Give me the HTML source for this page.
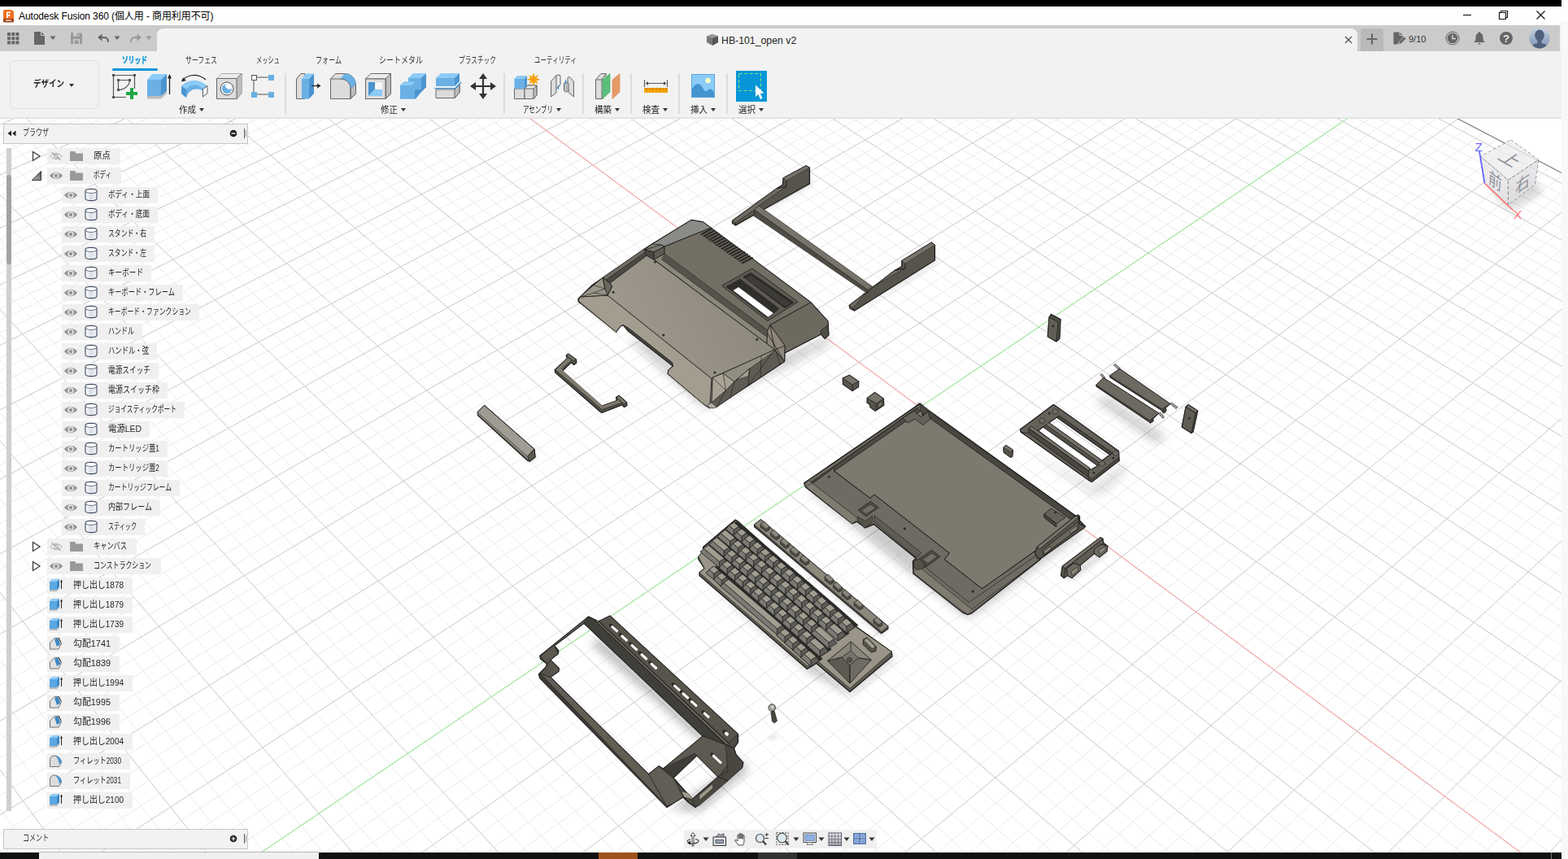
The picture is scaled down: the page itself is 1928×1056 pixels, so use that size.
<!DOCTYPE html>
<html lang="ja"><head><meta charset="utf-8"><title>Autodesk Fusion 360</title>
<style>
html,body{margin:0;padding:0}
body{width:1928px;height:1056px;position:relative;overflow:hidden;background:#f8f8f8;font-family:"Liberation Sans","Noto Sans CJK JP",sans-serif;font-size:12px;color:#222}
.abs{position:absolute}

.t{position:absolute;white-space:nowrap;line-height:1}
.sx{display:inline-block;transform-origin:0 50%;white-space:nowrap}
.sep{position:absolute;top:90px;width:2px;height:50px;background:#dcdcdc}
.tab{position:absolute;top:67px;font-size:11px;color:#333;line-height:14px;white-space:nowrap}
.grp{position:absolute;top:128px;font-size:11px;color:#222;line-height:14px;white-space:nowrap}
.dd{display:inline-block;width:0;height:0;border-left:3.5px solid transparent;border-right:3.5px solid transparent;border-top:4.5px solid #333;vertical-align:middle;margin-left:3px;margin-top:-2px}

</style></head><body>
<svg width="1920" height="902" viewBox="0 146 1920 902" style="position:absolute;left:0;top:146px;background:#fff" shape-rendering="auto">
<g stroke-linecap="butt">
<line x1="-770.3" y1="251.3" x2="807.9" y2="-367.8" stroke="#ebebeb" stroke-width="1"/>
<line x1="-764.7" y1="260.5" x2="816.6" y2="-363.2" stroke="#ebebeb" stroke-width="1"/>
<line x1="-759.1" y1="269.7" x2="825.4" y2="-358.6" stroke="#ebebeb" stroke-width="1"/>
<line x1="-753.4" y1="279.0" x2="834.3" y2="-354.0" stroke="#ebebeb" stroke-width="1"/>
<line x1="-741.9" y1="297.8" x2="852.2" y2="-344.6" stroke="#ebebeb" stroke-width="1"/>
<line x1="-736.1" y1="307.3" x2="861.2" y2="-339.9" stroke="#ebebeb" stroke-width="1"/>
<line x1="-730.2" y1="316.9" x2="870.3" y2="-335.2" stroke="#ebebeb" stroke-width="1"/>
<line x1="-724.3" y1="326.6" x2="879.5" y2="-330.4" stroke="#ebebeb" stroke-width="1"/>
<line x1="-712.3" y1="346.3" x2="897.9" y2="-320.8" stroke="#ebebeb" stroke-width="1"/>
<line x1="-706.2" y1="356.2" x2="907.2" y2="-315.9" stroke="#ebebeb" stroke-width="1"/>
<line x1="-700.1" y1="366.3" x2="916.6" y2="-311.0" stroke="#ebebeb" stroke-width="1"/>
<line x1="-693.9" y1="376.4" x2="926.0" y2="-306.1" stroke="#ebebeb" stroke-width="1"/>
<line x1="-681.3" y1="397.0" x2="945.1" y2="-296.2" stroke="#ebebeb" stroke-width="1"/>
<line x1="-675.0" y1="407.4" x2="954.7" y2="-291.2" stroke="#ebebeb" stroke-width="1"/>
<line x1="-668.6" y1="418.0" x2="964.4" y2="-286.1" stroke="#ebebeb" stroke-width="1"/>
<line x1="-662.1" y1="428.6" x2="974.1" y2="-281.0" stroke="#ebebeb" stroke-width="1"/>
<line x1="-648.9" y1="450.1" x2="993.8" y2="-270.8" stroke="#ebebeb" stroke-width="1"/>
<line x1="-642.3" y1="461.0" x2="1003.7" y2="-265.6" stroke="#ebebeb" stroke-width="1"/>
<line x1="-635.5" y1="472.1" x2="1013.7" y2="-260.4" stroke="#ebebeb" stroke-width="1"/>
<line x1="-628.7" y1="483.2" x2="1023.8" y2="-255.1" stroke="#ebebeb" stroke-width="1"/>
<line x1="-614.9" y1="505.8" x2="1044.1" y2="-244.5" stroke="#ebebeb" stroke-width="1"/>
<line x1="-608.0" y1="517.2" x2="1054.3" y2="-239.2" stroke="#ebebeb" stroke-width="1"/>
<line x1="-600.9" y1="528.8" x2="1064.7" y2="-233.8" stroke="#ebebeb" stroke-width="1"/>
<line x1="-593.8" y1="540.5" x2="1075.1" y2="-228.4" stroke="#ebebeb" stroke-width="1"/>
<line x1="-579.3" y1="564.2" x2="1096.1" y2="-217.4" stroke="#ebebeb" stroke-width="1"/>
<line x1="-572.0" y1="576.2" x2="1106.7" y2="-211.9" stroke="#ebebeb" stroke-width="1"/>
<line x1="-564.5" y1="588.4" x2="1117.4" y2="-206.3" stroke="#ebebeb" stroke-width="1"/>
<line x1="-557.0" y1="600.7" x2="1128.1" y2="-200.7" stroke="#ebebeb" stroke-width="1"/>
<line x1="-541.8" y1="625.6" x2="1149.8" y2="-189.4" stroke="#ebebeb" stroke-width="1"/>
<line x1="-534.1" y1="638.2" x2="1160.8" y2="-183.6" stroke="#ebebeb" stroke-width="1"/>
<line x1="-526.3" y1="651.0" x2="1171.8" y2="-177.9" stroke="#ebebeb" stroke-width="1"/>
<line x1="-518.4" y1="663.9" x2="1183.0" y2="-172.1" stroke="#ebebeb" stroke-width="1"/>
<line x1="-502.4" y1="690.1" x2="1205.4" y2="-160.3" stroke="#ebebeb" stroke-width="1"/>
<line x1="-494.3" y1="703.4" x2="1216.8" y2="-154.4" stroke="#ebebeb" stroke-width="1"/>
<line x1="-486.1" y1="716.9" x2="1228.2" y2="-148.5" stroke="#ebebeb" stroke-width="1"/>
<line x1="-477.8" y1="730.5" x2="1239.8" y2="-142.4" stroke="#ebebeb" stroke-width="1"/>
<line x1="-460.9" y1="758.1" x2="1263.0" y2="-130.3" stroke="#ebebeb" stroke-width="1"/>
<line x1="-452.4" y1="772.1" x2="1274.8" y2="-124.2" stroke="#ebebeb" stroke-width="1"/>
<line x1="-443.7" y1="786.3" x2="1286.6" y2="-118.0" stroke="#ebebeb" stroke-width="1"/>
<line x1="-435.0" y1="800.6" x2="1298.6" y2="-111.8" stroke="#ebebeb" stroke-width="1"/>
<line x1="-417.2" y1="829.8" x2="1322.7" y2="-99.2" stroke="#ebebeb" stroke-width="1"/>
<line x1="-408.1" y1="844.6" x2="1334.9" y2="-92.8" stroke="#ebebeb" stroke-width="1"/>
<line x1="-399.0" y1="859.6" x2="1347.1" y2="-86.4" stroke="#ebebeb" stroke-width="1"/>
<line x1="-389.8" y1="874.7" x2="1359.5" y2="-80.0" stroke="#ebebeb" stroke-width="1"/>
<line x1="-371.0" y1="905.5" x2="1384.5" y2="-66.9" stroke="#ebebeb" stroke-width="1"/>
<line x1="-361.4" y1="921.2" x2="1397.1" y2="-60.3" stroke="#ebebeb" stroke-width="1"/>
<line x1="-351.7" y1="937.0" x2="1409.9" y2="-53.7" stroke="#ebebeb" stroke-width="1"/>
<line x1="-342.0" y1="953.0" x2="1422.7" y2="-47.0" stroke="#ebebeb" stroke-width="1"/>
<line x1="-322.1" y1="985.6" x2="1448.6" y2="-33.5" stroke="#ebebeb" stroke-width="1"/>
<line x1="-312.0" y1="1002.2" x2="1461.7" y2="-26.6" stroke="#ebebeb" stroke-width="1"/>
<line x1="-301.7" y1="1019.0" x2="1474.9" y2="-19.8" stroke="#ebebeb" stroke-width="1"/>
<line x1="-291.4" y1="1035.9" x2="1488.2" y2="-12.8" stroke="#ebebeb" stroke-width="1"/>
<line x1="-270.3" y1="1070.5" x2="1515.2" y2="1.2" stroke="#ebebeb" stroke-width="1"/>
<line x1="-259.5" y1="1088.1" x2="1528.8" y2="8.3" stroke="#ebebeb" stroke-width="1"/>
<line x1="-248.7" y1="1105.8" x2="1542.5" y2="15.5" stroke="#ebebeb" stroke-width="1"/>
<line x1="-237.7" y1="1123.9" x2="1556.3" y2="22.7" stroke="#ebebeb" stroke-width="1"/>
<line x1="-215.3" y1="1160.5" x2="1584.3" y2="37.3" stroke="#ebebeb" stroke-width="1"/>
<line x1="-203.9" y1="1179.2" x2="1598.4" y2="44.7" stroke="#ebebeb" stroke-width="1"/>
<line x1="-192.3" y1="1198.1" x2="1612.7" y2="52.1" stroke="#ebebeb" stroke-width="1"/>
<line x1="-180.6" y1="1217.3" x2="1627.1" y2="59.6" stroke="#ebebeb" stroke-width="1"/>
<line x1="-156.8" y1="1256.3" x2="1656.1" y2="74.8" stroke="#ebebeb" stroke-width="1"/>
<line x1="-144.7" y1="1276.2" x2="1670.8" y2="82.5" stroke="#ebebeb" stroke-width="1"/>
<line x1="-132.4" y1="1296.4" x2="1685.7" y2="90.2" stroke="#ebebeb" stroke-width="1"/>
<line x1="-119.9" y1="1316.8" x2="1700.6" y2="98.0" stroke="#ebebeb" stroke-width="1"/>
<line x1="-94.5" y1="1358.4" x2="1730.9" y2="113.8" stroke="#ebebeb" stroke-width="1"/>
<line x1="-81.6" y1="1379.6" x2="1746.2" y2="121.8" stroke="#ebebeb" stroke-width="1"/>
<line x1="-68.5" y1="1401.1" x2="1761.6" y2="129.8" stroke="#ebebeb" stroke-width="1"/>
<line x1="-55.2" y1="1422.9" x2="1777.2" y2="137.9" stroke="#ebebeb" stroke-width="1"/>
<line x1="-28.0" y1="1467.3" x2="1808.7" y2="154.4" stroke="#ebebeb" stroke-width="1"/>
<line x1="-14.2" y1="1490.0" x2="1824.6" y2="162.7" stroke="#ebebeb" stroke-width="1"/>
<line x1="-0.2" y1="1513.0" x2="1840.7" y2="171.1" stroke="#ebebeb" stroke-width="1"/>
<line x1="14.1" y1="1536.3" x2="1856.9" y2="179.5" stroke="#ebebeb" stroke-width="1"/>
<line x1="43.1" y1="1583.9" x2="1889.7" y2="196.7" stroke="#ebebeb" stroke-width="1"/>
<line x1="57.9" y1="1608.2" x2="1906.4" y2="205.3" stroke="#ebebeb" stroke-width="1"/>
<line x1="73.0" y1="1632.8" x2="1923.1" y2="214.1" stroke="#ebebeb" stroke-width="1"/>
<line x1="88.2" y1="1657.8" x2="1940.0" y2="222.9" stroke="#ebebeb" stroke-width="1"/>
<line x1="119.4" y1="1708.9" x2="1974.3" y2="240.8" stroke="#ebebeb" stroke-width="1"/>
<line x1="135.3" y1="1735.0" x2="1991.6" y2="249.8" stroke="#ebebeb" stroke-width="1"/>
<line x1="151.5" y1="1761.5" x2="2009.1" y2="258.9" stroke="#ebebeb" stroke-width="1"/>
<line x1="167.9" y1="1788.3" x2="2026.7" y2="268.1" stroke="#ebebeb" stroke-width="1"/>
<line x1="201.5" y1="1843.3" x2="2062.5" y2="286.8" stroke="#ebebeb" stroke-width="1"/>
<line x1="218.6" y1="1871.4" x2="2080.6" y2="296.2" stroke="#ebebeb" stroke-width="1"/>
<line x1="236.0" y1="1899.9" x2="2098.9" y2="305.8" stroke="#ebebeb" stroke-width="1"/>
<line x1="253.7" y1="1928.9" x2="2117.3" y2="315.4" stroke="#ebebeb" stroke-width="1"/>
<line x1="289.9" y1="1988.2" x2="2154.7" y2="334.9" stroke="#ebebeb" stroke-width="1"/>
<line x1="308.5" y1="2018.6" x2="2173.6" y2="344.7" stroke="#ebebeb" stroke-width="1"/>
<line x1="327.3" y1="2049.4" x2="2192.7" y2="354.7" stroke="#ebebeb" stroke-width="1"/>
<line x1="346.4" y1="2080.7" x2="2212.0" y2="364.8" stroke="#ebebeb" stroke-width="1"/>
<line x1="385.6" y1="2144.9" x2="2251.0" y2="385.1" stroke="#ebebeb" stroke-width="1"/>
<line x1="405.7" y1="2177.8" x2="2270.8" y2="395.5" stroke="#ebebeb" stroke-width="1"/>
<line x1="426.1" y1="2211.3" x2="2290.8" y2="405.9" stroke="#ebebeb" stroke-width="1"/>
<line x1="446.8" y1="2245.2" x2="2311.0" y2="416.4" stroke="#ebebeb" stroke-width="1"/>
<line x1="489.3" y1="2314.9" x2="2351.9" y2="437.8" stroke="#ebebeb" stroke-width="1"/>
<line x1="511.2" y1="2350.7" x2="2372.7" y2="448.6" stroke="#ebebeb" stroke-width="1"/>
<line x1="533.4" y1="2387.0" x2="2393.6" y2="459.5" stroke="#ebebeb" stroke-width="1"/>
<line x1="555.9" y1="2424.0" x2="2414.8" y2="470.6" stroke="#ebebeb" stroke-width="1"/>
<line x1="602.3" y1="2500.0" x2="2457.6" y2="492.9" stroke="#ebebeb" stroke-width="1"/>
<line x1="626.1" y1="2539.0" x2="2479.4" y2="504.3" stroke="#ebebeb" stroke-width="1"/>
<line x1="650.3" y1="2578.7" x2="2501.4" y2="515.7" stroke="#ebebeb" stroke-width="1"/>
<line x1="675.0" y1="2619.1" x2="2523.5" y2="527.3" stroke="#ebebeb" stroke-width="1"/>
<line x1="725.7" y1="2702.2" x2="2568.6" y2="550.8" stroke="#ebebeb" stroke-width="1"/>
<line x1="751.8" y1="2744.9" x2="2591.4" y2="562.7" stroke="#ebebeb" stroke-width="1"/>
<line x1="778.3" y1="2788.4" x2="2614.5" y2="574.7" stroke="#ebebeb" stroke-width="1"/>
<line x1="805.4" y1="2832.7" x2="2637.7" y2="586.9" stroke="#ebebeb" stroke-width="1"/>
<line x1="-754.9" y1="234.2" x2="865.9" y2="2837.0" stroke="#ebebeb" stroke-width="1"/>
<line x1="-734.2" y1="226.1" x2="898.2" y2="2796.7" stroke="#ebebeb" stroke-width="1"/>
<line x1="-713.6" y1="218.1" x2="930.0" y2="2757.1" stroke="#ebebeb" stroke-width="1"/>
<line x1="-693.2" y1="210.1" x2="961.2" y2="2718.2" stroke="#ebebeb" stroke-width="1"/>
<line x1="-652.9" y1="194.4" x2="1022.1" y2="2642.2" stroke="#ebebeb" stroke-width="1"/>
<line x1="-633.0" y1="186.6" x2="1051.8" y2="2605.2" stroke="#ebebeb" stroke-width="1"/>
<line x1="-613.2" y1="178.9" x2="1081.0" y2="2568.8" stroke="#ebebeb" stroke-width="1"/>
<line x1="-593.5" y1="171.2" x2="1109.8" y2="2532.9" stroke="#ebebeb" stroke-width="1"/>
<line x1="-554.7" y1="156.0" x2="1165.9" y2="2463.0" stroke="#ebebeb" stroke-width="1"/>
<line x1="-535.5" y1="148.5" x2="1193.3" y2="2428.8" stroke="#ebebeb" stroke-width="1"/>
<line x1="-516.4" y1="141.1" x2="1220.3" y2="2395.2" stroke="#ebebeb" stroke-width="1"/>
<line x1="-497.5" y1="133.7" x2="1246.9" y2="2362.1" stroke="#ebebeb" stroke-width="1"/>
<line x1="-460.1" y1="119.1" x2="1298.8" y2="2297.4" stroke="#ebebeb" stroke-width="1"/>
<line x1="-441.5" y1="111.9" x2="1324.1" y2="2265.8" stroke="#ebebeb" stroke-width="1"/>
<line x1="-423.2" y1="104.7" x2="1349.1" y2="2234.7" stroke="#ebebeb" stroke-width="1"/>
<line x1="-404.9" y1="97.6" x2="1373.7" y2="2204.0" stroke="#ebebeb" stroke-width="1"/>
<line x1="-368.8" y1="83.5" x2="1421.8" y2="2144.0" stroke="#ebebeb" stroke-width="1"/>
<line x1="-350.9" y1="76.5" x2="1445.4" y2="2114.7" stroke="#ebebeb" stroke-width="1"/>
<line x1="-333.2" y1="69.6" x2="1468.6" y2="2085.8" stroke="#ebebeb" stroke-width="1"/>
<line x1="-315.6" y1="62.7" x2="1491.4" y2="2057.3" stroke="#ebebeb" stroke-width="1"/>
<line x1="-280.7" y1="49.1" x2="1536.2" y2="2001.5" stroke="#ebebeb" stroke-width="1"/>
<line x1="-263.5" y1="42.4" x2="1558.1" y2="1974.2" stroke="#ebebeb" stroke-width="1"/>
<line x1="-246.4" y1="35.7" x2="1579.7" y2="1947.3" stroke="#ebebeb" stroke-width="1"/>
<line x1="-229.4" y1="29.1" x2="1601.0" y2="1920.8" stroke="#ebebeb" stroke-width="1"/>
<line x1="-195.7" y1="16.0" x2="1642.7" y2="1868.8" stroke="#ebebeb" stroke-width="1"/>
<line x1="-179.1" y1="9.5" x2="1663.1" y2="1843.3" stroke="#ebebeb" stroke-width="1"/>
<line x1="-162.5" y1="3.0" x2="1683.3" y2="1818.2" stroke="#ebebeb" stroke-width="1"/>
<line x1="-146.1" y1="-3.4" x2="1703.1" y2="1793.4" stroke="#ebebeb" stroke-width="1"/>
<line x1="-113.6" y1="-16.1" x2="1742.1" y2="1744.8" stroke="#ebebeb" stroke-width="1"/>
<line x1="-97.5" y1="-22.4" x2="1761.2" y2="1721.0" stroke="#ebebeb" stroke-width="1"/>
<line x1="-81.5" y1="-28.6" x2="1780.1" y2="1697.5" stroke="#ebebeb" stroke-width="1"/>
<line x1="-65.7" y1="-34.8" x2="1798.7" y2="1674.3" stroke="#ebebeb" stroke-width="1"/>
<line x1="-34.2" y1="-47.1" x2="1835.2" y2="1628.8" stroke="#ebebeb" stroke-width="1"/>
<line x1="-18.7" y1="-53.1" x2="1853.1" y2="1606.5" stroke="#ebebeb" stroke-width="1"/>
<line x1="-3.2" y1="-59.2" x2="1870.8" y2="1584.5" stroke="#ebebeb" stroke-width="1"/>
<line x1="12.1" y1="-65.2" x2="1888.2" y2="1562.7" stroke="#ebebeb" stroke-width="1"/>
<line x1="42.6" y1="-77.0" x2="1922.5" y2="1520.0" stroke="#ebebeb" stroke-width="1"/>
<line x1="57.6" y1="-82.9" x2="1939.3" y2="1499.1" stroke="#ebebeb" stroke-width="1"/>
<line x1="72.6" y1="-88.7" x2="1955.9" y2="1478.4" stroke="#ebebeb" stroke-width="1"/>
<line x1="87.4" y1="-94.5" x2="1972.3" y2="1457.9" stroke="#ebebeb" stroke-width="1"/>
<line x1="116.9" y1="-106.0" x2="2004.5" y2="1417.8" stroke="#ebebeb" stroke-width="1"/>
<line x1="131.4" y1="-111.7" x2="2020.3" y2="1398.1" stroke="#ebebeb" stroke-width="1"/>
<line x1="145.9" y1="-117.4" x2="2035.9" y2="1378.6" stroke="#ebebeb" stroke-width="1"/>
<line x1="160.3" y1="-123.0" x2="2051.4" y2="1359.4" stroke="#ebebeb" stroke-width="1"/>
<line x1="188.8" y1="-134.1" x2="2081.7" y2="1321.5" stroke="#ebebeb" stroke-width="1"/>
<line x1="202.9" y1="-139.6" x2="2096.6" y2="1303.0" stroke="#ebebeb" stroke-width="1"/>
<line x1="216.9" y1="-145.1" x2="2111.4" y2="1284.6" stroke="#ebebeb" stroke-width="1"/>
<line x1="230.9" y1="-150.5" x2="2125.9" y2="1266.4" stroke="#ebebeb" stroke-width="1"/>
<line x1="258.5" y1="-161.3" x2="2154.6" y2="1230.8" stroke="#ebebeb" stroke-width="1"/>
<line x1="272.2" y1="-166.6" x2="2168.6" y2="1213.2" stroke="#ebebeb" stroke-width="1"/>
<line x1="285.8" y1="-171.9" x2="2182.5" y2="1195.9" stroke="#ebebeb" stroke-width="1"/>
<line x1="299.3" y1="-177.2" x2="2196.3" y2="1178.7" stroke="#ebebeb" stroke-width="1"/>
<line x1="326.0" y1="-187.7" x2="2223.4" y2="1145.0" stroke="#ebebeb" stroke-width="1"/>
<line x1="339.3" y1="-192.8" x2="2236.7" y2="1128.4" stroke="#ebebeb" stroke-width="1"/>
<line x1="352.5" y1="-198.0" x2="2249.8" y2="1112.0" stroke="#ebebeb" stroke-width="1"/>
<line x1="365.6" y1="-203.1" x2="2262.9" y2="1095.8" stroke="#ebebeb" stroke-width="1"/>
<line x1="391.5" y1="-213.2" x2="2288.5" y2="1063.8" stroke="#ebebeb" stroke-width="1"/>
<line x1="404.4" y1="-218.2" x2="2301.1" y2="1048.1" stroke="#ebebeb" stroke-width="1"/>
<line x1="417.2" y1="-223.2" x2="2313.5" y2="1032.6" stroke="#ebebeb" stroke-width="1"/>
<line x1="429.9" y1="-228.2" x2="2325.9" y2="1017.2" stroke="#ebebeb" stroke-width="1"/>
<line x1="455.1" y1="-238.0" x2="2350.2" y2="986.9" stroke="#ebebeb" stroke-width="1"/>
<line x1="467.5" y1="-242.9" x2="2362.1" y2="972.0" stroke="#ebebeb" stroke-width="1"/>
<line x1="480.0" y1="-247.7" x2="2374.0" y2="957.3" stroke="#ebebeb" stroke-width="1"/>
<line x1="492.3" y1="-252.5" x2="2385.7" y2="942.7" stroke="#ebebeb" stroke-width="1"/>
<line x1="516.7" y1="-262.1" x2="2408.7" y2="914.0" stroke="#ebebeb" stroke-width="1"/>
<line x1="528.8" y1="-266.8" x2="2420.1" y2="899.8" stroke="#ebebeb" stroke-width="1"/>
<line x1="540.9" y1="-271.5" x2="2431.3" y2="885.8" stroke="#ebebeb" stroke-width="1"/>
<line x1="552.9" y1="-276.2" x2="2442.4" y2="871.9" stroke="#ebebeb" stroke-width="1"/>
<line x1="576.6" y1="-285.4" x2="2464.4" y2="844.6" stroke="#ebebeb" stroke-width="1"/>
<line x1="588.4" y1="-290.0" x2="2475.2" y2="831.2" stroke="#ebebeb" stroke-width="1"/>
<line x1="600.1" y1="-294.6" x2="2485.8" y2="817.8" stroke="#ebebeb" stroke-width="1"/>
<line x1="611.7" y1="-299.1" x2="2496.4" y2="804.6" stroke="#ebebeb" stroke-width="1"/>
<line x1="634.8" y1="-308.1" x2="2517.3" y2="778.6" stroke="#ebebeb" stroke-width="1"/>
<line x1="646.2" y1="-312.6" x2="2527.6" y2="765.8" stroke="#ebebeb" stroke-width="1"/>
<line x1="657.6" y1="-317.0" x2="2537.8" y2="753.1" stroke="#ebebeb" stroke-width="1"/>
<line x1="668.9" y1="-321.4" x2="2547.8" y2="740.6" stroke="#ebebeb" stroke-width="1"/>
<line x1="691.3" y1="-330.2" x2="2567.7" y2="715.8" stroke="#ebebeb" stroke-width="1"/>
<line x1="702.4" y1="-334.5" x2="2577.5" y2="703.6" stroke="#ebebeb" stroke-width="1"/>
<line x1="713.5" y1="-338.8" x2="2587.2" y2="691.5" stroke="#ebebeb" stroke-width="1"/>
<line x1="724.5" y1="-343.1" x2="2596.8" y2="679.5" stroke="#ebebeb" stroke-width="1"/>
<line x1="746.3" y1="-351.6" x2="2615.8" y2="655.8" stroke="#ebebeb" stroke-width="1"/>
<line x1="757.1" y1="-355.9" x2="2625.2" y2="644.2" stroke="#ebebeb" stroke-width="1"/>
<line x1="767.8" y1="-360.1" x2="2634.4" y2="632.6" stroke="#ebebeb" stroke-width="1"/>
<line x1="778.5" y1="-364.2" x2="2643.6" y2="621.2" stroke="#ebebeb" stroke-width="1"/>
<line x1="-775.8" y1="242.3" x2="799.2" y2="-372.3" stroke="#c9c9c9" stroke-width="1"/>
<line x1="-747.7" y1="288.3" x2="843.2" y2="-349.3" stroke="#c9c9c9" stroke-width="1"/>
<line x1="-718.3" y1="336.4" x2="888.7" y2="-325.6" stroke="#c9c9c9" stroke-width="1"/>
<line x1="-687.7" y1="386.7" x2="935.5" y2="-301.2" stroke="#c9c9c9" stroke-width="1"/>
<line x1="-655.5" y1="439.3" x2="983.9" y2="-275.9" stroke="#c9c9c9" stroke-width="1"/>
<line x1="-621.9" y1="494.4" x2="1033.9" y2="-249.8" stroke="#c9c9c9" stroke-width="1"/>
<line x1="-586.6" y1="552.3" x2="1085.5" y2="-222.9" stroke="#c9c9c9" stroke-width="1"/>
<line x1="-549.5" y1="613.0" x2="1138.9" y2="-195.0" stroke="#c9c9c9" stroke-width="1"/>
<line x1="-510.5" y1="676.9" x2="1194.2" y2="-166.2" stroke="#c9c9c9" stroke-width="1"/>
<line x1="-469.4" y1="744.2" x2="1251.3" y2="-136.4" stroke="#c9c9c9" stroke-width="1"/>
<line x1="-426.1" y1="815.1" x2="1310.6" y2="-105.5" stroke="#c9c9c9" stroke-width="1"/>
<line x1="-380.4" y1="890.0" x2="1371.9" y2="-73.5" stroke="#c9c9c9" stroke-width="1"/>
<line x1="-332.1" y1="969.2" x2="1435.6" y2="-40.3" stroke="#c9c9c9" stroke-width="1"/>
<line x1="-280.9" y1="1053.1" x2="1501.6" y2="-5.8" stroke="#c9c9c9" stroke-width="1"/>
<line x1="-226.6" y1="1142.1" x2="1570.2" y2="30.0" stroke="#c9c9c9" stroke-width="1"/>
<line x1="-168.8" y1="1236.7" x2="1641.5" y2="67.2" stroke="#c9c9c9" stroke-width="1"/>
<line x1="-107.3" y1="1337.4" x2="1715.7" y2="105.9" stroke="#c9c9c9" stroke-width="1"/>
<line x1="-41.7" y1="1444.9" x2="1792.9" y2="146.1" stroke="#c9c9c9" stroke-width="1"/>
<line x1="28.5" y1="1559.9" x2="1873.2" y2="188.1" stroke="#c9c9c9" stroke-width="1"/>
<line x1="103.7" y1="1683.2" x2="1957.1" y2="231.8" stroke="#c9c9c9" stroke-width="1"/>
<line x1="184.6" y1="1815.6" x2="2044.5" y2="277.4" stroke="#c9c9c9" stroke-width="1"/>
<line x1="271.7" y1="1958.3" x2="2135.9" y2="325.1" stroke="#c9c9c9" stroke-width="1"/>
<line x1="365.8" y1="2112.6" x2="2231.4" y2="374.9" stroke="#c9c9c9" stroke-width="1"/>
<line x1="467.9" y1="2279.8" x2="2331.4" y2="427.1" stroke="#c9c9c9" stroke-width="1"/>
<line x1="578.9" y1="2461.7" x2="2436.1" y2="481.7" stroke="#c9c9c9" stroke-width="1"/>
<line x1="700.1" y1="2660.3" x2="2545.9" y2="539.0" stroke="#c9c9c9" stroke-width="1"/>
<line x1="833.0" y1="2877.9" x2="2661.3" y2="599.2" stroke="#c9c9c9" stroke-width="1"/>
<line x1="-775.8" y1="242.3" x2="833.0" y2="2877.9" stroke="#c9c9c9" stroke-width="1"/>
<line x1="-673.0" y1="202.2" x2="991.9" y2="2679.9" stroke="#c9c9c9" stroke-width="1"/>
<line x1="-574.0" y1="163.6" x2="1138.1" y2="2497.7" stroke="#c9c9c9" stroke-width="1"/>
<line x1="-478.7" y1="126.4" x2="1273.0" y2="2329.5" stroke="#c9c9c9" stroke-width="1"/>
<line x1="-386.8" y1="90.5" x2="1398.0" y2="2173.8" stroke="#c9c9c9" stroke-width="1"/>
<line x1="-298.1" y1="55.9" x2="1514.0" y2="2029.2" stroke="#c9c9c9" stroke-width="1"/>
<line x1="-212.5" y1="22.5" x2="1622.0" y2="1894.6" stroke="#c9c9c9" stroke-width="1"/>
<line x1="-129.8" y1="-9.8" x2="1722.8" y2="1769.0" stroke="#c9c9c9" stroke-width="1"/>
<line x1="-49.9" y1="-41.0" x2="1817.0" y2="1651.4" stroke="#c9c9c9" stroke-width="1"/>
<line x1="27.4" y1="-71.1" x2="1905.4" y2="1541.2" stroke="#c9c9c9" stroke-width="1"/>
<line x1="102.2" y1="-100.3" x2="1988.5" y2="1437.7" stroke="#c9c9c9" stroke-width="1"/>
<line x1="174.6" y1="-128.6" x2="2066.6" y2="1340.3" stroke="#c9c9c9" stroke-width="1"/>
<line x1="244.7" y1="-155.9" x2="2140.3" y2="1248.5" stroke="#c9c9c9" stroke-width="1"/>
<line x1="312.7" y1="-182.5" x2="2209.9" y2="1161.8" stroke="#c9c9c9" stroke-width="1"/>
<line x1="378.6" y1="-208.2" x2="2275.7" y2="1079.7" stroke="#c9c9c9" stroke-width="1"/>
<line x1="442.5" y1="-233.1" x2="2338.1" y2="1002.0" stroke="#c9c9c9" stroke-width="1"/>
<line x1="504.5" y1="-257.3" x2="2397.3" y2="928.3" stroke="#c9c9c9" stroke-width="1"/>
<line x1="564.8" y1="-280.8" x2="2453.5" y2="858.2" stroke="#c9c9c9" stroke-width="1"/>
<line x1="623.3" y1="-303.7" x2="2506.9" y2="791.6" stroke="#c9c9c9" stroke-width="1"/>
<line x1="680.1" y1="-325.8" x2="2557.8" y2="728.1" stroke="#c9c9c9" stroke-width="1"/>
<line x1="735.4" y1="-347.4" x2="2606.4" y2="667.6" stroke="#c9c9c9" stroke-width="1"/>
<line x1="789.1" y1="-368.4" x2="2652.7" y2="609.9" stroke="#c9c9c9" stroke-width="1"/>
<line x1="799.2" y1="-372.3" x2="2661.3" y2="599.2" stroke="#7a7a7a" stroke-width="1.2"/>
<line x1="244.7" y1="-155.9" x2="2140.3" y2="1248.5" stroke="#ff9696" stroke-width="1.0"/>
<line x1="-107.3" y1="1337.4" x2="1715.7" y2="105.9" stroke="#8af08a" stroke-width="1.0"/>
</g>
<defs><filter id="bl2" x="-30%" y="-30%" width="160%" height="160%"><feGaussianBlur stdDeviation="2"/></filter><filter id="bl3" x="-30%" y="-30%" width="160%" height="160%"><feGaussianBlur stdDeviation="3"/></filter><filter id="bl4" x="-30%" y="-30%" width="160%" height="160%"><feGaussianBlur stdDeviation="4"/></filter><filter id="bl5" x="-30%" y="-30%" width="160%" height="160%"><feGaussianBlur stdDeviation="5"/></filter><filter id="bl6" x="-30%" y="-30%" width="160%" height="160%"><feGaussianBlur stdDeviation="6"/></filter><filter id="bl7" x="-30%" y="-30%" width="160%" height="160%"><feGaussianBlur stdDeviation="7"/></filter><linearGradient id="gmp" gradientUnits="userSpaceOnUse" x1="760" y1="420" x2="930" y2="340"><stop offset="0" stop-color="#9f9a8d"/><stop offset="1" stop-color="#8c877b"/></linearGradient></defs>
<circle cx="1130.6" cy="499.4" r="5" fill="#bbb" opacity=".8"/>
<polygon points="905.0,278.8 997.5,227.5 997.5,217.5 955.0,245.0" fill="#000" opacity="0.13" filter="url(#bl4)"/>
<polygon points="1052.5,383.8 1151.2,322.5 1151.2,310.0 1105.0,342.5" fill="#000" opacity="0.13" filter="url(#bl4)"/>
<polygon points="900.5,271.2 955.0,231.8 962.5,227.0 963.0,218.8 991.2,203.8 995.5,206.2 995.5,225.8 904.5,277.0 900.5,274.5" fill="#57544c" stroke="#1b1b1a" stroke-width="1.2" />
<polygon points="900.5,271.2 955.0,231.8 966.2,229.5 933.0,253.0 927.5,258.0 904.5,274.0" fill="#6f6b62" stroke="#1b1b1a" stroke-width="0.5" />
<polygon points="963.0,218.8 991.2,203.8 995.5,206.2 967.0,222.0" fill="#77736a" stroke="#1b1b1a" stroke-width="0.5" />
<polyline points="967.0,222.0 967.0,229.5 955.0,231.8" fill="none" stroke="#1b1b1a" stroke-width="0.8" />
<polyline points="904.5,274.0 904.5,277.0" fill="none" stroke="#1b1b1a" stroke-width="0.8" />
<polygon points="1044.2,375.5 1100.0,332.5 1108.8,327.5 1108.8,320.5 1145.5,298.0 1149.5,301.2 1149.5,320.0 1050.5,382.0 1045.0,379.2" fill="#57544c" stroke="#1b1b1a" stroke-width="1.2" />
<polygon points="1044.2,375.5 1100.0,332.5 1113.0,330.0 1072.5,352.5 1067.5,356.5 1048.8,378.8" fill="#6f6b62" stroke="#1b1b1a" stroke-width="0.5" />
<polygon points="1108.8,320.5 1145.5,298.0 1149.5,301.2 1113.0,324.2" fill="#77736a" stroke="#1b1b1a" stroke-width="0.5" />
<polyline points="1113.0,324.2 1113.0,330.0 1100.0,332.5" fill="none" stroke="#1b1b1a" stroke-width="0.8" />
<polyline points="1048.8,378.8 1050.5,382.0" fill="none" stroke="#1b1b1a" stroke-width="0.8" />
<polygon points="927.5,258.0 1067.0,356.2 1067.0,361.0 927.0,265.5" fill="#4e4b44" stroke="#1b1b1a" stroke-width="0.6" />
<polygon points="927.5,258.0 933.0,253.0 1072.5,352.0 1067.0,356.2" fill="#77736a" stroke="#1b1b1a" stroke-width="0.6" />
<polygon points="1292.5,386.2 1304.2,392.5 1303.0,416.2 1298.8,420.0 1288.2,413.8 1290.0,390.0" fill="#4d4a43" stroke="#1b1b1a" stroke-width="1.1" />
<polygon points="1290.0,390.0 1301.2,396.2 1298.8,419.5 1288.2,413.8" fill="#625e56" stroke="#1b1b1a" stroke-width="0.8" />
<circle cx="1295.0" cy="400.8" r="1.1" fill="#44423c" stroke="#1b1b1a" stroke-width="0.7"/>
<polygon points="770.0,415.0 865.0,502.5 970.0,451.2 1020.0,423.8 1022.5,411.2 965.0,435.0" fill="#000" opacity="0.17" filter="url(#bl6)"/>
<polygon points="850.0,270.5 864.5,273.0 997.0,371.8 1018.0,395.0 1018.8,412.0 1014.2,416.2 1009.5,410.8 965.0,433.8 964.5,444.5 920.0,473.8 880.0,500.0 872.5,501.5 866.2,497.5 821.2,459.5 821.8,455.5 827.5,450.0 772.5,407.0 766.2,399.5 763.0,400.8 757.5,408.0 711.2,370.8 711.0,367.5 727.5,351.2 792.5,306.2 802.5,299.5" fill="#8e897d" stroke="#1b1b1a" stroke-width="1.4" stroke-linejoin="round"/>
<polygon points="850.0,270.5 864.5,273.0 874.2,280.0 816.8,303.0 812.5,300.8 802.0,300.0" fill="#8a8a86" stroke="#1b1b1a" stroke-width="0.8" />
<polygon points="816.8,303.2 874.2,280.0 997.0,371.8 947.0,399.5 943.8,406.2 816.8,312.0" fill="#726e64" stroke="#1b1b1a" stroke-width="0.8" />
<polygon points="816.8,312.0 943.8,406.2 943.0,422.5 803.8,318.8" fill="#8c877b" stroke="#1b1b1a" stroke-width="0.8" />
<polygon points="816.8,312.0 943.8,406.2 943.0,414.2 813.0,318.5" fill="#56534b" />
<polyline points="813.0,318.5 943.0,414.2" fill="none" stroke="#1b1b1a" stroke-width="0.5" />
<polygon points="793.0,307.0 812.5,300.8 816.8,303.2 803.8,310.0" fill="#7b776e" stroke="#1b1b1a" stroke-width="0.8" />
<polygon points="793.0,307.0 803.8,310.0 803.8,319.2 793.8,314.2" fill="#4a4842" stroke="#1b1b1a" stroke-width="0.8" />
<polygon points="803.8,310.0 816.8,303.2 816.8,312.0 803.8,319.2" fill="#5d5a52" stroke="#1b1b1a" stroke-width="0.8" />
<polygon points="997.0,371.8 1018.0,395.0 1018.8,412.0 1014.2,416.2 1009.5,410.8 965.0,433.8 965.0,425.0 947.0,399.5" fill="#6d695f" stroke="#1b1b1a" stroke-width="0.8" />
<polygon points="1009.5,410.8 1014.2,416.2 1018.8,412.0 1018.0,400.0 1009.5,406.2" fill="#4f4c45" stroke="#1b1b1a" stroke-width="0.8" />
<polygon points="947.0,399.5 965.0,425.0 964.5,444.5 952.5,430.0 943.0,422.5 943.8,406.2" fill="#8d8779" stroke="#1b1b1a" stroke-width="0.8" />
<polyline points="947.0,399.5 952.5,430.0" fill="none" stroke="#1b1b1a" stroke-width="0.8" />
<polyline points="952.5,430.0 965.0,425.0" fill="none" stroke="#1b1b1a" stroke-width="0.8" />
<polyline points="943.8,410.0 964.5,444.5" fill="none" stroke="#1b1b1a" stroke-width="0.8" />
<polygon points="750.0,348.0 795.0,314.2 803.8,319.2 943.0,422.5 952.5,430.0 875.0,465.5 747.0,363.0 752.5,352.5" fill="url(#gmp)" stroke="#1b1b1a" stroke-width="0.8" />
<polygon points="711.2,370.0 713.0,365.0 747.0,363.0 875.0,465.5 872.5,501.2 866.2,497.5 821.2,459.5 821.8,455.5 827.5,450.0 772.5,407.0 766.2,399.5 763.0,400.8 757.5,408.0" fill="#a39d90" stroke="#1b1b1a" stroke-width="0.8" />
<polyline points="714.0,373.0 759.5,410.0" fill="none" stroke="#6d695f" stroke-width="0.8" />
<polyline points="823.8,461.5 868.8,500.0" fill="none" stroke="#6d695f" stroke-width="0.8" />
<polygon points="741.2,341.2 791.8,306.2 793.0,310.5 745.0,344.2" fill="#6f6b62" stroke="#1b1b1a" stroke-width="0.5" />
<polygon points="745.0,344.2 793.0,310.5 795.0,314.2 750.0,348.0" fill="#4b4943" stroke="#1b1b1a" stroke-width="0.5" />
<polygon points="713.0,365.0 730.0,350.5 741.2,341.2 750.0,348.0 752.5,352.5 747.0,363.0" fill="#9a9588" stroke="#1b1b1a" stroke-width="0.8" />
<polygon points="741.2,341.2 750.0,348.0 752.5,352.5 747.0,363.0 743.8,355.0" fill="#6b675e" stroke="#1b1b1a" stroke-width="0.8" />
<polyline points="713.0,365.0 730.0,360.0 747.0,363.0" fill="none" stroke="#1b1b1a" stroke-width="0.6" />
<polyline points="730.0,350.5 743.8,355.0 741.2,341.2" fill="none" stroke="#1b1b1a" stroke-width="0.6" />
<polyline points="730.0,360.0 743.8,355.0" fill="none" stroke="#1b1b1a" stroke-width="0.6" />
<polygon points="766.2,399.5 772.5,407.0 827.5,450.0 826.8,445.8 772.5,403.0" fill="#45433d" stroke="#1b1b1a" stroke-width="0.8" />
<polygon points="876.2,464.2 952.5,430.0 964.5,444.5 920.0,473.8 881.2,500.5 872.5,501.5 875.0,495.0" fill="#5f5b53" stroke="#1b1b1a" stroke-width="0.8" />
<polygon points="876.2,464.2 889.2,458.8 903.0,469.2 892.5,480.0 875.0,495.0" fill="#a8a294" stroke="#1b1b1a" stroke-width="0.8" />
<polygon points="889.2,458.8 903.0,469.2 921.8,453.0 953.8,430.5 952.5,430.0" fill="#938e82" stroke="#1b1b1a" stroke-width="0.5" />
<polygon points="905.0,467.0 921.8,453.0 920.0,462.5" fill="#a39d90" stroke="#1b1b1a" stroke-width="0.5" />
<polygon points="870.0,498.0 875.0,495.0 881.2,500.5 877.5,501.8 872.5,501.5" fill="#b0ada5" stroke="#1b1b1a" stroke-width="0.5" />
<polyline points="876.2,464.2 892.5,480.0" fill="none" stroke="#1b1b1a" stroke-width="0.6" />
<polyline points="889.2,458.8 892.5,480.0" fill="none" stroke="#1b1b1a" stroke-width="0.6" />
<polyline points="892.5,480.0 881.2,500.5" fill="none" stroke="#1b1b1a" stroke-width="0.6" />
<polyline points="903.0,469.2 897.5,490.0" fill="none" stroke="#1b1b1a" stroke-width="0.6" />
<polyline points="921.8,453.0 920.0,473.8" fill="none" stroke="#1b1b1a" stroke-width="0.6" />
<polyline points="903.0,469.2 921.8,453.0" fill="none" stroke="#1b1b1a" stroke-width="0.6" />
<polyline points="952.5,430.0 920.0,473.8" fill="none" stroke="#1b1b1a" stroke-width="0.6" />
<polyline points="936.2,438.0 935.0,463.8" fill="none" stroke="#1b1b1a" stroke-width="0.6" />
<polyline points="953.8,430.5 958.8,448.2" fill="none" stroke="#1b1b1a" stroke-width="0.6" />
<polygon points="860.8,287.8 874.2,280.5 876.2,282.0 862.8,289.2" fill="#2b2a27" />
<polygon points="863.9,289.9 877.4,282.7 879.4,284.2 865.9,291.4" fill="#2b2a27" />
<polygon points="867.0,292.1 880.5,284.9 882.5,286.4 869.0,293.6" fill="#2b2a27" />
<polygon points="870.2,294.4 883.7,287.1 885.7,288.6 872.2,295.9" fill="#2b2a27" />
<polygon points="873.4,296.6 886.9,289.3 888.9,290.8 875.4,298.1" fill="#2b2a27" />
<polygon points="876.5,298.8 890.0,291.5 892.0,293.0 878.5,300.2" fill="#2b2a27" />
<polygon points="879.6,300.9 893.1,293.7 895.1,295.2 881.6,302.4" fill="#2b2a27" />
<polygon points="882.8,303.1 896.3,295.9 898.3,297.4 884.8,304.6" fill="#2b2a27" />
<polygon points="886.0,305.4 899.5,298.1 901.5,299.6 888.0,306.9" fill="#2b2a27" />
<polygon points="889.1,307.6 902.6,300.3 904.6,301.8 891.1,309.1" fill="#2b2a27" />
<polygon points="892.2,309.8 905.8,302.5 907.8,304.0 894.2,311.2" fill="#2b2a27" />
<polygon points="895.4,311.9 908.9,304.7 910.9,306.2 897.4,313.4" fill="#2b2a27" />
<polygon points="898.5,314.1 912.0,306.9 914.0,308.4 900.5,315.6" fill="#2b2a27" />
<polygon points="901.7,316.4 915.2,309.1 917.2,310.6 903.7,317.9" fill="#2b2a27" />
<polygon points="904.9,318.6 918.4,311.3 920.4,312.8 906.9,320.1" fill="#2b2a27" />
<polygon points="908.0,320.8 921.5,313.5 923.5,315.0 910.0,322.2" fill="#2b2a27" />
<polygon points="911.1,322.9 924.6,315.7 926.6,317.2 913.1,324.4" fill="#2b2a27" />
<polygon points="887.5,351.2 925.0,330.0 981.2,371.2 943.8,394.5" fill="#5f5b53" stroke="#1b1b1a" stroke-width="0.8" />
<polygon points="893.0,352.5 910.0,343.0 958.0,379.5 943.8,391.2" fill="#2f2e2b" stroke="#1b1b1a" stroke-width="0.5" />
<polygon points="901.2,357.0 908.0,352.8 951.2,385.0 944.5,390.0" fill="#ffffff" stroke="#1b1b1a" stroke-width="0.4" />
<polygon points="913.8,340.5 923.0,335.2 976.2,371.8 965.0,378.8" fill="#2a2927" stroke="#1b1b1a" stroke-width="0.5" />
<polygon points="916.2,342.0 923.0,338.0 972.5,372.5 965.0,376.8" fill="#3d3c38" />
<circle cx="805.5" cy="322.0" r="1.2" fill="#4a4842" stroke="#1b1b1a" stroke-width="0.7"/>
<circle cx="754.2" cy="359.2" r="1.2" fill="#4a4842" stroke="#1b1b1a" stroke-width="0.7"/>
<circle cx="815.8" cy="412.0" r="1.2" fill="#4a4842" stroke="#1b1b1a" stroke-width="0.7"/>
<circle cx="930.8" cy="417.5" r="1.2" fill="#4a4842" stroke="#1b1b1a" stroke-width="0.7"/>
<circle cx="878.8" cy="458.0" r="1.2" fill="#4a4842" stroke="#1b1b1a" stroke-width="0.7"/>
<polygon points="696.2,436.9 698.8,435.0 708.5,441.9 708.8,446.0 705.6,448.5 702.5,445.6 691.0,456.5 740.0,499.0 758.1,492.5 757.5,488.5 761.0,486.2 770.6,494.8 771.0,498.5 767.5,500.6 765.0,497.8 740.0,507.5 738.1,506.2 682.8,458.1 682.2,454.8 697.2,440.6" fill="#524f48" stroke="#1b1b1a" stroke-width="1.2" stroke-linejoin="round"/>
<polygon points="683.1,454.8 698.1,440.0 701.9,442.8 690.0,453.5 741.2,499.0 760.0,491.9 765.0,495.0 740.0,503.5" fill="#7d796f" />
<polygon points="696.5,437.1 698.8,435.2 708.2,442.0 705.6,444.0" fill="#7d796f" stroke="#1b1b1a" stroke-width="0.6" />
<polygon points="757.9,488.8 761.0,486.5 770.5,494.8 767.5,496.8" fill="#7d796f" stroke="#1b1b1a" stroke-width="0.6" />
<polyline points="683.1,455.0 740.0,503.5 765.0,495.2" fill="none" stroke="#1b1b1a" stroke-width="0.6" />
<polygon points="588.8,511.2 651.2,567.5 660.0,562.5 657.5,555.0" fill="#000" opacity="0.15" filter="url(#bl3)"/>
<polygon points="587.1,506.9 595.6,498.4 656.9,552.1 658.1,561.9 651.2,567.2 648.8,566.2 587.5,510.6" fill="#6e6b63" stroke="#1b1b1a" stroke-width="1.2" stroke-linejoin="round"/>
<polygon points="587.1,506.9 595.6,498.4 656.9,552.1 648.8,561.2" fill="#a19c93" stroke="#1b1b1a" stroke-width="0.8" />
<polygon points="587.1,506.9 648.8,561.2 649.2,564.0 587.4,509.0" fill="#8c887f" />
<polygon points="648.8,561.2 656.9,552.1 658.1,561.9 651.2,567.2" fill="#5d5a52" stroke="#1b1b1a" stroke-width="0.8" />
<polygon points="1036.2,465.0 1044.4,461.2 1056.0,469.0 1055.6,475.6 1048.1,480.6 1036.5,472.5" fill="#57544c" stroke="#1b1b1a" stroke-width="1.1" />
<polygon points="1036.2,465.0 1044.4,461.2 1056.0,469.0 1048.1,473.1" fill="#77736a" stroke="#1b1b1a" stroke-width="0.8" />
<polyline points="1048.1,473.1 1048.1,480.6" fill="none" stroke="#1b1b1a" stroke-width="0.8" />
<polygon points="1066.2,489.4 1075.6,482.5 1086.5,490.2 1086.9,498.1 1076.2,505.4 1070.0,500.6 1069.4,496.9 1066.0,495.0" fill="#57544c" stroke="#1b1b1a" stroke-width="1.1" />
<polygon points="1066.2,489.4 1075.6,482.5 1086.5,490.2 1077.5,496.2" fill="#77736a" stroke="#1b1b1a" stroke-width="0.8" />
<polyline points="1077.5,496.2 1077.5,504.4" fill="none" stroke="#1b1b1a" stroke-width="0.8" />
<polygon points="1079.4,496.9 1085.0,493.1 1085.0,497.5 1079.4,501.5" fill="#77736a" stroke="#1b1b1a" stroke-width="0.5" />
<polygon points="1346.2,492.5 1360.0,485.0 1435.0,536.2 1421.2,546.2" fill="#000" opacity="0.17" filter="url(#bl6)"/>
<polygon points="1369.4,449.0 1371.2,447.5 1377.2,452.5 1375.2,454.0" fill="#a8a59e" stroke="#1b1b1a" stroke-width="0.7" />
<polygon points="1353.1,461.0 1355.0,459.4 1358.8,464.4 1356.9,465.6" fill="#a8a59e" stroke="#1b1b1a" stroke-width="0.7" />
<polygon points="1438.8,496.5 1440.6,495.0 1448.1,500.6 1446.2,502.5" fill="#a8a59e" stroke="#1b1b1a" stroke-width="0.7" />
<polygon points="1424.8,508.5 1426.5,507.0 1431.5,512.5 1429.8,514.4" fill="#a8a59e" stroke="#1b1b1a" stroke-width="0.7" />
<polygon points="1364.4,461.9 1376.9,453.4 1439.0,496.5 1433.5,501.5 1434.0,505.6 1430.6,508.1 1428.1,504.4 1365.0,464.0" fill="#45433d" stroke="#1b1b1a" stroke-width="1.0" />
<polygon points="1364.4,461.9 1376.9,453.4 1439.0,496.5 1428.8,502.8" fill="#6e6a61" stroke="#1b1b1a" stroke-width="0.6" />
<polygon points="1347.8,473.1 1356.9,464.4 1425.0,508.1 1418.1,514.4 1418.1,517.8 1414.4,520.2 1412.5,518.5 1348.1,475.2" fill="#45433d" stroke="#1b1b1a" stroke-width="1.0" />
<polygon points="1347.8,473.1 1356.9,464.4 1425.0,508.1 1413.5,516.9" fill="#6e6a61" stroke="#1b1b1a" stroke-width="0.6" />
<polygon points="1458.1,500.0 1461.2,497.5 1472.8,505.0 1467.2,530.6 1465.0,532.5 1453.1,525.0" fill="#4d4a43" stroke="#1b1b1a" stroke-width="1.1" />
<polygon points="1458.1,500.0 1470.0,507.5 1465.0,532.2 1453.4,524.8" fill="#615d55" stroke="#1b1b1a" stroke-width="0.8" />
<polygon points="1458.1,500.0 1461.2,497.8 1472.8,505.0 1470.0,507.5" fill="#77736a" stroke="#1b1b1a" stroke-width="0.8" />
<circle cx="1462.5" cy="514.0" r="1.1" fill="#3d3b36" stroke="#1b1b1a" stroke-width="0.7"/>
<polygon points="1258.8,550.0 1343.8,610.0 1362.5,603.8 1385.0,580.0 1380.0,567.5 1343.8,596.2" fill="#000" opacity="0.11" filter="url(#bl6)"/>
<path d="M1254.4 528.1 L1295.0 497.5 L1298.8 499.4 L1375.6 554.4 L1376.2 566.2 L1342.5 592.5 L1338.8 590.6 L1255.0 531.0Z M1276.5 529.4 L1282.8 524.8 L1350.0 572.5 L1341.2 577.5Z M1289.8 519.8 L1299.4 513.1 L1364.8 559.0 L1355.0 566.2Z " fill="#66625a" fill-rule="evenodd" stroke="#1b1b1a" stroke-width="1.2" stroke-linejoin="round"/>
<polygon points="1299.4,513.1 1302.5,511.0 1368.1,556.9 1364.8,559.0" fill="#4a4741" stroke="#1b1b1a" stroke-width="0.8" />
<polygon points="1282.8,524.8 1286.2,522.2 1353.8,570.0 1350.0,572.5" fill="#55524a" stroke="#1b1b1a" stroke-width="0.8" />
<polygon points="1286.2,522.2 1289.8,519.8 1355.0,566.2 1353.8,570.0" fill="#77736a" stroke="#1b1b1a" stroke-width="0.5" />
<polygon points="1265.0,526.5 1268.1,524.0 1340.0,575.2 1338.5,579.0" fill="#77736a" stroke="#1b1b1a" stroke-width="0.8" />
<polygon points="1265.0,526.5 1338.5,579.0 1338.1,586.5 1265.0,532.8" fill="#4a4741" stroke="#1b1b1a" stroke-width="0.8" />
<polyline points="1255.0,531.0 1265.0,532.8" fill="none" stroke="#1b1b1a" stroke-width="0.8" />
<polygon points="1338.8,590.6 1342.5,592.5 1376.2,566.2 1375.6,562.5 1342.5,588.5 1338.8,586.2" fill="#4a4741" stroke="#1b1b1a" stroke-width="0.6" />
<polygon points="1294.0,505.0 1297.5,502.2 1301.0,504.4 1301.0,507.2 1297.5,509.4 1294.0,507.5" fill="#6f6b62" stroke="#1b1b1a" stroke-width="0.6" />
<polygon points="1277.8,516.2 1281.2,513.5 1284.8,515.6 1284.8,518.5 1281.2,520.6 1277.8,518.8" fill="#6f6b62" stroke="#1b1b1a" stroke-width="0.6" />
<polygon points="1368.4,556.2 1371.9,553.5 1375.4,555.6 1375.4,558.5 1371.9,560.6 1368.4,558.8" fill="#6f6b62" stroke="#1b1b1a" stroke-width="0.6" />
<polygon points="1351.5,569.0 1355.0,566.2 1358.5,568.4 1358.5,571.2 1355.0,573.4 1351.5,571.5" fill="#6f6b62" stroke="#1b1b1a" stroke-width="0.6" />
<circle cx="1290.2" cy="508.1" r="1.1" fill="#3d3b36" stroke="#1b1b1a" stroke-width="0.7"/>
<circle cx="1368.8" cy="563.1" r="1.1" fill="#3d3b36" stroke="#1b1b1a" stroke-width="0.7"/>
<circle cx="1345.0" cy="581.2" r="1.1" fill="#3d3b36" stroke="#1b1b1a" stroke-width="0.7"/>
<polygon points="1233.8,550.0 1236.9,547.2 1245.6,553.1 1245.0,561.2 1242.5,562.5 1234.0,556.2" fill="#55524a" stroke="#1b1b1a" stroke-width="1.0" />
<polygon points="1233.8,550.0 1236.9,547.2 1245.6,553.1 1242.5,555.6" fill="#77736a" stroke="#1b1b1a" stroke-width="0.5" />
<polygon points="992.5,602.5 1185.0,757.5 1197.5,757.5 1335.0,652.5" fill="#000" opacity="0.2" filter="url(#bl6)"/>
<polygon points="1131.2,496.2 1142.5,505.0 1323.8,635.0 1325.5,633.0 1327.5,635.0 1327.5,640.0 1334.2,647.0 1280.0,686.2 1278.8,688.0 1195.0,753.8 1190.0,755.5 1183.8,753.0 1123.0,705.0 1122.5,690.0 1126.2,686.2 1074.5,644.5 1063.8,648.8 1053.8,641.2 1048.0,643.8 990.5,598.8 988.8,593.8 995.0,589.5" fill="#6f6b62" stroke="#1b1b1a" stroke-width="1.4" stroke-linejoin="round"/>
<polygon points="990.5,597.5 995.0,591.2 1053.8,636.2 1048.0,643.8" fill="#7f7b70" />
<polygon points="1123.8,703.8 1132.5,698.8 1195.0,748.8 1190.0,755.0" fill="#7f7b70" />
<polygon points="1025.5,579.2 1131.5,505.5 1317.5,639.0 1272.5,677.5 1207.5,723.8 1161.2,687.5 1167.5,680.0 1075.0,608.0 1070.0,612.5" fill="#7d796f" stroke="#1b1b1a" stroke-width="0.8" />
<polygon points="1025.5,573.0 1128.0,501.2 1131.5,505.5 1025.5,579.2" fill="#4d4a44" stroke="#1b1b1a" stroke-width="0.5" />
<polygon points="997.5,592.0 1025.5,573.0 1025.5,575.2 1000.0,594.2" fill="#4d4a44" stroke="#1b1b1a" stroke-width="0.4" />
<polygon points="1131.5,499.0 1325.0,637.5 1318.0,639.5 1131.5,505.5" fill="#4a4741" stroke="#1b1b1a" stroke-width="0.5" />
<polyline points="992.0,598.0 1131.2,499.5" fill="none" stroke="#1b1b1a" stroke-width="0.5" />
<polygon points="1110.0,513.8 1123.8,505.0 1132.5,512.5 1141.2,506.2 1143.8,515.0 1135.0,522.5 1125.0,515.0 1116.2,520.0" fill="#66625a" stroke="#1b1b1a" stroke-width="0.8" />
<circle cx="1134.5" cy="509.5" r="1.1" fill="#3d3b36" stroke="#1b1b1a" stroke-width="0.7"/>
<polygon points="1283.8,632.0 1292.5,625.0 1310.0,636.2 1298.8,643.8" fill="#66625a" stroke="#1b1b1a" stroke-width="0.8" />
<polygon points="1283.8,632.0 1298.8,643.8 1298.8,648.0 1283.8,636.2" fill="#46443e" stroke="#1b1b1a" stroke-width="0.8" />
<circle cx="1297.5" cy="630.0" r="1.1" fill="#3d3b36" stroke="#1b1b1a" stroke-width="0.7"/>
<polygon points="1055.0,626.8 1070.5,616.2 1080.5,623.8 1065.0,635.0" fill="#4d4a43" stroke="#1b1b1a" stroke-width="0.6" />
<polygon points="1059.2,627.5 1070.5,620.2 1076.5,624.5 1065.2,632.0" fill="#726e65" stroke="#1b1b1a" stroke-width="0.4" />
<polygon points="1054.5,635.0 1055.0,640.0 1063.0,649.2 1072.5,642.5 1072.5,634.2 1063.8,640.5" fill="#55524a" stroke="#1b1b1a" stroke-width="0.6" />
<polygon points="1075.0,633.8 1133.0,679.5 1127.0,685.5 1075.0,641.8" fill="#5f5c55" stroke="#1b1b1a" stroke-width="0.6" />
<polygon points="1130.5,686.8 1145.5,676.2 1156.2,684.2 1140.0,696.2" fill="#4d4a43" stroke="#1b1b1a" stroke-width="0.6" />
<polygon points="1134.8,687.5 1145.5,680.2 1152.2,684.2 1140.5,692.8" fill="#726e65" stroke="#1b1b1a" stroke-width="0.4" />
<polygon points="1123.8,688.8 1130.5,686.8 1140.0,696.2 1128.8,700.5 1123.8,697.5" fill="#55524a" stroke="#1b1b1a" stroke-width="0.6" />
<polyline points="1025.5,578.8 1070.0,612.5 1075.0,608.0 1167.5,680.0 1161.2,687.5 1207.5,723.8 1272.5,677.5" fill="none" stroke="#1b1b1a" stroke-width="0.7" />
<polyline points="995.0,591.2 1053.8,636.2" fill="none" stroke="#1b1b1a" stroke-width="0.6" />
<polyline points="1132.5,698.8 1195.0,748.8 1278.8,688.0" fill="none" stroke="#1b1b1a" stroke-width="0.6" />
<polyline points="1135.0,695.0 1191.2,740.5 1275.0,682.5" fill="none" stroke="#1b1b1a" stroke-width="0.6" />
<circle cx="1019.5" cy="586.2" r="1.2" fill="#3d3b36" stroke="#1b1b1a" stroke-width="0.7"/>
<circle cx="1112.5" cy="650.0" r="1.2" fill="#3d3b36" stroke="#1b1b1a" stroke-width="0.7"/>
<circle cx="1196.2" cy="727.0" r="1.2" fill="#3d3b36" stroke="#1b1b1a" stroke-width="0.7"/>
<polygon points="1272.5,680.0 1275.0,672.5 1323.1,633.8 1326.2,636.2 1327.5,643.8 1334.4,647.5 1332.5,649.4 1280.0,686.2 1276.2,686.9" fill="#57544c" stroke="#1b1b1a" stroke-width="1.1" />
<polygon points="1275.0,672.5 1323.1,633.8 1326.2,636.2 1278.5,675.0" fill="#77736a" stroke="#1b1b1a" stroke-width="0.8" />
<polygon points="1281.9,676.2 1325.6,641.9 1326.2,650.0 1283.1,682.5" fill="#6a665d" stroke="#1b1b1a" stroke-width="0.8" />
<polygon points="1283.1,678.1 1291.9,671.2 1292.5,675.0 1284.0,681.5" fill="#8a867b" stroke="#1b1b1a" stroke-width="0.6" />
<polygon points="1315.6,652.5 1323.8,646.2 1324.4,650.0 1316.2,656.2" fill="#8a867b" stroke="#1b1b1a" stroke-width="0.6" />
<polygon points="1306.2,710.0 1320.0,712.5 1362.5,680.0 1361.2,675.0" fill="#000" opacity="0.15" filter="url(#bl3)"/>
<polygon points="1304.4,707.5 1306.2,696.2 1353.1,660.6 1356.2,662.5 1356.9,667.5 1361.9,671.2 1361.2,677.5 1351.9,685.0 1345.6,680.6 1328.1,695.0 1328.8,700.6 1318.1,710.6 1312.5,707.5 1308.1,710.6" fill="#57544c" stroke="#1b1b1a" stroke-width="1.1" stroke-linejoin="round"/>
<polygon points="1306.2,696.2 1353.1,660.6 1356.2,662.5 1310.0,698.8" fill="#77736a" stroke="#1b1b1a" stroke-width="0.8" />
<polygon points="1310.0,698.8 1356.2,662.5 1356.9,667.5 1345.6,676.2 1345.6,680.6 1328.1,695.0 1320.0,692.5 1311.9,698.8 1312.5,707.5 1308.1,710.6" fill="#5f5b53" stroke="#1b1b1a" stroke-width="0.8" />
<polygon points="1311.9,698.8 1320.0,692.5 1328.1,695.0 1328.8,700.6 1318.1,710.6 1312.5,707.5" fill="#6f6b62" stroke="#1b1b1a" stroke-width="0.8" />
<polygon points="1345.6,675.0 1353.8,669.4 1361.9,671.2 1361.2,677.5 1351.9,685.0 1345.6,680.6" fill="#6f6b62" stroke="#1b1b1a" stroke-width="0.8" />
<polygon points="1316.9,702.5 1325.0,696.9 1325.6,701.9 1318.1,707.5" fill="#8a867b" stroke="#1b1b1a" stroke-width="0.6" />
<polygon points="1351.2,676.2 1358.8,671.2 1359.4,676.2 1351.9,681.9" fill="#8a867b" stroke="#1b1b1a" stroke-width="0.6" />
<polygon points="862.5,710.0 995.0,827.5 1045.0,855.0 1100.0,810.0 1095.0,802.5 1045.0,845.0" fill="#000" opacity="0.2" filter="url(#bl6)"/>
<polygon points="904.2,639.0 906.8,640.5 1051.2,769.2 1096.2,801.2 1097.0,807.0 1045.0,850.5 1003.8,815.5 992.5,822.5 860.0,707.5 860.0,703.8 866.2,698.8 858.8,687.5 858.8,684.5 865.0,677.5 864.5,672.5" fill="#5f5b53" stroke="#1b1b1a" stroke-width="1.3" stroke-linejoin="round"/>
<polygon points="860.0,703.8 866.2,698.8 858.8,684.5 865.0,677.0 904.2,642.5 1051.2,770.0 1096.2,801.2 1045.0,846.2 1003.8,811.2 992.5,818.8" fill="#9a9588" stroke="#1b1b1a" stroke-width="0.6" />
<polygon points="905.9,641.3 916.1,649.8 902.4,659.1 892.2,650.7" fill="#2b2a28" />
<polygon points="915.5,649.2 925.8,657.7 912.0,667.1 901.8,658.6" fill="#2b2a28" />
<polygon points="925.2,657.1 935.4,665.8 921.6,675.2 911.3,666.6" fill="#2b2a28" />
<polygon points="934.8,665.2 945.2,673.9 931.3,683.4 921.0,674.7" fill="#2b2a28" />
<polygon points="944.6,673.3 955.0,682.1 941.0,691.6 930.6,682.8" fill="#2b2a28" />
<polygon points="954.4,681.5 964.8,690.4 950.8,700.0 940.4,691.1" fill="#2b2a28" />
<polygon points="964.2,689.8 974.7,698.7 960.6,708.4 950.1,699.4" fill="#2b2a28" />
<polygon points="974.1,698.1 984.6,707.2 970.5,716.8 960.0,707.8" fill="#2b2a28" />
<polygon points="984.0,706.6 994.6,715.7 980.4,725.4 969.8,716.3" fill="#2b2a28" />
<polygon points="994.0,715.1 1004.6,724.3 990.4,734.0 979.7,724.8" fill="#2b2a28" />
<polygon points="1004.0,723.7 1014.7,733.0 1000.4,742.8 989.7,733.4" fill="#2b2a28" />
<polygon points="1014.1,732.4 1024.8,741.7 1010.5,751.5 999.7,742.2" fill="#2b2a28" />
<polygon points="1024.2,741.1 1035.0,750.6 1020.6,760.4 1009.8,750.9" fill="#2b2a28" />
<polygon points="1034.4,749.9 1045.2,759.5 1030.8,769.4 1019.9,759.8" fill="#2b2a28" />
<polygon points="1044.6,758.9 1055.5,768.5 1041.0,778.4 1030.1,768.8" fill="#2b2a28" />
<polygon points="895.4,650.4 911.7,664.0 897.9,673.4 881.6,659.8" fill="#2b2a28" />
<polygon points="910.9,663.3 921.1,671.9 907.3,681.4 897.1,672.8" fill="#2b2a28" />
<polygon points="920.5,671.4 930.8,680.0 916.9,689.5 906.6,680.8" fill="#2b2a28" />
<polygon points="930.2,679.5 940.5,688.3 926.6,697.8 916.2,689.0" fill="#2b2a28" />
<polygon points="939.9,687.7 950.3,696.6 936.3,706.1 925.9,697.3" fill="#2b2a28" />
<polygon points="949.6,696.0 960.1,704.9 946.1,714.5 935.6,705.6" fill="#2b2a28" />
<polygon points="959.5,704.3 970.0,713.4 955.9,723.0 945.4,714.0" fill="#2b2a28" />
<polygon points="969.3,712.8 979.9,721.9 965.8,731.6 955.2,722.5" fill="#2b2a28" />
<polygon points="979.2,721.3 989.9,730.5 975.7,740.2 965.0,731.0" fill="#2b2a28" />
<polygon points="989.2,729.9 999.9,739.2 985.6,748.9 975.0,739.7" fill="#2b2a28" />
<polygon points="999.2,738.6 1009.9,747.9 995.6,757.7 984.9,748.4" fill="#2b2a28" />
<polygon points="1009.3,747.4 1020.1,756.8 1005.7,766.6 994.9,757.2" fill="#2b2a28" />
<polygon points="1019.4,756.2 1030.2,765.7 1015.8,775.6 1005.0,766.0" fill="#2b2a28" />
<polygon points="1029.4,765.0 1044.7,778.4 1030.2,788.4 1014.9,774.9" fill="#2b2a28" />
<polygon points="884.9,659.7 904.3,675.8 890.5,685.2 871.1,669.1" fill="#2b2a28" />
<polygon points="903.3,675.1 913.6,683.7 899.7,693.2 889.5,684.6" fill="#2b2a28" />
<polygon points="912.9,683.2 923.2,691.9 909.3,701.4 899.0,692.7" fill="#2b2a28" />
<polygon points="922.5,691.4 932.9,700.2 919.0,709.7 908.6,700.9" fill="#2b2a28" />
<polygon points="932.2,699.7 942.7,708.6 928.7,718.1 918.2,709.2" fill="#2b2a28" />
<polygon points="942.0,708.0 952.4,717.0 938.4,726.6 927.9,717.6" fill="#2b2a28" />
<polygon points="951.8,716.4 962.3,725.5 948.2,735.1 937.7,726.1" fill="#2b2a28" />
<polygon points="961.6,724.9 972.2,734.1 958.0,743.8 947.4,734.6" fill="#2b2a28" />
<polygon points="971.5,733.5 982.1,742.7 967.9,752.5 957.3,743.3" fill="#2b2a28" />
<polygon points="981.4,742.2 992.1,751.5 977.8,761.2 967.2,752.0" fill="#2b2a28" />
<polygon points="991.4,750.9 1002.1,760.3 987.8,770.1 977.1,760.7" fill="#2b2a28" />
<polygon points="1001.4,759.8 1012.2,769.2 997.9,779.1 987.1,769.6" fill="#2b2a28" />
<polygon points="874.3,668.9 898.8,689.3 885.1,698.7 860.5,678.3" fill="#2b2a28" />
<polygon points="897.6,688.6 907.9,697.2 894.1,706.7 883.8,698.0" fill="#2b2a28" />
<polygon points="907.2,696.7 917.5,705.5 903.6,715.0 893.3,706.3" fill="#2b2a28" />
<polygon points="916.8,705.0 927.2,713.9 913.3,723.4 902.9,714.6" fill="#2b2a28" />
<polygon points="926.5,713.4 937.0,722.3 922.9,731.9 912.5,722.9" fill="#2b2a28" />
<polygon points="936.2,721.8 946.7,730.8 932.7,740.4 922.2,731.4" fill="#2b2a28" />
<polygon points="946.0,730.3 956.6,739.4 942.4,749.0 931.9,739.9" fill="#2b2a28" />
<polygon points="955.8,738.9 966.4,748.0 952.2,757.7 941.6,748.6" fill="#2b2a28" />
<polygon points="965.7,747.5 976.4,756.8 962.1,766.5 951.5,757.3" fill="#2b2a28" />
<polygon points="975.6,756.3 986.3,765.6 972.0,775.4 961.3,766.0" fill="#2b2a28" />
<polygon points="985.6,765.1 996.3,774.5 982.0,784.3 971.2,774.9" fill="#2b2a28" />
<polygon points="995.6,774.0 1006.4,783.5 992.0,793.3 981.2,783.8" fill="#2b2a28" />
<polygon points="1005.4,782.8 1022.8,798.2 1008.4,808.1 991.0,792.7" fill="#2b2a28" />
<polygon points="881.5,695.1 891.7,703.7 877.9,713.1 867.6,704.5" fill="#2b2a28" />
<polygon points="891.0,703.3 901.3,712.0 887.4,721.4 877.1,712.7" fill="#2b2a28" />
<polygon points="897.9,709.6 971.6,772.9 957.5,782.5 883.8,719.3" fill="#2b2a28" />
<polygon points="968.8,771.5 979.5,780.9 965.2,790.7 954.5,781.3" fill="#2b2a28" />
<polygon points="978.7,780.4 989.5,789.8 975.1,799.7 964.4,790.2" fill="#2b2a28" />
<polygon points="988.7,789.4 999.6,798.9 985.1,808.8 974.3,799.2" fill="#2b2a28" />
<polygon points="998.7,798.3 1011.8,809.9 997.3,819.8 984.2,808.2" fill="#2b2a28" />
<polygon points="902.4,642.2 896.4,646.2 892.8,650.7 902.4,644.1" fill="#55544f" stroke="#1b1b1a" stroke-width="0.6" />
<polygon points="896.4,646.2 902.4,651.2 902.4,658.7 892.8,650.7" fill="#7b7a75" stroke="#1b1b1a" stroke-width="0.6" />
<polygon points="902.4,651.2 908.4,647.1 912.0,652.1 902.4,658.7" fill="#5d5c58" stroke="#1b1b1a" stroke-width="0.6" />
<polygon points="902.4,642.2 908.4,647.1 902.4,651.2 896.4,646.2" fill="#a19c90" stroke="#1b1b1a" stroke-width="0.7" />
<polygon points="912.0,650.1 906.0,654.2 902.3,658.6 912.0,652.0" fill="#55544f" stroke="#1b1b1a" stroke-width="0.6" />
<polygon points="906.0,654.2 912.0,659.2 912.0,666.7 902.3,658.6" fill="#7b7a75" stroke="#1b1b1a" stroke-width="0.6" />
<polygon points="912.0,659.2 918.0,655.1 921.6,660.1 912.0,666.7" fill="#5d5c58" stroke="#1b1b1a" stroke-width="0.6" />
<polygon points="912.0,650.1 918.0,655.1 912.0,659.2 906.0,654.2" fill="#a19c90" stroke="#1b1b1a" stroke-width="0.7" />
<polygon points="921.6,658.1 915.6,662.2 911.9,666.6 921.6,660.0" fill="#55544f" stroke="#1b1b1a" stroke-width="0.6" />
<polygon points="915.6,662.2 921.6,667.2 921.6,674.8 911.9,666.6" fill="#7b7a75" stroke="#1b1b1a" stroke-width="0.6" />
<polygon points="921.6,667.2 927.6,663.1 931.3,668.2 921.6,674.8" fill="#5d5c58" stroke="#1b1b1a" stroke-width="0.6" />
<polygon points="921.6,658.1 927.6,663.1 921.6,667.2 915.6,662.2" fill="#a19c90" stroke="#1b1b1a" stroke-width="0.7" />
<polygon points="931.3,666.2 925.2,670.3 921.5,674.7 931.3,668.1" fill="#55544f" stroke="#1b1b1a" stroke-width="0.6" />
<polygon points="925.2,670.3 931.3,675.4 931.3,682.9 921.5,674.7" fill="#7b7a75" stroke="#1b1b1a" stroke-width="0.6" />
<polygon points="931.3,675.4 937.3,671.3 941.0,676.3 931.3,682.9" fill="#5d5c58" stroke="#1b1b1a" stroke-width="0.6" />
<polygon points="931.3,666.2 937.3,671.3 931.3,675.4 925.2,670.3" fill="#a19c90" stroke="#1b1b1a" stroke-width="0.7" />
<polygon points="941.0,674.3 934.9,678.4 931.2,682.9 941.0,676.2" fill="#55544f" stroke="#1b1b1a" stroke-width="0.6" />
<polygon points="934.9,678.4 941.0,683.6 941.0,691.2 931.2,682.9" fill="#7b7a75" stroke="#1b1b1a" stroke-width="0.6" />
<polygon points="941.0,683.6 947.1,679.5 950.8,684.5 941.0,691.2" fill="#5d5c58" stroke="#1b1b1a" stroke-width="0.6" />
<polygon points="941.0,674.3 947.1,679.5 941.0,683.6 934.9,678.4" fill="#a19c90" stroke="#1b1b1a" stroke-width="0.7" />
<polygon points="950.7,682.5 944.7,686.7 940.9,691.1 950.7,684.4" fill="#55544f" stroke="#1b1b1a" stroke-width="0.6" />
<polygon points="944.7,686.7 950.8,691.9 950.8,699.5 940.9,691.1" fill="#7b7a75" stroke="#1b1b1a" stroke-width="0.6" />
<polygon points="950.8,691.9 956.9,687.7 960.6,692.8 950.8,699.5" fill="#5d5c58" stroke="#1b1b1a" stroke-width="0.6" />
<polygon points="950.7,682.5 956.9,687.7 950.8,691.9 944.7,686.7" fill="#a19c90" stroke="#1b1b1a" stroke-width="0.7" />
<polygon points="960.6,690.9 954.5,695.0 950.7,699.4 960.6,692.7" fill="#55544f" stroke="#1b1b1a" stroke-width="0.6" />
<polygon points="954.5,695.0 960.6,700.3 960.6,707.9 950.7,699.4" fill="#7b7a75" stroke="#1b1b1a" stroke-width="0.6" />
<polygon points="960.6,700.3 966.7,696.1 970.4,701.2 960.6,707.9" fill="#5d5c58" stroke="#1b1b1a" stroke-width="0.6" />
<polygon points="960.6,690.9 966.7,696.1 960.6,700.3 954.5,695.0" fill="#a19c90" stroke="#1b1b1a" stroke-width="0.7" />
<polygon points="970.4,699.2 964.3,703.4 960.6,707.8 970.4,701.1" fill="#55544f" stroke="#1b1b1a" stroke-width="0.6" />
<polygon points="964.3,703.4 970.5,708.7 970.5,716.4 960.6,707.8" fill="#7b7a75" stroke="#1b1b1a" stroke-width="0.6" />
<polygon points="970.5,708.7 976.6,704.5 980.4,709.6 970.5,716.4" fill="#5d5c58" stroke="#1b1b1a" stroke-width="0.6" />
<polygon points="970.4,699.2 976.6,704.5 970.5,708.7 964.3,703.4" fill="#a19c90" stroke="#1b1b1a" stroke-width="0.7" />
<polygon points="980.3,707.7 974.2,711.9 970.4,716.3 980.3,709.5" fill="#55544f" stroke="#1b1b1a" stroke-width="0.6" />
<polygon points="974.2,711.9 980.4,717.3 980.4,724.9 970.4,716.3" fill="#7b7a75" stroke="#1b1b1a" stroke-width="0.6" />
<polygon points="980.4,717.3 986.5,713.1 990.3,718.2 980.4,724.9" fill="#5d5c58" stroke="#1b1b1a" stroke-width="0.6" />
<polygon points="980.3,707.7 986.5,713.1 980.4,717.3 974.2,711.9" fill="#a19c90" stroke="#1b1b1a" stroke-width="0.7" />
<polygon points="990.3,716.3 984.1,720.5 980.3,724.9 990.3,718.1" fill="#55544f" stroke="#1b1b1a" stroke-width="0.6" />
<polygon points="984.1,720.5 990.4,725.9 990.4,733.6 980.3,724.9" fill="#7b7a75" stroke="#1b1b1a" stroke-width="0.6" />
<polygon points="990.4,725.9 996.5,721.7 1000.3,726.8 990.4,733.6" fill="#5d5c58" stroke="#1b1b1a" stroke-width="0.6" />
<polygon points="990.3,716.3 996.5,721.7 990.4,725.9 984.1,720.5" fill="#a19c90" stroke="#1b1b1a" stroke-width="0.7" />
<polygon points="1000.3,724.9 994.1,729.1 990.3,733.5 1000.3,726.7" fill="#55544f" stroke="#1b1b1a" stroke-width="0.6" />
<polygon points="994.1,729.1 1000.4,734.6 1000.4,742.3 990.3,733.5" fill="#7b7a75" stroke="#1b1b1a" stroke-width="0.6" />
<polygon points="1000.4,734.6 1006.6,730.3 1010.4,735.5 1000.4,742.3" fill="#5d5c58" stroke="#1b1b1a" stroke-width="0.6" />
<polygon points="1000.3,724.9 1006.6,730.3 1000.4,734.6 994.1,729.1" fill="#a19c90" stroke="#1b1b1a" stroke-width="0.7" />
<polygon points="1010.4,733.6 1004.2,737.8 1000.3,742.2 1010.4,735.4" fill="#55544f" stroke="#1b1b1a" stroke-width="0.6" />
<polygon points="1004.2,737.8 1010.5,743.3 1010.5,751.1 1000.3,742.2" fill="#7b7a75" stroke="#1b1b1a" stroke-width="0.6" />
<polygon points="1010.5,743.3 1016.7,739.1 1020.5,744.2 1010.5,751.1" fill="#5d5c58" stroke="#1b1b1a" stroke-width="0.6" />
<polygon points="1010.4,733.6 1016.7,739.1 1010.5,743.3 1004.2,737.8" fill="#a19c90" stroke="#1b1b1a" stroke-width="0.7" />
<polygon points="1020.5,742.4 1014.3,746.7 1010.4,751.0 1020.5,744.1" fill="#55544f" stroke="#1b1b1a" stroke-width="0.6" />
<polygon points="1014.3,746.7 1020.6,752.2 1020.6,759.9 1010.4,751.0" fill="#7b7a75" stroke="#1b1b1a" stroke-width="0.6" />
<polygon points="1020.6,752.2 1026.8,747.9 1030.7,753.1 1020.6,759.9" fill="#5d5c58" stroke="#1b1b1a" stroke-width="0.6" />
<polygon points="1020.5,742.4 1026.8,747.9 1020.6,752.2 1014.3,746.7" fill="#a19c90" stroke="#1b1b1a" stroke-width="0.7" />
<polygon points="1030.7,751.3 1024.4,755.5 1020.5,759.9 1030.6,753.0" fill="#55544f" stroke="#1b1b1a" stroke-width="0.6" />
<polygon points="1024.4,755.5 1030.7,761.1 1030.8,768.9 1020.5,759.9" fill="#7b7a75" stroke="#1b1b1a" stroke-width="0.6" />
<polygon points="1030.7,761.1 1037.0,756.8 1040.9,762.0 1030.8,768.9" fill="#5d5c58" stroke="#1b1b1a" stroke-width="0.6" />
<polygon points="1030.7,751.3 1037.0,756.8 1030.7,761.1 1024.4,755.5" fill="#a19c90" stroke="#1b1b1a" stroke-width="0.7" />
<polygon points="1040.9,760.2 1034.6,764.5 1030.7,768.8 1040.8,761.9" fill="#55544f" stroke="#1b1b1a" stroke-width="0.6" />
<polygon points="1034.6,764.5 1041.0,770.1 1041.0,777.9 1030.7,768.8" fill="#7b7a75" stroke="#1b1b1a" stroke-width="0.6" />
<polygon points="1041.0,770.1 1047.2,765.8 1051.1,771.0 1041.0,777.9" fill="#5d5c58" stroke="#1b1b1a" stroke-width="0.6" />
<polygon points="1040.9,760.2 1047.2,765.8 1041.0,770.1 1034.6,764.5" fill="#a19c90" stroke="#1b1b1a" stroke-width="0.7" />
<polygon points="892.0,651.5 886.0,655.5 882.4,660.0 892.0,653.4" fill="#55544f" stroke="#1b1b1a" stroke-width="0.6" />
<polygon points="886.0,655.5 897.8,665.3 897.8,672.8 882.4,660.0" fill="#7b7a75" stroke="#1b1b1a" stroke-width="0.6" />
<polygon points="897.8,665.3 903.7,661.2 907.4,666.3 897.8,672.8" fill="#5d5c58" stroke="#1b1b1a" stroke-width="0.6" />
<polygon points="892.0,651.5 903.7,661.2 897.8,665.3 886.0,655.5" fill="#a19c90" stroke="#1b1b1a" stroke-width="0.7" />
<polygon points="907.3,664.2 901.3,668.3 897.6,672.8 907.3,666.2" fill="#55544f" stroke="#1b1b1a" stroke-width="0.6" />
<polygon points="901.3,668.3 907.3,673.4 907.3,680.9 897.6,672.8" fill="#7b7a75" stroke="#1b1b1a" stroke-width="0.6" />
<polygon points="907.3,673.4 913.3,669.3 917.0,674.3 907.3,680.9" fill="#5d5c58" stroke="#1b1b1a" stroke-width="0.6" />
<polygon points="907.3,664.2 913.3,669.3 907.3,673.4 901.3,668.3" fill="#a19c90" stroke="#1b1b1a" stroke-width="0.7" />
<polygon points="916.9,672.3 910.9,676.4 907.2,680.9 916.9,674.3" fill="#55544f" stroke="#1b1b1a" stroke-width="0.6" />
<polygon points="910.9,676.4 916.9,681.5 916.9,689.1 907.2,680.9" fill="#7b7a75" stroke="#1b1b1a" stroke-width="0.6" />
<polygon points="916.9,681.5 922.9,677.4 926.6,682.5 916.9,689.1" fill="#5d5c58" stroke="#1b1b1a" stroke-width="0.6" />
<polygon points="916.9,672.3 922.9,677.4 916.9,681.5 910.9,676.4" fill="#a19c90" stroke="#1b1b1a" stroke-width="0.7" />
<polygon points="926.6,680.5 920.5,684.6 916.8,689.1 926.6,682.4" fill="#55544f" stroke="#1b1b1a" stroke-width="0.6" />
<polygon points="920.5,684.6 926.6,689.7 926.6,697.3 916.8,689.1" fill="#7b7a75" stroke="#1b1b1a" stroke-width="0.6" />
<polygon points="926.6,689.7 932.6,685.6 936.3,690.7 926.6,697.3" fill="#5d5c58" stroke="#1b1b1a" stroke-width="0.6" />
<polygon points="926.6,680.5 932.6,685.6 926.6,689.7 920.5,684.6" fill="#a19c90" stroke="#1b1b1a" stroke-width="0.7" />
<polygon points="936.3,688.7 930.2,692.9 926.5,697.3 936.3,690.6" fill="#55544f" stroke="#1b1b1a" stroke-width="0.6" />
<polygon points="930.2,692.9 936.3,698.1 936.3,705.7 926.5,697.3" fill="#7b7a75" stroke="#1b1b1a" stroke-width="0.6" />
<polygon points="936.3,698.1 942.4,693.9 946.1,699.0 936.3,705.7" fill="#5d5c58" stroke="#1b1b1a" stroke-width="0.6" />
<polygon points="936.3,688.7 942.4,693.9 936.3,698.1 930.2,692.9" fill="#a19c90" stroke="#1b1b1a" stroke-width="0.7" />
<polygon points="946.0,697.0 939.9,701.2 936.2,705.6 946.0,698.9" fill="#55544f" stroke="#1b1b1a" stroke-width="0.6" />
<polygon points="939.9,701.2 946.1,706.4 946.1,714.1 936.2,705.6" fill="#7b7a75" stroke="#1b1b1a" stroke-width="0.6" />
<polygon points="946.1,706.4 952.2,702.3 955.9,707.4 946.1,714.1" fill="#5d5c58" stroke="#1b1b1a" stroke-width="0.6" />
<polygon points="946.0,697.0 952.2,702.3 946.1,706.4 939.9,701.2" fill="#a19c90" stroke="#1b1b1a" stroke-width="0.7" />
<polygon points="955.8,705.4 949.7,709.6 946.0,714.0 955.8,707.3" fill="#55544f" stroke="#1b1b1a" stroke-width="0.6" />
<polygon points="949.7,709.6 955.9,714.9 955.9,722.5 946.0,714.0" fill="#7b7a75" stroke="#1b1b1a" stroke-width="0.6" />
<polygon points="955.9,714.9 962.0,710.7 965.7,715.8 955.9,722.5" fill="#5d5c58" stroke="#1b1b1a" stroke-width="0.6" />
<polygon points="955.8,705.4 962.0,710.7 955.9,714.9 949.7,709.6" fill="#a19c90" stroke="#1b1b1a" stroke-width="0.7" />
<polygon points="965.7,713.9 959.6,718.1 955.8,722.5 965.7,715.8" fill="#55544f" stroke="#1b1b1a" stroke-width="0.6" />
<polygon points="959.6,718.1 965.7,723.4 965.8,731.1 955.8,722.5" fill="#7b7a75" stroke="#1b1b1a" stroke-width="0.6" />
<polygon points="965.7,723.4 971.9,719.2 975.6,724.3 965.8,731.1" fill="#5d5c58" stroke="#1b1b1a" stroke-width="0.6" />
<polygon points="965.7,713.9 971.9,719.2 965.7,723.4 959.6,718.1" fill="#a19c90" stroke="#1b1b1a" stroke-width="0.7" />
<polygon points="975.6,722.5 969.4,726.7 965.6,731.1 975.6,724.3" fill="#55544f" stroke="#1b1b1a" stroke-width="0.6" />
<polygon points="969.4,726.7 975.6,732.1 975.7,739.7 965.6,731.1" fill="#7b7a75" stroke="#1b1b1a" stroke-width="0.6" />
<polygon points="975.6,732.1 981.8,727.8 985.6,733.0 975.7,739.7" fill="#5d5c58" stroke="#1b1b1a" stroke-width="0.6" />
<polygon points="975.6,722.5 981.8,727.8 975.6,732.1 969.4,726.7" fill="#a19c90" stroke="#1b1b1a" stroke-width="0.7" />
<polygon points="985.5,731.1 979.4,735.3 975.6,739.7 985.5,732.9" fill="#55544f" stroke="#1b1b1a" stroke-width="0.6" />
<polygon points="979.4,735.3 985.6,740.8 985.6,748.5 975.6,739.7" fill="#7b7a75" stroke="#1b1b1a" stroke-width="0.6" />
<polygon points="985.6,740.8 991.8,736.5 995.6,741.6 985.6,748.5" fill="#5d5c58" stroke="#1b1b1a" stroke-width="0.6" />
<polygon points="985.5,731.1 991.8,736.5 985.6,740.8 979.4,735.3" fill="#a19c90" stroke="#1b1b1a" stroke-width="0.7" />
<polygon points="995.5,739.8 989.3,744.1 985.5,748.4 995.5,741.6" fill="#55544f" stroke="#1b1b1a" stroke-width="0.6" />
<polygon points="989.3,744.1 995.6,749.5 995.6,757.3 985.5,748.4" fill="#7b7a75" stroke="#1b1b1a" stroke-width="0.6" />
<polygon points="995.6,749.5 1001.8,745.3 1005.6,750.4 995.6,757.3" fill="#5d5c58" stroke="#1b1b1a" stroke-width="0.6" />
<polygon points="995.5,739.8 1001.8,745.3 995.6,749.5 989.3,744.1" fill="#a19c90" stroke="#1b1b1a" stroke-width="0.7" />
<polygon points="1005.6,748.6 999.4,752.9 995.5,757.2 1005.6,750.4" fill="#55544f" stroke="#1b1b1a" stroke-width="0.6" />
<polygon points="999.4,752.9 1005.7,758.4 1005.7,766.1 995.5,757.2" fill="#7b7a75" stroke="#1b1b1a" stroke-width="0.6" />
<polygon points="1005.7,758.4 1011.9,754.1 1015.7,759.3 1005.7,766.1" fill="#5d5c58" stroke="#1b1b1a" stroke-width="0.6" />
<polygon points="1005.6,748.6 1011.9,754.1 1005.7,758.4 999.4,752.9" fill="#a19c90" stroke="#1b1b1a" stroke-width="0.7" />
<polygon points="1015.7,757.5 1009.4,761.8 1005.6,766.1 1015.7,759.2" fill="#55544f" stroke="#1b1b1a" stroke-width="0.6" />
<polygon points="1009.4,761.8 1015.8,767.3 1015.8,775.1 1005.6,766.1" fill="#7b7a75" stroke="#1b1b1a" stroke-width="0.6" />
<polygon points="1015.8,767.3 1022.0,763.1 1025.9,768.2 1015.8,775.1" fill="#5d5c58" stroke="#1b1b1a" stroke-width="0.6" />
<polygon points="1015.7,757.5 1022.0,763.1 1015.8,767.3 1009.4,761.8" fill="#a19c90" stroke="#1b1b1a" stroke-width="0.7" />
<polygon points="1025.8,766.4 1019.5,770.7 1015.7,775.1 1025.8,768.1" fill="#55544f" stroke="#1b1b1a" stroke-width="0.6" />
<polygon points="1019.5,770.7 1030.0,780.0 1030.1,787.8 1015.7,775.1" fill="#7b7a75" stroke="#1b1b1a" stroke-width="0.6" />
<polygon points="1030.0,780.0 1036.3,775.7 1040.2,780.8 1030.1,787.8" fill="#5d5c58" stroke="#1b1b1a" stroke-width="0.6" />
<polygon points="1025.8,766.4 1036.3,775.7 1030.0,780.0 1019.5,770.7" fill="#a19c90" stroke="#1b1b1a" stroke-width="0.7" />
<polygon points="881.6,660.8 875.6,664.9 872.0,669.3 881.6,662.8" fill="#55544f" stroke="#1b1b1a" stroke-width="0.6" />
<polygon points="875.6,664.9 890.3,677.1 890.3,684.6 872.0,669.3" fill="#7b7a75" stroke="#1b1b1a" stroke-width="0.6" />
<polygon points="890.3,677.1 896.2,673.0 899.9,678.0 890.3,684.6" fill="#5d5c58" stroke="#1b1b1a" stroke-width="0.6" />
<polygon points="881.6,660.8 896.2,673.0 890.3,677.1 875.6,664.9" fill="#a19c90" stroke="#1b1b1a" stroke-width="0.7" />
<polygon points="899.7,676.1 893.7,680.2 890.1,684.6 899.7,678.0" fill="#55544f" stroke="#1b1b1a" stroke-width="0.6" />
<polygon points="893.7,680.2 899.7,685.2 899.7,692.8 890.1,684.6" fill="#7b7a75" stroke="#1b1b1a" stroke-width="0.6" />
<polygon points="899.7,685.2 905.7,681.1 909.4,686.1 899.7,692.8" fill="#5d5c58" stroke="#1b1b1a" stroke-width="0.6" />
<polygon points="899.7,676.1 905.7,681.1 899.7,685.2 893.7,680.2" fill="#a19c90" stroke="#1b1b1a" stroke-width="0.7" />
<polygon points="909.3,684.2 903.3,688.3 899.6,692.8 909.3,686.1" fill="#55544f" stroke="#1b1b1a" stroke-width="0.6" />
<polygon points="903.3,688.3 909.3,693.4 909.3,701.0 899.6,692.8" fill="#7b7a75" stroke="#1b1b1a" stroke-width="0.6" />
<polygon points="909.3,693.4 915.3,689.3 919.0,694.3 909.3,701.0" fill="#5d5c58" stroke="#1b1b1a" stroke-width="0.6" />
<polygon points="909.3,684.2 915.3,689.3 909.3,693.4 903.3,688.3" fill="#a19c90" stroke="#1b1b1a" stroke-width="0.7" />
<polygon points="918.9,692.4 912.9,696.5 909.2,701.0 918.9,694.3" fill="#55544f" stroke="#1b1b1a" stroke-width="0.6" />
<polygon points="912.9,696.5 919.0,701.7 919.0,709.3 909.2,701.0" fill="#7b7a75" stroke="#1b1b1a" stroke-width="0.6" />
<polygon points="919.0,701.7 925.0,697.6 928.7,702.6 919.0,709.3" fill="#5d5c58" stroke="#1b1b1a" stroke-width="0.6" />
<polygon points="918.9,692.4 925.0,697.6 919.0,701.7 912.9,696.5" fill="#a19c90" stroke="#1b1b1a" stroke-width="0.7" />
<polygon points="928.6,700.7 922.6,704.9 918.8,709.3 928.6,702.6" fill="#55544f" stroke="#1b1b1a" stroke-width="0.6" />
<polygon points="922.6,704.9 928.7,710.1 928.7,717.7 918.8,709.3" fill="#7b7a75" stroke="#1b1b1a" stroke-width="0.6" />
<polygon points="928.7,710.1 934.7,705.9 938.4,711.0 928.7,717.7" fill="#5d5c58" stroke="#1b1b1a" stroke-width="0.6" />
<polygon points="928.6,700.7 934.7,705.9 928.7,710.1 922.6,704.9" fill="#a19c90" stroke="#1b1b1a" stroke-width="0.7" />
<polygon points="938.3,709.1 932.3,713.3 928.5,717.7 938.3,711.0" fill="#55544f" stroke="#1b1b1a" stroke-width="0.6" />
<polygon points="932.3,713.3 938.4,718.5 938.4,726.1 928.5,717.7" fill="#7b7a75" stroke="#1b1b1a" stroke-width="0.6" />
<polygon points="938.4,718.5 944.5,714.3 948.2,719.4 938.4,726.1" fill="#5d5c58" stroke="#1b1b1a" stroke-width="0.6" />
<polygon points="938.3,709.1 944.5,714.3 938.4,718.5 932.3,713.3" fill="#a19c90" stroke="#1b1b1a" stroke-width="0.7" />
<polygon points="948.1,717.6 942.0,721.7 938.3,726.1 948.1,719.4" fill="#55544f" stroke="#1b1b1a" stroke-width="0.6" />
<polygon points="942.0,721.7 948.2,727.0 948.2,734.7 938.3,726.1" fill="#7b7a75" stroke="#1b1b1a" stroke-width="0.6" />
<polygon points="948.2,727.0 954.3,722.8 958.1,727.9 948.2,734.7" fill="#5d5c58" stroke="#1b1b1a" stroke-width="0.6" />
<polygon points="948.1,717.6 954.3,722.8 948.2,727.0 942.0,721.7" fill="#a19c90" stroke="#1b1b1a" stroke-width="0.7" />
<polygon points="958.0,726.1 951.8,730.3 948.0,734.7 957.9,727.9" fill="#55544f" stroke="#1b1b1a" stroke-width="0.6" />
<polygon points="951.8,730.3 958.0,735.6 958.0,743.3 948.0,734.7" fill="#7b7a75" stroke="#1b1b1a" stroke-width="0.6" />
<polygon points="958.0,735.6 964.1,731.4 967.9,736.5 958.0,743.3" fill="#5d5c58" stroke="#1b1b1a" stroke-width="0.6" />
<polygon points="958.0,726.1 964.1,731.4 958.0,735.6 951.8,730.3" fill="#a19c90" stroke="#1b1b1a" stroke-width="0.7" />
<polygon points="967.8,734.7 961.7,738.9 957.9,743.3 967.8,736.5" fill="#55544f" stroke="#1b1b1a" stroke-width="0.6" />
<polygon points="961.7,738.9 967.9,744.3 967.9,752.0 957.9,743.3" fill="#7b7a75" stroke="#1b1b1a" stroke-width="0.6" />
<polygon points="967.9,744.3 974.1,740.1 977.8,745.2 967.9,752.0" fill="#5d5c58" stroke="#1b1b1a" stroke-width="0.6" />
<polygon points="967.8,734.7 974.1,740.1 967.9,744.3 961.7,738.9" fill="#a19c90" stroke="#1b1b1a" stroke-width="0.7" />
<polygon points="977.8,743.4 971.6,747.6 967.8,752.0 977.7,745.2" fill="#55544f" stroke="#1b1b1a" stroke-width="0.6" />
<polygon points="971.6,747.6 977.8,753.1 977.8,760.8 967.8,752.0" fill="#7b7a75" stroke="#1b1b1a" stroke-width="0.6" />
<polygon points="977.8,753.1 984.0,748.8 987.8,754.0 977.8,760.8" fill="#5d5c58" stroke="#1b1b1a" stroke-width="0.6" />
<polygon points="977.8,743.4 984.0,748.8 977.8,753.1 971.6,747.6" fill="#a19c90" stroke="#1b1b1a" stroke-width="0.7" />
<polygon points="987.7,752.2 981.5,756.4 977.7,760.8 987.7,753.9" fill="#55544f" stroke="#1b1b1a" stroke-width="0.6" />
<polygon points="981.5,756.4 987.8,761.9 987.8,769.6 977.7,760.8" fill="#7b7a75" stroke="#1b1b1a" stroke-width="0.6" />
<polygon points="987.8,761.9 994.0,757.7 997.8,762.8 987.8,769.6" fill="#5d5c58" stroke="#1b1b1a" stroke-width="0.6" />
<polygon points="987.7,752.2 994.0,757.7 987.8,761.9 981.5,756.4" fill="#a19c90" stroke="#1b1b1a" stroke-width="0.7" />
<polygon points="997.8,761.0 991.5,765.3 987.7,769.6 997.7,762.8" fill="#55544f" stroke="#1b1b1a" stroke-width="0.6" />
<polygon points="991.5,765.3 997.8,770.8 997.9,778.6 987.7,769.6" fill="#7b7a75" stroke="#1b1b1a" stroke-width="0.6" />
<polygon points="997.8,770.8 1004.1,766.6 1007.9,771.7 997.9,778.6" fill="#5d5c58" stroke="#1b1b1a" stroke-width="0.6" />
<polygon points="997.8,761.0 1004.1,766.6 997.8,770.8 991.5,765.3" fill="#a19c90" stroke="#1b1b1a" stroke-width="0.7" />
<polygon points="1007.7,769.9 1001.5,774.2 997.6,778.6 1007.7,771.6" fill="#55544f" stroke="#1b1b1a" stroke-width="0.6" />
<polygon points="1001.5,774.2 1019.1,789.8 1019.1,797.6 997.6,778.6" fill="#7b7a75" stroke="#1b1b1a" stroke-width="0.6" />
<polygon points="1019.1,789.8 1025.4,785.5 1029.3,790.7 1019.1,797.6" fill="#5d5c58" stroke="#1b1b1a" stroke-width="0.6" />
<polygon points="1007.7,769.9 1025.4,785.5 1019.1,789.8 1001.5,774.2" fill="#a19c90" stroke="#1b1b1a" stroke-width="0.7" />
<polygon points="871.2,670.1 865.2,674.2 861.5,678.7 871.1,672.1" fill="#55544f" stroke="#1b1b1a" stroke-width="0.6" />
<polygon points="865.2,674.2 884.6,690.4 884.6,698.0 861.5,678.7" fill="#7b7a75" stroke="#1b1b1a" stroke-width="0.6" />
<polygon points="884.6,690.4 890.6,686.4 894.3,691.4 884.6,698.0" fill="#5d5c58" stroke="#1b1b1a" stroke-width="0.6" />
<polygon points="871.2,670.1 890.6,686.4 884.6,690.4 865.2,674.2" fill="#a19c90" stroke="#1b1b1a" stroke-width="0.7" />
<polygon points="894.0,689.5 888.0,693.6 884.4,698.1 894.0,691.5" fill="#55544f" stroke="#1b1b1a" stroke-width="0.6" />
<polygon points="888.0,693.6 894.1,698.7 894.1,706.3 884.4,698.1" fill="#7b7a75" stroke="#1b1b1a" stroke-width="0.6" />
<polygon points="894.1,698.7 900.1,694.6 903.8,699.6 894.1,706.3" fill="#5d5c58" stroke="#1b1b1a" stroke-width="0.6" />
<polygon points="894.0,689.5 900.1,694.6 894.1,698.7 888.0,693.6" fill="#a19c90" stroke="#1b1b1a" stroke-width="0.7" />
<polygon points="903.6,697.7 897.6,701.9 893.9,706.3 903.6,699.7" fill="#55544f" stroke="#1b1b1a" stroke-width="0.6" />
<polygon points="897.6,701.9 903.6,707.0 903.6,714.6 893.9,706.3" fill="#7b7a75" stroke="#1b1b1a" stroke-width="0.6" />
<polygon points="903.6,707.0 909.7,702.9 913.4,707.9 903.6,714.6" fill="#5d5c58" stroke="#1b1b1a" stroke-width="0.6" />
<polygon points="903.6,697.7 909.7,702.9 903.6,707.0 897.6,701.9" fill="#a19c90" stroke="#1b1b1a" stroke-width="0.7" />
<polygon points="913.2,706.0 907.2,710.2 903.4,714.6 913.2,707.9" fill="#55544f" stroke="#1b1b1a" stroke-width="0.6" />
<polygon points="907.2,710.2 913.3,715.3 913.3,723.0 903.4,714.6" fill="#7b7a75" stroke="#1b1b1a" stroke-width="0.6" />
<polygon points="913.3,715.3 919.3,711.2 923.0,716.3 913.3,723.0" fill="#5d5c58" stroke="#1b1b1a" stroke-width="0.6" />
<polygon points="913.2,706.0 919.3,711.2 913.3,715.3 907.2,710.2" fill="#a19c90" stroke="#1b1b1a" stroke-width="0.7" />
<polygon points="922.9,714.4 916.8,718.6 913.1,723.0 922.9,716.3" fill="#55544f" stroke="#1b1b1a" stroke-width="0.6" />
<polygon points="916.8,718.6 922.9,723.8 922.9,731.4 913.1,723.0" fill="#7b7a75" stroke="#1b1b1a" stroke-width="0.6" />
<polygon points="922.9,723.8 929.0,719.6 932.7,724.7 922.9,731.4" fill="#5d5c58" stroke="#1b1b1a" stroke-width="0.6" />
<polygon points="922.9,714.4 929.0,719.6 922.9,723.8 916.8,718.6" fill="#a19c90" stroke="#1b1b1a" stroke-width="0.7" />
<polygon points="932.6,722.9 926.5,727.0 922.7,731.5 932.6,724.7" fill="#55544f" stroke="#1b1b1a" stroke-width="0.6" />
<polygon points="926.5,727.0 932.6,732.3 932.7,740.0 922.7,731.5" fill="#7b7a75" stroke="#1b1b1a" stroke-width="0.6" />
<polygon points="932.6,732.3 938.7,728.1 942.5,733.2 932.7,740.0" fill="#5d5c58" stroke="#1b1b1a" stroke-width="0.6" />
<polygon points="932.6,722.9 938.7,728.1 932.6,732.3 926.5,727.0" fill="#a19c90" stroke="#1b1b1a" stroke-width="0.7" />
<polygon points="942.4,731.4 936.2,735.6 932.5,740.0 942.3,733.2" fill="#55544f" stroke="#1b1b1a" stroke-width="0.6" />
<polygon points="936.2,735.6 942.4,740.9 942.4,748.6 932.5,740.0" fill="#7b7a75" stroke="#1b1b1a" stroke-width="0.6" />
<polygon points="942.4,740.9 948.5,736.7 952.3,741.8 942.4,748.6" fill="#5d5c58" stroke="#1b1b1a" stroke-width="0.6" />
<polygon points="942.4,731.4 948.5,736.7 942.4,740.9 936.2,735.6" fill="#a19c90" stroke="#1b1b1a" stroke-width="0.7" />
<polygon points="952.2,740.0 946.0,744.2 942.2,748.6 952.1,741.8" fill="#55544f" stroke="#1b1b1a" stroke-width="0.6" />
<polygon points="946.0,744.2 952.2,749.6 952.2,757.3 942.2,748.6" fill="#7b7a75" stroke="#1b1b1a" stroke-width="0.6" />
<polygon points="952.2,749.6 958.4,745.4 962.2,750.5 952.2,757.3" fill="#5d5c58" stroke="#1b1b1a" stroke-width="0.6" />
<polygon points="952.2,740.0 958.4,745.4 952.2,749.6 946.0,744.2" fill="#a19c90" stroke="#1b1b1a" stroke-width="0.7" />
<polygon points="962.0,748.7 955.9,752.9 952.1,757.3 962.0,750.5" fill="#55544f" stroke="#1b1b1a" stroke-width="0.6" />
<polygon points="955.9,752.9 962.1,758.3 962.1,766.0 952.1,757.3" fill="#7b7a75" stroke="#1b1b1a" stroke-width="0.6" />
<polygon points="962.1,758.3 968.3,754.1 972.1,759.2 962.1,766.0" fill="#5d5c58" stroke="#1b1b1a" stroke-width="0.6" />
<polygon points="962.0,748.7 968.3,754.1 962.1,758.3 955.9,752.9" fill="#a19c90" stroke="#1b1b1a" stroke-width="0.7" />
<polygon points="971.9,757.5 965.7,761.7 961.9,766.1 971.9,759.3" fill="#55544f" stroke="#1b1b1a" stroke-width="0.6" />
<polygon points="965.7,761.7 972.0,767.2 972.0,774.9 961.9,766.1" fill="#7b7a75" stroke="#1b1b1a" stroke-width="0.6" />
<polygon points="972.0,767.2 978.2,762.9 982.0,768.1 972.0,774.9" fill="#5d5c58" stroke="#1b1b1a" stroke-width="0.6" />
<polygon points="971.9,757.5 978.2,762.9 972.0,767.2 965.7,761.7" fill="#a19c90" stroke="#1b1b1a" stroke-width="0.7" />
<polygon points="981.9,766.3 975.7,770.6 971.8,775.0 981.9,768.1" fill="#55544f" stroke="#1b1b1a" stroke-width="0.6" />
<polygon points="975.7,770.6 982.0,776.1 982.0,783.8 971.8,775.0" fill="#7b7a75" stroke="#1b1b1a" stroke-width="0.6" />
<polygon points="982.0,776.1 988.2,771.8 992.0,777.0 982.0,783.8" fill="#5d5c58" stroke="#1b1b1a" stroke-width="0.6" />
<polygon points="981.9,766.3 988.2,771.8 982.0,776.1 975.7,770.6" fill="#a19c90" stroke="#1b1b1a" stroke-width="0.7" />
<polygon points="991.9,775.3 985.7,779.5 981.8,783.9 991.9,777.0" fill="#55544f" stroke="#1b1b1a" stroke-width="0.6" />
<polygon points="985.7,779.5 992.0,785.1 992.0,792.9 981.8,783.9" fill="#7b7a75" stroke="#1b1b1a" stroke-width="0.6" />
<polygon points="992.0,785.1 998.2,780.8 1002.1,786.0 992.0,792.9" fill="#5d5c58" stroke="#1b1b1a" stroke-width="0.6" />
<polygon points="991.9,775.3 998.2,780.8 992.0,785.1 985.7,779.5" fill="#a19c90" stroke="#1b1b1a" stroke-width="0.7" />
<polygon points="1001.9,784.3 995.6,788.6 991.8,792.9 1001.9,786.0" fill="#55544f" stroke="#1b1b1a" stroke-width="0.6" />
<polygon points="995.6,788.6 1008.2,799.6 1008.2,807.4 991.8,792.9" fill="#7b7a75" stroke="#1b1b1a" stroke-width="0.6" />
<polygon points="1008.2,799.6 1014.4,795.3 1018.3,800.5 1008.2,807.4" fill="#5d5c58" stroke="#1b1b1a" stroke-width="0.6" />
<polygon points="1001.9,784.3 1014.4,795.3 1008.2,799.6 995.6,788.6" fill="#a19c90" stroke="#1b1b1a" stroke-width="0.7" />
<polygon points="877.9,696.0 871.9,700.1 868.2,704.6 877.9,698.0" fill="#55544f" stroke="#1b1b1a" stroke-width="0.6" />
<polygon points="871.9,700.1 877.9,705.2 877.9,712.7 868.2,704.6" fill="#7b7a75" stroke="#1b1b1a" stroke-width="0.6" />
<polygon points="877.9,705.2 883.9,701.1 887.6,706.1 877.9,712.7" fill="#5d5c58" stroke="#1b1b1a" stroke-width="0.6" />
<polygon points="877.9,696.0 883.9,701.1 877.9,705.2 871.9,700.1" fill="#a19c90" stroke="#1b1b1a" stroke-width="0.7" />
<polygon points="887.4,704.2 881.4,708.3 877.7,712.8 887.4,706.2" fill="#55544f" stroke="#1b1b1a" stroke-width="0.6" />
<polygon points="881.4,708.3 887.4,713.4 887.4,721.0 877.7,712.8" fill="#7b7a75" stroke="#1b1b1a" stroke-width="0.6" />
<polygon points="887.4,713.4 893.4,709.3 897.1,714.4 887.4,721.0" fill="#5d5c58" stroke="#1b1b1a" stroke-width="0.6" />
<polygon points="887.4,704.2 893.4,709.3 887.4,713.4 881.4,708.3" fill="#a19c90" stroke="#1b1b1a" stroke-width="0.7" />
<polygon points="896.0,712.3 889.9,716.4 886.2,720.9 896.0,714.1" fill="#55544f" stroke="#1b1b1a" stroke-width="0.6" />
<polygon points="889.9,716.4 955.7,772.9 955.7,780.5 886.2,720.9" fill="#7b7a75" stroke="#1b1b1a" stroke-width="0.6" />
<polygon points="955.7,772.9 961.8,768.7 965.6,773.8 955.7,780.5" fill="#5d5c58" stroke="#1b1b1a" stroke-width="0.6" />
<polygon points="896.0,712.3 961.8,768.7 955.7,772.9 889.9,716.4" fill="#a19c90" stroke="#1b1b1a" stroke-width="0.7" />
<polygon points="965.1,772.7 958.9,777.0 955.1,781.3 965.1,774.5" fill="#55544f" stroke="#1b1b1a" stroke-width="0.6" />
<polygon points="958.9,777.0 965.2,782.5 965.2,790.2 955.1,781.3" fill="#7b7a75" stroke="#1b1b1a" stroke-width="0.6" />
<polygon points="965.2,782.5 971.4,778.2 975.2,783.3 965.2,790.2" fill="#5d5c58" stroke="#1b1b1a" stroke-width="0.6" />
<polygon points="965.1,772.7 971.4,778.2 965.2,782.5 958.9,777.0" fill="#a19c90" stroke="#1b1b1a" stroke-width="0.7" />
<polygon points="975.0,781.7 968.8,785.9 965.0,790.3 975.0,783.4" fill="#55544f" stroke="#1b1b1a" stroke-width="0.6" />
<polygon points="968.8,785.9 975.1,791.4 975.1,799.2 965.0,790.3" fill="#7b7a75" stroke="#1b1b1a" stroke-width="0.6" />
<polygon points="975.1,791.4 981.3,787.2 985.2,792.3 975.1,799.2" fill="#5d5c58" stroke="#1b1b1a" stroke-width="0.6" />
<polygon points="975.0,781.7 981.3,787.2 975.1,791.4 968.8,785.9" fill="#a19c90" stroke="#1b1b1a" stroke-width="0.7" />
<polygon points="985.0,790.7 978.8,794.9 974.9,799.3 985.0,792.4" fill="#55544f" stroke="#1b1b1a" stroke-width="0.6" />
<polygon points="978.8,794.9 985.1,800.5 985.1,808.3 974.9,799.3" fill="#7b7a75" stroke="#1b1b1a" stroke-width="0.6" />
<polygon points="985.1,800.5 991.4,796.2 995.2,801.4 985.1,808.3" fill="#5d5c58" stroke="#1b1b1a" stroke-width="0.6" />
<polygon points="985.0,790.7 991.4,796.2 985.1,800.5 978.8,794.9" fill="#a19c90" stroke="#1b1b1a" stroke-width="0.7" />
<polygon points="995.0,799.7 988.7,804.0 984.9,808.4 995.0,801.4" fill="#55544f" stroke="#1b1b1a" stroke-width="0.6" />
<polygon points="988.7,804.0 997.2,811.5 997.2,819.3 984.9,808.4" fill="#7b7a75" stroke="#1b1b1a" stroke-width="0.6" />
<polygon points="997.2,811.5 1003.5,807.2 1007.3,812.3 997.2,819.3" fill="#5d5c58" stroke="#1b1b1a" stroke-width="0.6" />
<polygon points="995.0,799.7 1003.5,807.2 997.2,811.5 988.7,804.0" fill="#a19c90" stroke="#1b1b1a" stroke-width="0.7" />
<polygon points="1017.5,812.5 1046.2,788.8 1071.2,811.2 1045.0,840.0" fill="#8a867b" stroke="#1b1b1a" stroke-width="0.9" />
<polygon points="1017.5,812.5 1045.0,840.0 1045.0,835.0 1022.0,813.8" fill="#4d4a43" />
<polygon points="1035.0,808.0 1046.2,800.0 1055.5,808.8 1045.0,818.0" fill="#77736a" stroke="#1b1b1a" stroke-width="0.7" />
<polygon points="1017.5,812.5 1035.0,808.0 1045.0,818.0 1045.0,840.0" fill="#5d5a52" stroke="#1b1b1a" stroke-width="0.5" />
<polygon points="1045.0,840.0 1045.0,818.0 1055.5,808.8 1071.2,811.2" fill="#6f6b62" stroke="#1b1b1a" stroke-width="0.5" />
<polyline points="1017.5,812.5 1035.0,808.0" fill="none" stroke="#1b1b1a" stroke-width="0.7" />
<polyline points="1046.2,788.8 1046.2,800.0" fill="none" stroke="#1b1b1a" stroke-width="0.7" />
<polyline points="1071.2,811.2 1055.5,808.8" fill="none" stroke="#1b1b1a" stroke-width="0.7" />
<polyline points="1045.0,840.0 1045.0,818.0" fill="none" stroke="#1b1b1a" stroke-width="0.7" />
<circle cx="1044.5" cy="811.2" r="3" fill="#6a665d" stroke="#1b1b1a" stroke-width="0.8"/>
<circle cx="1044.5" cy="811.2" r="1.3" fill="#3b3935" stroke="None" stroke-width="0.7"/>
<polygon points="1061.2,786.2 1066.2,783.8 1077.5,795.0 1077.0,800.5 1071.2,802.0 1061.2,792.5" fill="#55524a" stroke="#1b1b1a" stroke-width="0.8" />
<polygon points="1062.0,786.8 1066.2,784.5 1076.5,795.0 1072.5,797.5" fill="#a39d90" stroke="#1b1b1a" stroke-width="0.5" />
<polygon points="930.0,650.0 1082.5,782.5 1093.8,773.8" fill="#000" opacity="0.12" filter="url(#bl3)"/>
<polygon points="927.5,645.0 935.5,638.8 1092.0,770.0 1092.0,773.0 1083.8,778.8 927.5,647.5" fill="#55524a" stroke="#1b1b1a" stroke-width="1.1" />
<polygon points="927.5,645.0 935.5,638.8 1092.0,770.0 1083.8,776.2" fill="#8d887c" stroke="#1b1b1a" stroke-width="0.5" />
<polygon points="935.2,644.2 939.8,641.2 946.2,647.5 946.2,651.2 942.2,653.8 935.2,648.2" fill="#4d4a43" stroke="#1b1b1a" stroke-width="0.6" />
<polygon points="935.2,644.2 939.8,641.2 946.2,647.5 941.8,650.2" fill="#8a867b" stroke="#1b1b1a" stroke-width="0.4" />
<polygon points="947.4,654.6 951.9,651.6 958.4,657.9 958.4,661.6 954.4,664.1 947.4,658.6" fill="#4d4a43" stroke="#1b1b1a" stroke-width="0.6" />
<polygon points="947.4,654.6 951.9,651.6 958.4,657.9 953.9,660.6" fill="#8a867b" stroke="#1b1b1a" stroke-width="0.4" />
<polygon points="959.5,665.0 964.0,662.0 970.5,668.2 970.5,672.0 966.5,674.5 959.5,669.0" fill="#4d4a43" stroke="#1b1b1a" stroke-width="0.6" />
<polygon points="959.5,665.0 964.0,662.0 970.5,668.2 966.0,671.0" fill="#8a867b" stroke="#1b1b1a" stroke-width="0.4" />
<polygon points="971.6,675.4 976.1,672.4 982.6,678.6 982.6,682.4 978.6,684.9 971.6,679.4" fill="#4d4a43" stroke="#1b1b1a" stroke-width="0.6" />
<polygon points="971.6,675.4 976.1,672.4 982.6,678.6 978.1,681.4" fill="#8a867b" stroke="#1b1b1a" stroke-width="0.4" />
<polygon points="983.8,685.8 988.2,682.8 994.8,689.0 994.8,692.8 990.8,695.2 983.8,689.8" fill="#4d4a43" stroke="#1b1b1a" stroke-width="0.6" />
<polygon points="983.8,685.8 988.2,682.8 994.8,689.0 990.2,691.8" fill="#8a867b" stroke="#1b1b1a" stroke-width="0.4" />
<polygon points="1014.0,709.2 1018.5,706.2 1025.0,712.5 1025.0,716.2 1021.0,718.8 1014.0,713.2" fill="#4d4a43" stroke="#1b1b1a" stroke-width="0.6" />
<polygon points="1014.0,709.2 1018.5,706.2 1025.0,712.5 1020.5,715.2" fill="#8a867b" stroke="#1b1b1a" stroke-width="0.4" />
<polygon points="1024.5,718.8 1029.0,715.8 1035.5,722.0 1035.5,725.8 1031.5,728.2 1024.5,722.8" fill="#4d4a43" stroke="#1b1b1a" stroke-width="0.6" />
<polygon points="1024.5,718.8 1029.0,715.8 1035.5,722.0 1031.0,724.8" fill="#8a867b" stroke="#1b1b1a" stroke-width="0.4" />
<polygon points="1035.0,728.2 1039.5,725.2 1046.0,731.5 1046.0,735.2 1042.0,737.8 1035.0,732.2" fill="#4d4a43" stroke="#1b1b1a" stroke-width="0.6" />
<polygon points="1035.0,728.2 1039.5,725.2 1046.0,731.5 1041.5,734.2" fill="#8a867b" stroke="#1b1b1a" stroke-width="0.4" />
<polygon points="1050.2,740.5 1054.8,737.5 1061.2,743.8 1061.2,747.5 1057.2,750.0 1050.2,744.5" fill="#4d4a43" stroke="#1b1b1a" stroke-width="0.6" />
<polygon points="1050.2,740.5 1054.8,737.5 1061.2,743.8 1056.8,746.5" fill="#8a867b" stroke="#1b1b1a" stroke-width="0.4" />
<polygon points="1074.0,761.8 1078.5,758.8 1085.0,765.0 1085.0,768.8 1081.0,771.2 1074.0,765.8" fill="#4d4a43" stroke="#1b1b1a" stroke-width="0.6" />
<polygon points="1074.0,761.8 1078.5,758.8 1085.0,765.0 1080.5,767.8" fill="#8a867b" stroke="#1b1b1a" stroke-width="0.4" />
<polygon points="725.0,790.0 865.0,915.0 870.0,902.5 740.0,785.0" fill="#000" opacity="0.25" filter="url(#bl6)"/>
<polygon points="825.0,995.0 860.0,997.5 920.0,947.5 915.0,935.0" fill="#000" opacity="0.25" filter="url(#bl6)"/>
<path d="M663.8 806.2 L723.8 758.0 L730.0 761.2 L736.2 763.8 L750.0 757.0 L907.5 902.5 L907.5 912.5 L902.5 920.0 L905.0 927.5 L913.8 937.5 L912.5 943.8 L855.0 992.5 L846.2 986.2 L840.0 980.0 L830.0 986.2 L820.0 992.5 L663.8 833.8 L662.5 828.8 L671.2 820.0 L672.5 816.2 L664.5 810.0Z M681.8 793.8 L718.0 766.2 L864.2 905.0 L815.5 945.0 L810.0 941.8 L797.5 951.8 L676.8 832.5 L686.8 825.5 L687.5 821.8 L676.8 811.2 L686.2 803.8 L686.8 800.0Z M828.0 956.2 L856.8 928.8 L883.0 955.0 L851.2 982.5Z " fill="#4e4b44" fill-rule="evenodd" stroke="#1b1b1a" stroke-width="1.3" stroke-linejoin="round"/>
<polygon points="736.2,763.8 750.0,757.0 907.5,902.5 896.2,913.8" fill="#57544c" stroke="#1b1b1a" stroke-width="0.6" />
<polygon points="722.5,758.0 730.0,761.2 892.0,915.5 864.2,905.0 718.0,766.2" fill="#403e39" stroke="#1b1b1a" stroke-width="0.6" />
<polyline points="730.0,761.2 892.5,915.0 902.5,920.0" fill="none" stroke="#1b1b1a" stroke-width="0.7" />
<polyline points="733.0,762.5 894.5,914.5" fill="none" stroke="#77736a" stroke-width="1.3" />
<polyline points="736.2,763.8 896.2,913.8" fill="none" stroke="#2b2a27" stroke-width="1.2" />
<polygon points="664.5,828.0 676.8,832.5 797.5,951.8 820.0,991.2" fill="#625e56" stroke="#1b1b1a" stroke-width="0.6" />
<polygon points="663.8,833.8 664.5,828.0 820.0,991.2 820.0,992.5" fill="#3b3935" />
<polygon points="797.5,951.8 810.0,941.8 828.0,956.2 840.0,980.0 830.0,986.2 820.0,991.2" fill="#625e56" stroke="#1b1b1a" stroke-width="0.6" />
<polygon points="664.5,806.5 722.5,758.5 718.0,766.2 681.8,793.8 686.2,803.8 676.8,811.2 672.5,816.2" fill="#5a574f" stroke="#1b1b1a" stroke-width="0.5" />
<polygon points="671.2,820.0 676.8,811.2 687.5,821.8 686.8,825.5 676.8,832.5 664.5,828.0" fill="#57544c" stroke="#1b1b1a" stroke-width="0.5" />
<polygon points="810.0,941.8 815.5,945.0 864.2,905.0 892.0,915.5 902.5,920.0 905.0,927.5 883.0,955.0 856.8,928.8 828.0,956.2" fill="#5d5a52" stroke="#1b1b1a" stroke-width="0.6" />
<polygon points="815.5,945.0 828.0,956.2 856.8,928.8 853.8,926.2" fill="#3f3d38" stroke="#1b1b1a" stroke-width="0.5" />
<polygon points="892.0,915.5 902.5,920.0 905.0,927.5 913.8,937.5 912.5,943.8 895.0,960.0 883.0,955.0 895.0,947.5" fill="#4a4741" stroke="#1b1b1a" stroke-width="0.6" />
<polygon points="851.2,982.5 883.0,955.0 895.0,960.0 860.0,990.0 853.8,991.8" fill="#4a4741" stroke="#1b1b1a" stroke-width="0.6" />
<polygon points="837.5,972.5 841.2,980.0 852.5,983.0 846.2,975.0" fill="#a09a8c" stroke="#1b1b1a" stroke-width="0.5" />
<polygon points="860.0,977.5 876.2,963.8 876.8,968.8 860.0,983.8" fill="#a09a8c" stroke="#1b1b1a" stroke-width="0.5" />
<polyline points="750.9,768.6 757.1,774.4" fill="none" stroke="#2b2a27" stroke-width="4.0" stroke-linecap="round"/>
<polyline points="752.9,770.6 758.4,775.6" fill="none" stroke="#ffffff" stroke-width="3.25" stroke-linecap="round"/>
<polyline points="762.9,780.0 769.2,785.8" fill="none" stroke="#2b2a27" stroke-width="4.0" stroke-linecap="round"/>
<polyline points="764.9,782.0 770.4,787.0" fill="none" stroke="#ffffff" stroke-width="3.25" stroke-linecap="round"/>
<polyline points="775.0,791.4 781.2,797.2" fill="none" stroke="#2b2a27" stroke-width="4.0" stroke-linecap="round"/>
<polyline points="777.0,793.4 782.5,798.4" fill="none" stroke="#ffffff" stroke-width="3.25" stroke-linecap="round"/>
<polyline points="787.0,802.8 793.3,808.6" fill="none" stroke="#2b2a27" stroke-width="4.0" stroke-linecap="round"/>
<polyline points="789.0,804.8 794.5,809.8" fill="none" stroke="#ffffff" stroke-width="3.25" stroke-linecap="round"/>
<polyline points="799.1,814.2 805.3,820.0" fill="none" stroke="#2b2a27" stroke-width="4.0" stroke-linecap="round"/>
<polyline points="801.1,816.2 806.6,821.2" fill="none" stroke="#ffffff" stroke-width="3.25" stroke-linecap="round"/>
<polyline points="827.6,841.1 833.9,846.9" fill="none" stroke="#2b2a27" stroke-width="4.0" stroke-linecap="round"/>
<polyline points="829.6,843.1 835.1,848.1" fill="none" stroke="#ffffff" stroke-width="3.25" stroke-linecap="round"/>
<polyline points="838.0,850.7 844.2,856.5" fill="none" stroke="#2b2a27" stroke-width="4.0" stroke-linecap="round"/>
<polyline points="840.0,852.7 845.5,857.8" fill="none" stroke="#ffffff" stroke-width="3.25" stroke-linecap="round"/>
<polyline points="848.4,860.4 854.6,866.1" fill="none" stroke="#2b2a27" stroke-width="4.0" stroke-linecap="round"/>
<polyline points="850.4,862.4 855.9,867.4" fill="none" stroke="#ffffff" stroke-width="3.25" stroke-linecap="round"/>
<polyline points="864.3,875.0 869.7,880.0" fill="none" stroke="#2b2a27" stroke-width="4.0" stroke-linecap="round"/>
<polyline points="866.3,877.0 871.0,881.3" fill="none" stroke="#ffffff" stroke-width="3.25" stroke-linecap="round"/>
<polyline points="890.8,899.6 892.7,901.4" fill="none" stroke="#2b2a27" stroke-width="4.75" stroke-linecap="round"/>
<polyline points="892.8,901.6 893.9,902.6" fill="none" stroke="#ffffff" stroke-width="4.0" stroke-linecap="round"/>
<polyline points="875.3,927.3 884.7,936.2" fill="none" stroke="#2b2a27" stroke-width="4.0" stroke-linecap="round"/>
<polyline points="877.3,929.3 886.0,937.4" fill="none" stroke="#ffffff" stroke-width="3.25" stroke-linecap="round"/>
<polygon points="945.0,905.0 955.0,902.5 956.2,907.5 946.2,910.0" fill="#000" opacity="0.1" filter="url(#bl2)"/>
<polygon points="948.0,875.0 952.0,873.8 955.5,886.2 952.5,888.8 949.5,887.0" fill="#4a4741" stroke="#1b1b1a" stroke-width="0.7" />
<circle cx="949.2" cy="870.0" r="4.3" fill="#a9a69f" stroke="#1b1b1a" stroke-width="0.8"/>
<circle cx="949.8" cy="869.0" r="1.5" fill="#dddbd6" stroke="None" stroke-width="0.7"/>
<polygon points="1832.0,234.0 1856.0,260.0 1898.0,236.0 1888.0,222.0" fill="#000" opacity="0.15" filter="url(#bl5)"/>
<polygon points="1857.8,171.9 1891.9,196.4 1854.4,221.4 1820.3,192.4" fill="#ececed" stroke="#777" stroke-width="0.7" fill-opacity=".8" stroke-dasharray="4 2.5"/>
<polygon points="1820.3,192.4 1854.4,221.4 1854.4,252.0 1825.5,225.3" fill="#e6e6e8" stroke="#777" stroke-width="0.7" fill-opacity=".8" stroke-dasharray="4 2.5"/>
<polygon points="1854.4,221.4 1891.9,196.4 1887.4,227.0 1854.4,252.0" fill="#e0e0e2" stroke="#777" stroke-width="0.7" fill-opacity=".8" stroke-dasharray="4 2.5"/>
<polyline points="1819.0,186.0 1825.5,225.3" fill="none" stroke="#5b5bff" stroke-width="1.6" />
<polyline points="1825.5,225.3 1861.0,259.0" fill="none" stroke="#ff7373" stroke-width="1.6" />
<text x="1813.500" y="185.500" font-family='"Liberation Sans","Noto Sans CJK JP",sans-serif' font-size="15.500" fill="#6a6aff">Z</text>
<text x="1861" y="269" font-family='"Liberation Sans","Noto Sans CJK JP",sans-serif' font-size="15.500" fill="#ff7373">X</text>
<text font-family='"Liberation Sans","Noto Sans CJK JP",sans-serif' font-size="23" fill="#8f9197" transform="matrix(.86,.5,-.8,.55,1850.5,200.5)" text-anchor="middle">上</text>
<text font-family='"Liberation Sans","Noto Sans CJK JP",sans-serif' font-size="21" fill="#8f9197" transform="matrix(.78,.55,-.06,1,1838,230)" text-anchor="middle">前</text>
<text font-family='"Liberation Sans","Noto Sans CJK JP",sans-serif' font-size="21" fill="#8f9197" transform="matrix(.85,-.6,-.05,1,1872,233)" text-anchor="middle">右</text>
</svg>
<div class="abs" style="left:1920px;top:0;width:8px;height:26px;background:#fff"></div>
<div class="abs" style="left:0;top:0;width:1920px;height:8px;background:#000"></div>
<div class="abs" style="left:0;top:8px;width:1920px;height:23px;background:#fff"></div>
<svg class="abs" style="left:3px;top:11px" width="15" height="17" viewBox="0 0 15 17"><path d="M1 3Q1 1 3 1H11L14 3V12H1z" fill="#f36f21"/><path d="M1 12H14V15Q14 16.500 12.500 16.500H2.500Q1 16.500 1 15z" fill="#a0461a"/>
<path d="M5 3.500H10V5.200H7V7H9.500V8.700H7V11H5z" fill="#fff"/><rect x="4" y="13.300" width="7" height="1.600" fill="#e8c9b6"/></svg>
<div class="t" style="left:23px;top:14px;font-size:12px;color:#000;letter-spacing:-.1px">Autodesk Fusion 360 (個人用 - 商用利用不可)</div>
<svg class="abs" style="left:1795px;top:9px" width="110" height="18" viewBox="0 0 110 18"><path d="M4 9.500H14" stroke="#111" stroke-width="1.100"/><path d="M48.500 6.500H56.500V14.500H48.500zM50.500 6.500V4.500H58.500V12.500H56.500" fill="none" stroke="#111" stroke-width="1.100"/>
<path d="M94.500 4.500L104.500 14.500M104.500 4.500L94.500 14.500" stroke="#111" stroke-width="1.200"/></svg>
<div class="abs" style="left:0;top:31px;width:1918px;height:32px;background:#cbcbcb"></div>
<div class="abs" style="left:1918px;top:31px;width:2px;height:32px;background:#f2f2f2"></div>
<div class="abs" style="left:193px;top:35px;width:1476px;height:28px;background:#f2f2f2;border-radius:8px 8px 0 0"></div>
<div class="abs" style="left:0;top:63px;width:1920px;height:81px;background:#f2f2f2"></div>
<div class="abs" style="left:0;top:144px;width:1920px;height:2px;background:#e4e4e4"></div>
<svg class="abs" style="left:8px;top:38px" width="190" height="20" viewBox="0 0 190 20">
<g fill="#666"><rect x="1" y="2" width="4" height="4"/><rect x="6.200" y="2" width="4" height="4"/><rect x="11.400" y="2" width="4" height="4"/>
<rect x="1" y="7.200" width="4" height="4"/><rect x="6.200" y="7.200" width="4" height="4"/><rect x="11.400" y="7.200" width="4" height="4"/>
<rect x="1" y="12.400" width="4" height="4"/><rect x="6.200" y="12.400" width="4" height="4"/><rect x="11.400" y="12.400" width="4" height="4"/>
<path d="M34 1H42.500L47 5.500V17H34z"/><path d="M53.500 6.500H60.500L57 11z"/></g><path d="M42.500 1V5.500H47" fill="none" stroke="#cbcbcb" stroke-width="1"/>
<g fill="#999"><path d="M79 3Q79 2 80 2H91L93 4V15Q93 16 92 16H80Q79 16 79 15z"/></g><rect x="82" y="2" width="7.500" height="4.500" fill="#cbcbcb"/><rect x="86.500" y="2.800" width="2" height="3" fill="#999"/><rect x="82" y="10" width="8" height="6" fill="#cbcbcb"/><rect x="83.500" y="11.500" width="5" height="4.500" fill="#999"/>
<path d="M113 8H120Q125 8 125 14" fill="none" stroke="#666" stroke-width="2"/><path d="M112 8L117.500 3.500V12.500z" fill="#666"/><path d="M132.500 6.500H139.500L136 11z" fill="#666"/>
<path d="M164 8H158Q153 8 153 14" fill="none" stroke="#999" stroke-width="2"/><path d="M166 8L160.500 3.500V12.500z" fill="#999"/><path d="M171.500 6.500H178.500L175 11z" fill="#999"/>
</svg>
<svg class="abs" style="left:868px;top:41px" width="16" height="16" viewBox="0 0 16 16"><path d="M1 3.500L8 1L15 3.500V11L8 15L1 11z" fill="#777"/><path d="M1 3.500L8 6L15 3.500L8 1z" fill="#999"/><path d="M8 6V15L15 11V3.500z" fill="#555"/></svg>
<div class="t" style="left:887px;top:44px;font-size:12.300px;color:#222">HB-101_open v2</div>
<svg class="abs" style="left:1652px;top:43px" width="12" height="12" viewBox="0 0 12 12"><path d="M2 2L10 10M10 2L2 10" stroke="#555" stroke-width="1.300"/></svg>
<div class="abs" style="left:1673px;top:35px;width:28px;height:28px;background:#b9b9b9;border-radius:4px 4px 0 0"></div>
<svg class="abs" style="left:1680px;top:41px" width="14" height="14" viewBox="0 0 14 14"><path d="M7 0.500V13.500M0.500 7H13.500" stroke="#666" stroke-width="2.200"/></svg>
<svg class="abs" style="left:1712px;top:38px" width="18" height="18" viewBox="0 0 18 18"><path d="M1.500 1.500H9L13 5.500V9L6 16.500H1.500z" fill="#666"/><path d="M9 1.500V5.500H13" fill="none" stroke="#cbcbcb"/><path d="M7.500 16.800L8.500 13L14.500 7L17 9.500L11 15.500z" fill="#666" stroke="#cbcbcb" stroke-width=".8"/></svg>
<div class="t" style="left:1732px;top:42.500px;font-size:11px;color:#333">9/10</div>
<svg class="abs" style="left:1777px;top:38px" width="18" height="18" viewBox="0 0 18 18"><circle cx="9" cy="9" r="8" fill="none" stroke="#666" stroke-width="1"/><circle cx="9" cy="9" r="6.300" fill="#666"/><path d="M9 5V9.500H13" fill="none" stroke="#ddd" stroke-width="1.300"/></svg>
<svg class="abs" style="left:1811px;top:38px" width="16" height="18" viewBox="0 0 16 18"><path d="M8 1C9 1 9.200 2 9.200 2.500C12 3.500 12.500 6 12.500 9C12.500 11.500 13.500 12.500 15 14H1C2.500 12.500 3.500 11.500 3.500 9C3.500 6 4 3.500 6.800 2.500C6.800 2 7 1 8 1zM6 15H10L8 17z" fill="#666"/></svg>
<svg class="abs" style="left:1843px;top:38px" width="18" height="18" viewBox="0 0 18 18"><circle cx="9" cy="9" r="8" fill="#666"/><text x="9" y="13.500" font-family='"Liberation Sans","Noto Sans CJK JP",sans-serif' font-weight="bold" font-size="13" fill="#e8e8e8" text-anchor="middle">?</text></svg>
<svg class="abs" style="left:1880px;top:34px" width="26" height="26" viewBox="0 0 26 26"><defs><linearGradient id="av" x1="0" y1="0" x2="0" y2="1"><stop offset="0" stop-color="#c3d0e2"/><stop offset="1" stop-color="#7d93b3"/></linearGradient><clipPath id="avc"><circle cx="13" cy="13" r="12.500"/></clipPath></defs>
<circle cx="13" cy="13" r="12.500" fill="url(#av)"/><g clip-path="url(#avc)" fill="#4f607a"><ellipse cx="13" cy="9.500" rx="5.800" ry="7"/><path d="M10.500 14H15.500V19C19 20 23 21 24 26H2C3 21 7 20 10.500 19z"/></g></svg>
<div class="abs" style="left:12px;top:74px;width:108px;height:58px;border:1.500px solid #dedede;border-radius:6px;box-sizing:content-box"></div>
<div class="t" style="left:41px;top:98px;font-size:11.500px;font-weight:bold;color:#222"><span class="sx" style="transform:scaleX(0.826)">デザイン</span></div>
<div class="abs" style="left:85px;top:102.500px;width:0;height:0;border-left:3.500px solid transparent;border-right:3.500px solid transparent;border-top:4.500px solid #333"></div>
<div class="tab" style="left:150px;color:#0696d7;font-weight:bold;-webkit-text-stroke:.35px #0696d7"><span class="sx" style="transform:scaleX(0.705)">ソリッド</span></div>
<div class="abs" style="left:138px;top:84px;width:56px;height:3px;background:#0696d7;border-radius:1.500px"></div>
<div class="tab" style="left:228px;"><span class="sx" style="transform:scaleX(0.718)">サーフェス</span></div>
<div class="tab" style="left:315px;"><span class="sx" style="transform:scaleX(0.659)">メッシュ</span></div>
<div class="tab" style="left:388px;"><span class="sx" style="transform:scaleX(0.733)">フォーム</span></div>
<div class="tab" style="left:466px;"><span class="sx" style="transform:scaleX(0.818)">シートメタル</span></div>
<div class="tab" style="left:564px;"><span class="sx" style="transform:scaleX(0.699)">プラスチック</span></div>
<div class="tab" style="left:657px;"><span class="sx" style="transform:scaleX(0.687)">ユーティリティ</span></div>
<div class="grp" style="left:220px"><span class="sx" style="transform:scaleX(0.955)">作成</span><span class="dd" style="left:25px;position:absolute;top:5px;margin:0"></span></div>
<div class="grp" style="left:468px"><span class="sx" style="transform:scaleX(0.955)">修正</span><span class="dd" style="left:25px;position:absolute;top:5px;margin:0"></span></div>
<div class="grp" style="left:643px"><span class="sx" style="transform:scaleX(0.679)">アセンブリ</span><span class="dd" style="left:41px;position:absolute;top:5px;margin:0"></span></div>
<div class="grp" style="left:731px"><span class="sx" style="transform:scaleX(0.955)">構築</span><span class="dd" style="left:25px;position:absolute;top:5px;margin:0"></span></div>
<div class="grp" style="left:790px"><span class="sx" style="transform:scaleX(0.955)">検査</span><span class="dd" style="left:25px;position:absolute;top:5px;margin:0"></span></div>
<div class="grp" style="left:849px"><span class="sx" style="transform:scaleX(0.955)">挿入</span><span class="dd" style="left:25px;position:absolute;top:5px;margin:0"></span></div>
<div class="grp" style="left:908px"><span class="sx" style="transform:scaleX(0.955)">選択</span><span class="dd" style="left:25px;position:absolute;top:5px;margin:0"></span></div>
<div class="sep" style="left:350px"></div>
<div class="sep" style="left:619px"></div>
<div class="sep" style="left:716px"></div>
<div class="sep" style="left:775px"></div>
<div class="sep" style="left:834px"></div>
<div class="sep" style="left:893px"></div>
<svg class="abs" style="left:137px;top:90px" width="34" height="34" viewBox="0 0 34 34">
<g fill="none" stroke="#555" stroke-width="1.2"><path d="M2.5 2.5H28.5V19M2.5 2.5V29.500H18" />
<path d="M8.500 20.500V8.500H22.500M22.500 8.500C22.500 15 16 20.500 8.500 20.500"/></g>
<g fill="#555"><rect x="1" y="1" width="3" height="3"/><rect x="27" y="1" width="3" height="3"/><rect x="1" y="28" width="3" height="3"/>
<rect x="7" y="7" width="3" height="3"/><rect x="21" y="7" width="3" height="3"/><rect x="7" y="19" width="3" height="3"/></g>
<path d="M23 18h4v5h5v4h-5v5h-4v-5h-5v-4h5z" fill="#22a846"/></svg>
<svg class="abs" style="left:180px;top:89px" width="32" height="34" viewBox="0 0 32 34">
<polygon points="1,9 7,2 25,2 18,9" fill="#8ccbf7"/><polygon points="1,9 18,9 18,29 1,29" fill="#6ab0e4"/><polygon points="18,9 25,2 25,23 18,29" fill="#4a94cf"/>
<polygon points="1,29 18,29 25,23 25,26 18,32.500 1,32.500" fill="#bdbdbd"/>
<path d="M28.500 27V4" stroke="#222" stroke-width="1.3"/><path d="M26 7.500L28.500 2L31 7.500z" fill="#222"/></svg>
<svg class="abs" style="left:221px;top:89px" width="36" height="34" viewBox="0 0 36 34">
<path d="M3 10C10 2 22 1 32 9" fill="none" stroke="#222" stroke-width="1.2"/><path d="M2 11.500L4 6.500L8 10z" fill="#222"/>
<path d="M2 17C10 8 25 8 34 17L34 26C25 18 12 18 8 31L2 26z" fill="#6ab0e4"/>
<path d="M2 17C10 8 25 8 34 17L28 20C22 14 14 14 8 21z" fill="#8ccbf7"/>
<path d="M2 17L8 21V31L2 26z" fill="#4a94cf"/>
<path d="M28.500 20.500L34 16.500V25.500L28.500 30z" fill="#fff" stroke="#555" stroke-width="1"/></svg>
<svg class="abs" style="left:265px;top:89px" width="34" height="34" viewBox="0 0 34 34">
<polygon points="1.500,7.500 7.500,1.500 32,1.500 32,26 26,32.500 1.500,32.500" fill="#dcdcdc" stroke="#666" stroke-width="1"/>
<polygon points="26,7.500 32,1.500 32,26 26,32.500" fill="#bdbdbd"/><polygon points="1.500,7.500 7.500,1.500 32,1.500 26,7.500" fill="#ececec"/>
<path d="M1.500 7.500H26V32.500M26 7.500L32 1.500" fill="none" stroke="#666" stroke-width="1"/>
<circle cx="14" cy="20" r="8" fill="#f4f4f4" stroke="#555" stroke-width="1"/><circle cx="14" cy="20" r="6" fill="#6ab0e4"/>
<path d="M12 14.500A6 6 0 0 1 20 19.500A5 5 0 0 1 12 14.500z" fill="#fff"/></svg>
<svg class="abs" style="left:308px;top:91px" width="30" height="30" viewBox="0 0 30 30">
<path d="M4 4H25M4 4V25H25" stroke="#555" stroke-width="1" fill="none"/>
<rect x="1.500" y="1.500" width="6" height="6" fill="#fff" stroke="#555"/><rect x="22" y="1" width="7" height="7" fill="#6ab0e4"/>
<rect x="1" y="22" width="7" height="7" fill="#6ab0e4"/><rect x="22" y="22" width="7" height="7" fill="#6ab0e4"/></svg>
<svg class="abs" style="left:363px;top:89px" width="32" height="34" viewBox="0 0 32 34">
<polygon points="1.500,8 7,1.500 12,1.500 12,32.500 1.500,32.500" fill="#dcdcdc" stroke="#666"/>
<polygon points="8,8 14,1.500 23,1.500 17,8" fill="#8ccbf7"/><polygon points="8,8 17,8 17,32.500 8,32.500" fill="#6ab0e4"/><polygon points="17,8 23,1.500 23,26 17,32.500" fill="#4a94cf"/>
<path d="M20 16.500H29" stroke="#222" stroke-width="1.300"/><path d="M27 13.500L31.500 16.500L27 19.500z" fill="#222"/></svg>
<svg class="abs" style="left:405px;top:89px" width="34" height="34" viewBox="0 0 34 34">
<path d="M1.500 8L7.500 1.500H19C27 1.500 32.500 8 32.500 16V26L26 32.500H1.500z" fill="#dcdcdc" stroke="#666"/>
<path d="M26 20L32.500 14V26L26 32.500z" fill="#bdbdbd" stroke="#666"/>
<path d="M13 8L19 1.500C27 1.500 32.500 8 32.500 15L26 20C26 13 21 8 13 8z" fill="#6ab0e4"/>
<path d="M1.500 8H13C21 8 26 13 26 20V32.500" fill="none" stroke="#666"/></svg>
<svg class="abs" style="left:448px;top:89px" width="34" height="34" viewBox="0 0 34 34">
<polygon points="1.500,8 8,1.500 32.500,1.500 32.500,26 26,32.500 1.500,32.500" fill="#ececec" stroke="#666"/>
<polygon points="26,8 32.500,1.500 32.500,26 26,32.500" fill="#bdbdbd" stroke="#666"/>
<path d="M1.500 8H26V32.500" fill="none" stroke="#666"/><rect x="1.500" y="8" width="24.500" height="24.500" fill="#dcdcdc" stroke="#666"/>
<rect x="5" y="12" width="17" height="17" fill="#f6f6f6"/>
<polygon points="5,12 13,12 13,21 5,29" fill="#4a94cf"/><polygon points="5,29 13,21 22,21 22,29" fill="#8ccbf7"/></svg>
<svg class="abs" style="left:491px;top:89px" width="34" height="34" viewBox="0 0 34 34">
<polygon points="11,7 17,1.500 33,1.500 33,18 27,24 11,24" fill="#6ab0e4"/><polygon points="11,7 17,1.500 33,1.500 27,7" fill="#8ccbf7"/><polygon points="27,7 33,1.500 33,18 27,24" fill="#4a94cf"/>
<polygon points="1,16 6,11.500 20,11.500 20,27 15,32.500 1,32.500" fill="#6ab0e4"/><polygon points="1,16 6,11.500 20,11.500 15,16" fill="#8ccbf7"/><polygon points="20,21 27,21 27,24 20,32.500 15,32.500 15,24z" fill="#4a94cf"/>
<polygon points="1,16 19,16 19,32.500 1,32.500" fill="#6ab0e4"/></svg>
<svg class="abs" style="left:534px;top:89px" width="34" height="34" viewBox="0 0 34 34">
<polygon points="2,21 25,21 31,15 31,25 25,31.500 2,31.500" fill="#dcdcdc" stroke="#666"/><polygon points="25,21 31,15 31,25 25,31.500" fill="#bdbdbd" stroke="#666"/>
<polygon points="2,7 8,1.500 31,1.500 31,11 25,17 2,17" fill="#6ab0e4"/><polygon points="2,7 8,1.500 31,1.500 25,7" fill="#8ccbf7"/><polygon points="25,7 31,1.500 31,11 25,17" fill="#4a94cf"/>
<path d="M0 19.500H26L33 12" fill="none" stroke="#2a8fe0" stroke-width="1.200"/></svg>
<svg class="abs" style="left:577px;top:89px" width="34" height="34" viewBox="0 0 34 34">
<path d="M17 5V29M5 17H29" stroke="#333" stroke-width="2.200"/>
<path d="M17 1L22 8H12zM17 33L22 26H12zM1 17L8 12V22zM33 17L26 12V22z" fill="#333"/></svg>
<svg class="abs" style="left:631px;top:89px" width="34" height="34" viewBox="0 0 34 34">
<polygon points="1.500,20 14,20 14,32.500 1.500,32.500" fill="#dcdcdc" stroke="#666"/>
<polygon points="14,20 18,16 29,16 29,28 25,32.500 14,32.500" fill="#dcdcdc" stroke="#666"/><polygon points="14,20 18,16 29,16 25,20" fill="#ececec" stroke="#666"/><polygon points="25,20 29,16 29,28 25,32.500" fill="#bdbdbd" stroke="#666"/>
<polygon points="1.500,8 5,4.500 17,4.500 17,16 14,20 1.500,20" fill="#6ab0e4"/><polygon points="1.500,8 5,4.500 17,4.500 14,8" fill="#8ccbf7"/><polygon points="14,8 17,4.500 17,16 14,20" fill="#4a94cf"/>
<path d="M25 0.500L26.600 5.500L31 2.800L28.500 7.200L33.500 8.800L28.500 10.300L31 14.800L26.600 12L25 17L23.400 12L19 14.800L21.500 10.300L16.500 8.800L21.500 7.200L19 2.800L23.400 5.500z" fill="#f7a100"/></svg>
<svg class="abs" style="left:676px;top:90px" width="32" height="32" viewBox="0 0 32 32">
<path d="M1.500 10L8 2.500H12.500V15L8 19V24L1.500 29z" fill="#dcdcdc" stroke="#666"/><path d="M8 4C8 1.500 13 1.500 13 4V14L8 19z" fill="#ececec" stroke="#666"/>
<path d="M22 6L23.500 4L29.500 10V29L23 23.500V20L22 21z" fill="#dcdcdc" stroke="#666"/><path d="M17.500 13C17.500 10.500 23 10.500 23 13V21C23 23.500 17.500 23.500 17.500 21z" fill="#bdbdbd" stroke="#666"/>
<path d="M10.500 15V20M19.500 8V13" stroke="#2a8fe0" stroke-width="1.200"/></svg>
<svg class="abs" style="left:731px;top:89px" width="34" height="34" viewBox="0 0 34 34">
<polygon points="1.500,9 8,1.500 14,1.500 14,25 9,32.500 1.500,32.500" fill="#dcdcdc" stroke="#666"/><path d="M1.500 9H9V32.500M9 9L14 1.500" fill="none" stroke="#666"/>
<polygon points="10,9 19,1.500 19,24 10,32.500" fill="#5bbf7b" stroke="#3ea860" stroke-width=".6"/>
<polygon points="22,9 31,1.500 31,24 22,32.500" fill="#e59a68" stroke="#d98650" stroke-width=".6"/></svg>
<svg class="abs" style="left:791px;top:97px" width="31" height="18" viewBox="0 0 31 18">
<path d="M1.500 1V10M29.500 1V10M3 5.500H28" stroke="#555" stroke-width="1.100" fill="none"/><path d="M6 3L2.500 5.500L6 8zM25 3L28.500 5.500L25 8z" fill="#555"/>
<rect x="1" y="11" width="29" height="6" fill="#f7a100"/><path d="M4 11V14M8 11V13M12 11V14M16 11V13M20 11V14M24 11V13M28 11V14" stroke="#b06c00" stroke-width="1"/></svg>
<svg class="abs" style="left:850px;top:91px" width="29" height="29" viewBox="0 0 29 29">
<rect x=".5" y=".5" width="28" height="28" fill="#8ccbf7" stroke="#5aa4de"/><circle cx="20.500" cy="8" r="3.200" fill="#ffffc8"/>
<path d="M.8 19C4 12 10 9 14 17C15 19 17 22 19 21C21 18 25 17 28.200 23V28.200H.8z" fill="#4393cf"/></svg>
<svg class="abs" style="left:905px;top:87px" width="38" height="38" viewBox="0 0 38 38">
<rect width="38" height="38" fill="#0696d7"/><rect x="3.500" y="3.500" width="27" height="21" fill="none" stroke="#7fe07f" stroke-width="1.200" stroke-dasharray="4 2.500"/>
<path d="M24 17.500V32L27.300 29L30 35L32.500 33.800L29.800 28L34.500 27.500z" fill="#fff"/></svg>
<div class="abs" style="left:4px;top:1019px;width:299px;height:23px;background:#f2f2f2;border:1px solid #c6c6c6;box-sizing:content-box"></div>
<div class="t" style="left:28px;top:1025px;font-size:11px;color:#333"><span class="sx" style="transform:scaleX(0.727)">コメント</span></div>
<svg class="abs" style="left:282px;top:1026px" width="10" height="10" viewBox="0 0 10 10"><circle cx="5" cy="5" r="4.300" fill="#222"/><path d="M5 2.500V7.500M2.500 5H7.500" stroke="#fff" stroke-width="1.200"/></svg>
<div class="abs" style="left:299.500px;top:1025px;width:1px;height:12px;background:#555"></div><div class="abs" style="left:301.500px;top:1027px;width:1px;height:8px;background:#999"></div>
<div class="abs" style="left:841px;top:1020px;width:237px;height:23px;background:#f0f0f0"></div>
<svg class="abs" style="left:843px;top:1022px" width="18" height="20" viewBox="0 0 18 20"><path d="M9 1.500L12 5.500H10V18H8V5.500H6z" fill="#fff" stroke="#333" stroke-width=".9"/><path d="M12 9.500C16 10 17 12 15 13.500C12 15.500 5 15.500 3 14" fill="none" stroke="#333" stroke-width="1.100"/><path d="M2 14L6 11.500V16.500z" fill="#222"/><path d="M6 9.700C3 10.500 1.500 11.500 2.500 13" fill="none" stroke="#333" stroke-width="1.100"/></svg>
<svg class="abs" style="left:864px;top:1029px" width="8" height="6" viewBox="0 0 8 6"><path d="M.5 .5H7.500L4 5z" fill="#333"/></svg>
<svg class="abs" style="left:876px;top:1024px" width="18" height="17" viewBox="0 0 18 17"><path d="M4 5L8 .8L9.500 2.500L14 1V5" fill="#aab" stroke="#444" stroke-width=".9"/><rect x="1" y="5" width="15.500" height="10.500" fill="#e4e8ee" stroke="#333"/><rect x="4" y="8.500" width="9.500" height="4" fill="#9aa4b4" stroke="#444" stroke-width=".8"/></svg>
<svg class="abs" style="left:902px;top:1023px" width="18" height="18" viewBox="0 0 18 18"><path d="M5 9V3.500Q6 2.500 7 3.500V8V2Q8 1 9 2V8V2.500Q10 1.500 11 2.500V8.500V4Q12 3 13 4V11Q13 14 11.500 16H6Q3 12 1.500 10Q2.500 8.500 5 11z" fill="#fff" stroke="#333" stroke-width=".9"/></svg>
<svg class="abs" style="left:928px;top:1023px" width="18" height="18" viewBox="0 0 18 18"><circle cx="6.500" cy="7.500" r="5" fill="#dfeaf0" stroke="#444" stroke-width="1.100"/><path d="M10 11L14 15.500" stroke="#444" stroke-width="2.400"/><path d="M12.500 3H17M14.700 .8V5.200M12.500 7.500H17" stroke="#333" stroke-width="1"/></svg>
<svg class="abs" style="left:954px;top:1023px" width="18" height="18" viewBox="0 0 18 18"><rect x=".7" y=".7" width="14.500" height="14.500" fill="none" stroke="#444" stroke-width=".9" stroke-dasharray="2 1.500"/><circle cx="7.500" cy="7" r="5.800" fill="#dfeaf0" stroke="#444" stroke-width="1.100"/><path d="M11.500 11L15.500 15.500" stroke="#444" stroke-width="2.400"/></svg>
<svg class="abs" style="left:975px;top:1029px" width="8" height="6" viewBox="0 0 8 6"><path d="M.5 .5H7.500L4 5z" fill="#333"/></svg>
<svg class="abs" style="left:987px;top:1023px" width="18" height="18" viewBox="0 0 18 18"><rect x="1" y="1" width="15.500" height="11.500" fill="#eee" stroke="#444"/><rect x="3" y="3" width="11.500" height="7.500" fill="#8fb0e0" stroke="#5577aa" stroke-width=".7"/><path d="M6 12.500H11.500L12.500 15.500H5z" fill="#ddd" stroke="#666" stroke-width=".7"/></svg>
<svg class="abs" style="left:1006px;top:1029px" width="8" height="6" viewBox="0 0 8 6"><path d="M.5 .5H7.500L4 5z" fill="#333"/></svg>
<svg class="abs" style="left:1018px;top:1023px" width="18" height="18" viewBox="0 0 18 18"><defs><linearGradient id="gg" x1="0" y1="0" x2="0" y2="1"><stop offset="0" stop-color="#f4f4f6"/><stop offset="1" stop-color="#a9a9b4"/></linearGradient></defs><rect x="1" y="1" width="15.500" height="15.500" fill="url(#gg)"/><path d="M1 4.900H16.500M1 8.800H16.500M1 12.700H16.500M4.900 1V16.500M8.800 1V16.500M12.700 1V16.500" stroke="#70707c" stroke-width=".9"/><rect x="1" y="1" width="15.500" height="15.500" fill="none" stroke="#556"/></svg>
<svg class="abs" style="left:1037px;top:1029px" width="8" height="6" viewBox="0 0 8 6"><path d="M.5 .5H7.500L4 5z" fill="#333"/></svg>
<svg class="abs" style="left:1049px;top:1024px" width="17" height="15" viewBox="0 0 17 15"><rect x=".7" y=".7" width="14.600" height="12.600" fill="#9cb8e6" stroke="#46689c" stroke-width="1.200"/><path d="M8 .7V13.300M.7 7H15.300" stroke="#46689c" stroke-width="1.200"/><rect x="2.500" y="2.500" width="3.800" height="2.800" fill="#7e9fd6"/><rect x="9.800" y="2.500" width="3.800" height="2.800" fill="#7e9fd6"/><rect x="2.500" y="8.800" width="3.800" height="2.800" fill="#7e9fd6"/><rect x="9.800" y="8.800" width="3.800" height="2.800" fill="#7e9fd6"/></svg>
<svg class="abs" style="left:1068px;top:1029px" width="8" height="6" viewBox="0 0 8 6"><path d="M.5 .5H7.500L4 5z" fill="#333"/></svg>
<div class="abs" style="left:0;top:1048px;width:1920px;height:8px;background:#111"></div>
<div class="abs" style="left:48px;top:1047px;width:344px;height:9px;background:#f0f0f0;border-top:1px solid #b5b5b5;box-sizing:border-box"></div>
<div class="abs" style="left:736px;top:1048px;width:48px;height:8px;background:#a0521c"></div>
<div class="abs" style="left:932px;top:1048px;width:48px;height:8px;background:#333"></div>
<div class="abs" style="left:1907px;top:1048px;width:1px;height:8px;background:#777"></div>
<div class="abs" style="left:4px;top:152px;width:299px;height:23px;background:#f2f2f2;border:1px solid #c6c6c6;box-sizing:content-box"></div>
<svg class="abs" style="left:9px;top:160px" width="11" height="8" viewBox="0 0 11 8"><path d="M5 .5V7.500L.5 4zM10.500 .5V7.500L6 4z" fill="#222"/></svg>
<div class="t" style="left:28px;top:158px;font-size:11px;color:#333"><span class="sx" style="transform:scaleX(0.727)">ブラウザ</span></div>
<svg class="abs" style="left:282px;top:159px" width="10" height="10" viewBox="0 0 10 10"><circle cx="5" cy="5" r="4.300" fill="#222"/><path d="M2.500 5H7.500" stroke="#fff" stroke-width="1.300"/></svg>
<div class="abs" style="left:299.500px;top:158px;width:1px;height:12px;background:#555"></div><div class="abs" style="left:301.500px;top:160px;width:1px;height:8px;background:#999"></div>
<div class="abs" style="left:8px;top:182px;width:6px;height:815px;background:#cfcfcf"></div>
<div class="abs" style="left:8px;top:215px;width:6px;height:110px;background:#a3a3a3;border-radius:3px"></div>
<div class="abs" style="left:58px;top:182px;width:90px;height:20px;background:#f0f0f0"></div>
<svg class="abs" style="left:39px;top:185px" width="12" height="14" viewBox="0 0 12 14"><path d="M1.500 1.500L10 7L1.500 12.500z" fill="#fff" stroke="#333" stroke-width="1.200"/></svg>
<svg class="abs" style="left:61px;top:186px" width="16" height="12" viewBox="0 0 16 12"><path d="M1 6C4 1.500 12 1.500 15 6C12 10.500 4 10.500 1 6z" fill="none" stroke="#aaa" stroke-width="1"/><circle cx="8" cy="6" r="2.500" fill="none" stroke="#aaa"/><path d="M2.500 1L13.500 11" stroke="#aaa" stroke-width="1.100"/></svg>
<svg class="abs" style="left:86px;top:185px" width="16" height="14" viewBox="0 0 16 14"><path d="M0 1.500H6L7.500 3.500H16V13H0z" fill="#9a9a9a"/><path d="M6.500 1.500H0" stroke="#9a9a9a"/></svg>
<div class="t" style="left:115px;top:186px;font-size:11px;color:#222"><span class="sx" style="transform:scaleX(0.955)">原点</span></div>
<div class="abs" style="left:58px;top:206px;width:91px;height:20px;background:#f0f0f0"></div>
<svg class="abs" style="left:38px;top:209px" width="14" height="14" viewBox="0 0 14 14"><defs><linearGradient id="tg" x1="0" y1="1" x2="1" y2="0"><stop offset="0" stop-color="#bbb"/><stop offset="1" stop-color="#555"/></linearGradient></defs><path d="M12.500 1.500V12.500H1.500z" fill="url(#tg)" stroke="#333" stroke-width="1"/></svg>
<svg class="abs" style="left:61px;top:210px" width="16" height="12" viewBox="0 0 16 12"><path d="M0 6C3.500 .5 12.500 .5 16 6C12.500 11.500 3.500 11.500 0 6z" fill="#959595"/><circle cx="8" cy="6" r="3.600" fill="#f2f2f2"/><circle cx="8" cy="6" r="2.300" fill="#959595"/></svg>
<svg class="abs" style="left:86px;top:209px" width="16" height="14" viewBox="0 0 16 14"><path d="M0 1.500H6L7.500 3.500H16V13H0z" fill="#9a9a9a"/><path d="M6.500 1.500H0" stroke="#9a9a9a"/></svg>
<div class="t" style="left:115px;top:210px;font-size:11px;color:#222"><span class="sx" style="transform:scaleX(0.683)">ボディ</span></div>
<div class="abs" style="left:76px;top:230px;width:118px;height:20px;background:#f0f0f0"></div>
<svg class="abs" style="left:79px;top:234px" width="16" height="12" viewBox="0 0 16 12"><path d="M0 6C3.500 .5 12.500 .5 16 6C12.500 11.500 3.500 11.500 0 6z" fill="#959595"/><circle cx="8" cy="6" r="3.600" fill="#f2f2f2"/><circle cx="8" cy="6" r="2.300" fill="#959595"/></svg>
<svg class="abs" style="left:104px;top:231px" width="16" height="18" viewBox="0 0 16 18"><defs><linearGradient id="bg" x1="0" y1="0" x2="1" y2="0"><stop offset="0" stop-color="#fff"/><stop offset=".5" stop-color="#d8dde6"/><stop offset="1" stop-color="#f4f6fa"/></linearGradient></defs><path d="M1 4C1 .5 15 .5 15 4V13C15 16.500 1 16.500 1 13z" fill="url(#bg)" stroke="#3e4a5e" stroke-width="1.100"/><path d="M1 4C1 7 15 7 15 4" fill="none" stroke="#3e4a5e" stroke-width=".9"/><path d="M1.600 4C1.600 1.200 14.400 1.200 14.400 4C14.400 6.300 1.600 6.300 1.600 4z" fill="#fff"/></svg>
<div class="t" style="left:133px;top:234px;font-size:11px;color:#222"><span class="sx" style="transform:scaleX(0.782)">ボディ・上面</span></div>
<div class="abs" style="left:76px;top:254px;width:118px;height:20px;background:#f0f0f0"></div>
<svg class="abs" style="left:79px;top:258px" width="16" height="12" viewBox="0 0 16 12"><path d="M0 6C3.500 .5 12.500 .5 16 6C12.500 11.500 3.500 11.500 0 6z" fill="#959595"/><circle cx="8" cy="6" r="3.600" fill="#f2f2f2"/><circle cx="8" cy="6" r="2.300" fill="#959595"/></svg>
<svg class="abs" style="left:104px;top:255px" width="16" height="18" viewBox="0 0 16 18"><defs><linearGradient id="bg" x1="0" y1="0" x2="1" y2="0"><stop offset="0" stop-color="#fff"/><stop offset=".5" stop-color="#d8dde6"/><stop offset="1" stop-color="#f4f6fa"/></linearGradient></defs><path d="M1 4C1 .5 15 .5 15 4V13C15 16.500 1 16.500 1 13z" fill="url(#bg)" stroke="#3e4a5e" stroke-width="1.100"/><path d="M1 4C1 7 15 7 15 4" fill="none" stroke="#3e4a5e" stroke-width=".9"/><path d="M1.600 4C1.600 1.200 14.400 1.200 14.400 4C14.400 6.300 1.600 6.300 1.600 4z" fill="#fff"/></svg>
<div class="t" style="left:133px;top:258px;font-size:11px;color:#222"><span class="sx" style="transform:scaleX(0.782)">ボディ・底面</span></div>
<div class="abs" style="left:76px;top:278px;width:114px;height:20px;background:#f0f0f0"></div>
<svg class="abs" style="left:79px;top:282px" width="16" height="12" viewBox="0 0 16 12"><path d="M0 6C3.500 .5 12.500 .5 16 6C12.500 11.500 3.500 11.500 0 6z" fill="#959595"/><circle cx="8" cy="6" r="3.600" fill="#f2f2f2"/><circle cx="8" cy="6" r="2.300" fill="#959595"/></svg>
<svg class="abs" style="left:104px;top:279px" width="16" height="18" viewBox="0 0 16 18"><defs><linearGradient id="bg" x1="0" y1="0" x2="1" y2="0"><stop offset="0" stop-color="#fff"/><stop offset=".5" stop-color="#d8dde6"/><stop offset="1" stop-color="#f4f6fa"/></linearGradient></defs><path d="M1 4C1 .5 15 .5 15 4V13C15 16.500 1 16.500 1 13z" fill="url(#bg)" stroke="#3e4a5e" stroke-width="1.100"/><path d="M1 4C1 7 15 7 15 4" fill="none" stroke="#3e4a5e" stroke-width=".9"/><path d="M1.600 4C1.600 1.200 14.400 1.200 14.400 4C14.400 6.300 1.600 6.300 1.600 4z" fill="#fff"/></svg>
<div class="t" style="left:133px;top:282px;font-size:11px;color:#222"><span class="sx" style="transform:scaleX(0.712)">スタンド・右</span></div>
<div class="abs" style="left:76px;top:302px;width:114px;height:20px;background:#f0f0f0"></div>
<svg class="abs" style="left:79px;top:306px" width="16" height="12" viewBox="0 0 16 12"><path d="M0 6C3.500 .5 12.500 .5 16 6C12.500 11.500 3.500 11.500 0 6z" fill="#959595"/><circle cx="8" cy="6" r="3.600" fill="#f2f2f2"/><circle cx="8" cy="6" r="2.300" fill="#959595"/></svg>
<svg class="abs" style="left:104px;top:303px" width="16" height="18" viewBox="0 0 16 18"><defs><linearGradient id="bg" x1="0" y1="0" x2="1" y2="0"><stop offset="0" stop-color="#fff"/><stop offset=".5" stop-color="#d8dde6"/><stop offset="1" stop-color="#f4f6fa"/></linearGradient></defs><path d="M1 4C1 .5 15 .5 15 4V13C15 16.500 1 16.500 1 13z" fill="url(#bg)" stroke="#3e4a5e" stroke-width="1.100"/><path d="M1 4C1 7 15 7 15 4" fill="none" stroke="#3e4a5e" stroke-width=".9"/><path d="M1.600 4C1.600 1.200 14.400 1.200 14.400 4C14.400 6.300 1.600 6.300 1.600 4z" fill="#fff"/></svg>
<div class="t" style="left:133px;top:306px;font-size:11px;color:#222"><span class="sx" style="transform:scaleX(0.712)">スタンド・左</span></div>
<div class="abs" style="left:76px;top:326px;width:110px;height:20px;background:#f0f0f0"></div>
<svg class="abs" style="left:79px;top:330px" width="16" height="12" viewBox="0 0 16 12"><path d="M0 6C3.500 .5 12.500 .5 16 6C12.500 11.500 3.500 11.500 0 6z" fill="#959595"/><circle cx="8" cy="6" r="3.600" fill="#f2f2f2"/><circle cx="8" cy="6" r="2.300" fill="#959595"/></svg>
<svg class="abs" style="left:104px;top:327px" width="16" height="18" viewBox="0 0 16 18"><defs><linearGradient id="bg" x1="0" y1="0" x2="1" y2="0"><stop offset="0" stop-color="#fff"/><stop offset=".5" stop-color="#d8dde6"/><stop offset="1" stop-color="#f4f6fa"/></linearGradient></defs><path d="M1 4C1 .5 15 .5 15 4V13C15 16.500 1 16.500 1 13z" fill="url(#bg)" stroke="#3e4a5e" stroke-width="1.100"/><path d="M1 4C1 7 15 7 15 4" fill="none" stroke="#3e4a5e" stroke-width=".9"/><path d="M1.600 4C1.600 1.200 14.400 1.200 14.400 4C14.400 6.300 1.600 6.300 1.600 4z" fill="#fff"/></svg>
<div class="t" style="left:133px;top:330px;font-size:11px;color:#222"><span class="sx" style="transform:scaleX(0.782)">キーボード</span></div>
<div class="abs" style="left:76px;top:350px;width:149px;height:20px;background:#f0f0f0"></div>
<svg class="abs" style="left:79px;top:354px" width="16" height="12" viewBox="0 0 16 12"><path d="M0 6C3.500 .5 12.500 .5 16 6C12.500 11.500 3.500 11.500 0 6z" fill="#959595"/><circle cx="8" cy="6" r="3.600" fill="#f2f2f2"/><circle cx="8" cy="6" r="2.300" fill="#959595"/></svg>
<svg class="abs" style="left:104px;top:351px" width="16" height="18" viewBox="0 0 16 18"><defs><linearGradient id="bg" x1="0" y1="0" x2="1" y2="0"><stop offset="0" stop-color="#fff"/><stop offset=".5" stop-color="#d8dde6"/><stop offset="1" stop-color="#f4f6fa"/></linearGradient></defs><path d="M1 4C1 .5 15 .5 15 4V13C15 16.500 1 16.500 1 13z" fill="url(#bg)" stroke="#3e4a5e" stroke-width="1.100"/><path d="M1 4C1 7 15 7 15 4" fill="none" stroke="#3e4a5e" stroke-width=".9"/><path d="M1.600 4C1.600 1.200 14.400 1.200 14.400 4C14.400 6.300 1.600 6.300 1.600 4z" fill="#fff"/></svg>
<div class="t" style="left:133px;top:354px;font-size:11px;color:#222"><span class="sx" style="transform:scaleX(0.748)">キーボード・フレーム</span></div>
<div class="abs" style="left:76px;top:374px;width:169px;height:20px;background:#f0f0f0"></div>
<svg class="abs" style="left:79px;top:378px" width="16" height="12" viewBox="0 0 16 12"><path d="M0 6C3.500 .5 12.500 .5 16 6C12.500 11.500 3.500 11.500 0 6z" fill="#959595"/><circle cx="8" cy="6" r="3.600" fill="#f2f2f2"/><circle cx="8" cy="6" r="2.300" fill="#959595"/></svg>
<svg class="abs" style="left:104px;top:375px" width="16" height="18" viewBox="0 0 16 18"><defs><linearGradient id="bg" x1="0" y1="0" x2="1" y2="0"><stop offset="0" stop-color="#fff"/><stop offset=".5" stop-color="#d8dde6"/><stop offset="1" stop-color="#f4f6fa"/></linearGradient></defs><path d="M1 4C1 .5 15 .5 15 4V13C15 16.500 1 16.500 1 13z" fill="url(#bg)" stroke="#3e4a5e" stroke-width="1.100"/><path d="M1 4C1 7 15 7 15 4" fill="none" stroke="#3e4a5e" stroke-width=".9"/><path d="M1.600 4C1.600 1.200 14.400 1.200 14.400 4C14.400 6.300 1.600 6.300 1.600 4z" fill="#fff"/></svg>
<div class="t" style="left:133px;top:378px;font-size:11px;color:#222"><span class="sx" style="transform:scaleX(0.713)">キーボード・ファンクション</span></div>
<div class="abs" style="left:76px;top:398px;width:99px;height:20px;background:#f0f0f0"></div>
<svg class="abs" style="left:79px;top:402px" width="16" height="12" viewBox="0 0 16 12"><path d="M0 6C3.500 .5 12.500 .5 16 6C12.500 11.500 3.500 11.500 0 6z" fill="#959595"/><circle cx="8" cy="6" r="3.600" fill="#f2f2f2"/><circle cx="8" cy="6" r="2.300" fill="#959595"/></svg>
<svg class="abs" style="left:104px;top:399px" width="16" height="18" viewBox="0 0 16 18"><defs><linearGradient id="bg" x1="0" y1="0" x2="1" y2="0"><stop offset="0" stop-color="#fff"/><stop offset=".5" stop-color="#d8dde6"/><stop offset="1" stop-color="#f4f6fa"/></linearGradient></defs><path d="M1 4C1 .5 15 .5 15 4V13C15 16.500 1 16.500 1 13z" fill="url(#bg)" stroke="#3e4a5e" stroke-width="1.100"/><path d="M1 4C1 7 15 7 15 4" fill="none" stroke="#3e4a5e" stroke-width=".9"/><path d="M1.600 4C1.600 1.200 14.400 1.200 14.400 4C14.400 6.300 1.600 6.300 1.600 4z" fill="#fff"/></svg>
<div class="t" style="left:133px;top:402px;font-size:11px;color:#222"><span class="sx" style="transform:scaleX(0.727)">ハンドル</span></div>
<div class="abs" style="left:76px;top:422px;width:117px;height:20px;background:#f0f0f0"></div>
<svg class="abs" style="left:79px;top:426px" width="16" height="12" viewBox="0 0 16 12"><path d="M0 6C3.500 .5 12.500 .5 16 6C12.500 11.500 3.500 11.500 0 6z" fill="#959595"/><circle cx="8" cy="6" r="3.600" fill="#f2f2f2"/><circle cx="8" cy="6" r="2.300" fill="#959595"/></svg>
<svg class="abs" style="left:104px;top:423px" width="16" height="18" viewBox="0 0 16 18"><defs><linearGradient id="bg" x1="0" y1="0" x2="1" y2="0"><stop offset="0" stop-color="#fff"/><stop offset=".5" stop-color="#d8dde6"/><stop offset="1" stop-color="#f4f6fa"/></linearGradient></defs><path d="M1 4C1 .5 15 .5 15 4V13C15 16.500 1 16.500 1 13z" fill="url(#bg)" stroke="#3e4a5e" stroke-width="1.100"/><path d="M1 4C1 7 15 7 15 4" fill="none" stroke="#3e4a5e" stroke-width=".9"/><path d="M1.600 4C1.600 1.200 14.400 1.200 14.400 4C14.400 6.300 1.600 6.300 1.600 4z" fill="#fff"/></svg>
<div class="t" style="left:133px;top:426px;font-size:11px;color:#222"><span class="sx" style="transform:scaleX(0.758)">ハンドル・弦</span></div>
<div class="abs" style="left:76px;top:446px;width:119px;height:20px;background:#f0f0f0"></div>
<svg class="abs" style="left:79px;top:450px" width="16" height="12" viewBox="0 0 16 12"><path d="M0 6C3.500 .5 12.500 .5 16 6C12.500 11.500 3.500 11.500 0 6z" fill="#959595"/><circle cx="8" cy="6" r="3.600" fill="#f2f2f2"/><circle cx="8" cy="6" r="2.300" fill="#959595"/></svg>
<svg class="abs" style="left:104px;top:447px" width="16" height="18" viewBox="0 0 16 18"><defs><linearGradient id="bg" x1="0" y1="0" x2="1" y2="0"><stop offset="0" stop-color="#fff"/><stop offset=".5" stop-color="#d8dde6"/><stop offset="1" stop-color="#f4f6fa"/></linearGradient></defs><path d="M1 4C1 .5 15 .5 15 4V13C15 16.500 1 16.500 1 13z" fill="url(#bg)" stroke="#3e4a5e" stroke-width="1.100"/><path d="M1 4C1 7 15 7 15 4" fill="none" stroke="#3e4a5e" stroke-width=".9"/><path d="M1.600 4C1.600 1.200 14.400 1.200 14.400 4C14.400 6.300 1.600 6.300 1.600 4z" fill="#fff"/></svg>
<div class="t" style="left:133px;top:450px;font-size:11px;color:#222"><span class="sx" style="transform:scaleX(0.788)">電源スイッチ</span></div>
<div class="abs" style="left:76px;top:470px;width:130px;height:20px;background:#f0f0f0"></div>
<svg class="abs" style="left:79px;top:474px" width="16" height="12" viewBox="0 0 16 12"><path d="M0 6C3.500 .5 12.500 .5 16 6C12.500 11.500 3.500 11.500 0 6z" fill="#959595"/><circle cx="8" cy="6" r="3.600" fill="#f2f2f2"/><circle cx="8" cy="6" r="2.300" fill="#959595"/></svg>
<svg class="abs" style="left:104px;top:471px" width="16" height="18" viewBox="0 0 16 18"><defs><linearGradient id="bg" x1="0" y1="0" x2="1" y2="0"><stop offset="0" stop-color="#fff"/><stop offset=".5" stop-color="#d8dde6"/><stop offset="1" stop-color="#f4f6fa"/></linearGradient></defs><path d="M1 4C1 .5 15 .5 15 4V13C15 16.500 1 16.500 1 13z" fill="url(#bg)" stroke="#3e4a5e" stroke-width="1.100"/><path d="M1 4C1 7 15 7 15 4" fill="none" stroke="#3e4a5e" stroke-width=".9"/><path d="M1.600 4C1.600 1.200 14.400 1.200 14.400 4C14.400 6.300 1.600 6.300 1.600 4z" fill="#fff"/></svg>
<div class="t" style="left:133px;top:474px;font-size:11px;color:#222"><span class="sx" style="transform:scaleX(0.818)">電源スイッチ枠</span></div>
<div class="abs" style="left:76px;top:494px;width:151px;height:20px;background:#f0f0f0"></div>
<svg class="abs" style="left:79px;top:498px" width="16" height="12" viewBox="0 0 16 12"><path d="M0 6C3.500 .5 12.500 .5 16 6C12.500 11.500 3.500 11.500 0 6z" fill="#959595"/><circle cx="8" cy="6" r="3.600" fill="#f2f2f2"/><circle cx="8" cy="6" r="2.300" fill="#959595"/></svg>
<svg class="abs" style="left:104px;top:495px" width="16" height="18" viewBox="0 0 16 18"><defs><linearGradient id="bg" x1="0" y1="0" x2="1" y2="0"><stop offset="0" stop-color="#fff"/><stop offset=".5" stop-color="#d8dde6"/><stop offset="1" stop-color="#f4f6fa"/></linearGradient></defs><path d="M1 4C1 .5 15 .5 15 4V13C15 16.500 1 16.500 1 13z" fill="url(#bg)" stroke="#3e4a5e" stroke-width="1.100"/><path d="M1 4C1 7 15 7 15 4" fill="none" stroke="#3e4a5e" stroke-width=".9"/><path d="M1.600 4C1.600 1.200 14.400 1.200 14.400 4C14.400 6.300 1.600 6.300 1.600 4z" fill="#fff"/></svg>
<div class="t" style="left:133px;top:498px;font-size:11px;color:#222"><span class="sx" style="transform:scaleX(0.700)">ジョイスティックポート</span></div>
<div class="abs" style="left:76px;top:518px;width:108px;height:20px;background:#f0f0f0"></div>
<svg class="abs" style="left:79px;top:522px" width="16" height="12" viewBox="0 0 16 12"><path d="M0 6C3.500 .5 12.500 .5 16 6C12.500 11.500 3.500 11.500 0 6z" fill="#959595"/><circle cx="8" cy="6" r="3.600" fill="#f2f2f2"/><circle cx="8" cy="6" r="2.300" fill="#959595"/></svg>
<svg class="abs" style="left:104px;top:519px" width="16" height="18" viewBox="0 0 16 18"><defs><linearGradient id="bg" x1="0" y1="0" x2="1" y2="0"><stop offset="0" stop-color="#fff"/><stop offset=".5" stop-color="#d8dde6"/><stop offset="1" stop-color="#f4f6fa"/></linearGradient></defs><path d="M1 4C1 .5 15 .5 15 4V13C15 16.500 1 16.500 1 13z" fill="url(#bg)" stroke="#3e4a5e" stroke-width="1.100"/><path d="M1 4C1 7 15 7 15 4" fill="none" stroke="#3e4a5e" stroke-width=".9"/><path d="M1.600 4C1.600 1.200 14.400 1.200 14.400 4C14.400 6.300 1.600 6.300 1.600 4z" fill="#fff"/></svg>
<div class="t" style="left:133px;top:522px;font-size:11px;color:#222"><span class="sx" style="transform:scaleX(0.945)">電源LED</span></div>
<div class="abs" style="left:76px;top:542px;width:130px;height:20px;background:#f0f0f0"></div>
<svg class="abs" style="left:79px;top:546px" width="16" height="12" viewBox="0 0 16 12"><path d="M0 6C3.500 .5 12.500 .5 16 6C12.500 11.500 3.500 11.500 0 6z" fill="#959595"/><circle cx="8" cy="6" r="3.600" fill="#f2f2f2"/><circle cx="8" cy="6" r="2.300" fill="#959595"/></svg>
<svg class="abs" style="left:104px;top:543px" width="16" height="18" viewBox="0 0 16 18"><defs><linearGradient id="bg" x1="0" y1="0" x2="1" y2="0"><stop offset="0" stop-color="#fff"/><stop offset=".5" stop-color="#d8dde6"/><stop offset="1" stop-color="#f4f6fa"/></linearGradient></defs><path d="M1 4C1 .5 15 .5 15 4V13C15 16.500 1 16.500 1 13z" fill="url(#bg)" stroke="#3e4a5e" stroke-width="1.100"/><path d="M1 4C1 7 15 7 15 4" fill="none" stroke="#3e4a5e" stroke-width=".9"/><path d="M1.600 4C1.600 1.200 14.400 1.200 14.400 4C14.400 6.300 1.600 6.300 1.600 4z" fill="#fff"/></svg>
<div class="t" style="left:133px;top:546px;font-size:11px;color:#222"><span class="sx" style="transform:scaleX(0.758)">カートリッジ蓋1</span></div>
<div class="abs" style="left:76px;top:566px;width:130px;height:20px;background:#f0f0f0"></div>
<svg class="abs" style="left:79px;top:570px" width="16" height="12" viewBox="0 0 16 12"><path d="M0 6C3.500 .5 12.500 .5 16 6C12.500 11.500 3.500 11.500 0 6z" fill="#959595"/><circle cx="8" cy="6" r="3.600" fill="#f2f2f2"/><circle cx="8" cy="6" r="2.300" fill="#959595"/></svg>
<svg class="abs" style="left:104px;top:567px" width="16" height="18" viewBox="0 0 16 18"><defs><linearGradient id="bg" x1="0" y1="0" x2="1" y2="0"><stop offset="0" stop-color="#fff"/><stop offset=".5" stop-color="#d8dde6"/><stop offset="1" stop-color="#f4f6fa"/></linearGradient></defs><path d="M1 4C1 .5 15 .5 15 4V13C15 16.500 1 16.500 1 13z" fill="url(#bg)" stroke="#3e4a5e" stroke-width="1.100"/><path d="M1 4C1 7 15 7 15 4" fill="none" stroke="#3e4a5e" stroke-width=".9"/><path d="M1.600 4C1.600 1.200 14.400 1.200 14.400 4C14.400 6.300 1.600 6.300 1.600 4z" fill="#fff"/></svg>
<div class="t" style="left:133px;top:570px;font-size:11px;color:#222"><span class="sx" style="transform:scaleX(0.758)">カートリッジ蓋2</span></div>
<div class="abs" style="left:76px;top:590px;width:145px;height:20px;background:#f0f0f0"></div>
<svg class="abs" style="left:79px;top:594px" width="16" height="12" viewBox="0 0 16 12"><path d="M0 6C3.500 .5 12.500 .5 16 6C12.500 11.500 3.500 11.500 0 6z" fill="#959595"/><circle cx="8" cy="6" r="3.600" fill="#f2f2f2"/><circle cx="8" cy="6" r="2.300" fill="#959595"/></svg>
<svg class="abs" style="left:104px;top:591px" width="16" height="18" viewBox="0 0 16 18"><defs><linearGradient id="bg" x1="0" y1="0" x2="1" y2="0"><stop offset="0" stop-color="#fff"/><stop offset=".5" stop-color="#d8dde6"/><stop offset="1" stop-color="#f4f6fa"/></linearGradient></defs><path d="M1 4C1 .5 15 .5 15 4V13C15 16.500 1 16.500 1 13z" fill="url(#bg)" stroke="#3e4a5e" stroke-width="1.100"/><path d="M1 4C1 7 15 7 15 4" fill="none" stroke="#3e4a5e" stroke-width=".9"/><path d="M1.600 4C1.600 1.200 14.400 1.200 14.400 4C14.400 6.300 1.600 6.300 1.600 4z" fill="#fff"/></svg>
<div class="t" style="left:133px;top:594px;font-size:11px;color:#222"><span class="sx" style="transform:scaleX(0.711)">カートリッジフレーム</span></div>
<div class="abs" style="left:76px;top:614px;width:121px;height:20px;background:#f0f0f0"></div>
<svg class="abs" style="left:79px;top:618px" width="16" height="12" viewBox="0 0 16 12"><path d="M0 6C3.500 .5 12.500 .5 16 6C12.500 11.500 3.500 11.500 0 6z" fill="#959595"/><circle cx="8" cy="6" r="3.600" fill="#f2f2f2"/><circle cx="8" cy="6" r="2.300" fill="#959595"/></svg>
<svg class="abs" style="left:104px;top:615px" width="16" height="18" viewBox="0 0 16 18"><defs><linearGradient id="bg" x1="0" y1="0" x2="1" y2="0"><stop offset="0" stop-color="#fff"/><stop offset=".5" stop-color="#d8dde6"/><stop offset="1" stop-color="#f4f6fa"/></linearGradient></defs><path d="M1 4C1 .5 15 .5 15 4V13C15 16.500 1 16.500 1 13z" fill="url(#bg)" stroke="#3e4a5e" stroke-width="1.100"/><path d="M1 4C1 7 15 7 15 4" fill="none" stroke="#3e4a5e" stroke-width=".9"/><path d="M1.600 4C1.600 1.200 14.400 1.200 14.400 4C14.400 6.300 1.600 6.300 1.600 4z" fill="#fff"/></svg>
<div class="t" style="left:133px;top:618px;font-size:11px;color:#222"><span class="sx" style="transform:scaleX(0.822)">内部フレーム</span></div>
<div class="abs" style="left:76px;top:638px;width:102px;height:20px;background:#f0f0f0"></div>
<svg class="abs" style="left:79px;top:642px" width="16" height="12" viewBox="0 0 16 12"><path d="M0 6C3.500 .5 12.500 .5 16 6C12.500 11.500 3.500 11.500 0 6z" fill="#959595"/><circle cx="8" cy="6" r="3.600" fill="#f2f2f2"/><circle cx="8" cy="6" r="2.300" fill="#959595"/></svg>
<svg class="abs" style="left:104px;top:639px" width="16" height="18" viewBox="0 0 16 18"><defs><linearGradient id="bg" x1="0" y1="0" x2="1" y2="0"><stop offset="0" stop-color="#fff"/><stop offset=".5" stop-color="#d8dde6"/><stop offset="1" stop-color="#f4f6fa"/></linearGradient></defs><path d="M1 4C1 .5 15 .5 15 4V13C15 16.500 1 16.500 1 13z" fill="url(#bg)" stroke="#3e4a5e" stroke-width="1.100"/><path d="M1 4C1 7 15 7 15 4" fill="none" stroke="#3e4a5e" stroke-width=".9"/><path d="M1.600 4C1.600 1.200 14.400 1.200 14.400 4C14.400 6.300 1.600 6.300 1.600 4z" fill="#fff"/></svg>
<div class="t" style="left:133px;top:642px;font-size:11px;color:#222"><span class="sx" style="transform:scaleX(0.644)">スティック</span></div>
<div class="abs" style="left:58px;top:662px;width:110px;height:20px;background:#f0f0f0"></div>
<svg class="abs" style="left:39px;top:665px" width="12" height="14" viewBox="0 0 12 14"><path d="M1.500 1.500L10 7L1.500 12.500z" fill="#fff" stroke="#333" stroke-width="1.200"/></svg>
<svg class="abs" style="left:61px;top:666px" width="16" height="12" viewBox="0 0 16 12"><path d="M1 6C4 1.500 12 1.500 15 6C12 10.500 4 10.500 1 6z" fill="none" stroke="#aaa" stroke-width="1"/><circle cx="8" cy="6" r="2.500" fill="none" stroke="#aaa"/><path d="M2.500 1L13.500 11" stroke="#aaa" stroke-width="1.100"/></svg>
<svg class="abs" style="left:86px;top:665px" width="16" height="14" viewBox="0 0 16 14"><path d="M0 1.500H6L7.500 3.500H16V13H0z" fill="#9a9a9a"/><path d="M6.500 1.500H0" stroke="#9a9a9a"/></svg>
<div class="t" style="left:115px;top:666px;font-size:11px;color:#222"><span class="sx" style="transform:scaleX(0.745)">キャンバス</span></div>
<div class="abs" style="left:58px;top:686px;width:140px;height:20px;background:#f0f0f0"></div>
<svg class="abs" style="left:39px;top:689px" width="12" height="14" viewBox="0 0 12 14"><path d="M1.500 1.500L10 7L1.500 12.500z" fill="#fff" stroke="#333" stroke-width="1.200"/></svg>
<svg class="abs" style="left:61px;top:690px" width="16" height="12" viewBox="0 0 16 12"><path d="M0 6C3.500 .5 12.500 .5 16 6C12.500 11.500 3.500 11.500 0 6z" fill="#959595"/><circle cx="8" cy="6" r="3.600" fill="#f2f2f2"/><circle cx="8" cy="6" r="2.300" fill="#959595"/></svg>
<svg class="abs" style="left:86px;top:689px" width="16" height="14" viewBox="0 0 16 14"><path d="M0 1.500H6L7.500 3.500H16V13H0z" fill="#9a9a9a"/><path d="M6.500 1.500H0" stroke="#9a9a9a"/></svg>
<div class="t" style="left:115px;top:690px;font-size:11px;color:#222"><span class="sx" style="transform:scaleX(0.719)">コンストラクション</span></div>
<div class="abs" style="left:58px;top:710px;width:105px;height:20px;background:#f0f0f0"></div>
<svg class="abs" style="left:60px;top:711px" width="18" height="18" viewBox="0 0 18 18"><polygon points="1,4 4,1 13,1 10,4" fill="#8ccbf7"/><polygon points="1,4 10,4 10,14 1,14" fill="#5aa7e2"/><polygon points="10,4 13,1 13,11 10,14" fill="#3d88c4"/><polygon points="1,14 10,14 13,11 13,12.500 10,16 1,16" fill="#bbb"/><path d="M15.500 13V3" stroke="#222" stroke-width="1"/><path d="M14 4.500L15.500 1.500L17 4.500z" fill="#222"/></svg>
<div class="t" style="left:90px;top:714px;font-size:11px;color:#222"><span class="sx" style="transform:scaleX(0.905)">押し出し1878</span></div>
<div class="abs" style="left:58px;top:734px;width:105px;height:20px;background:#f0f0f0"></div>
<svg class="abs" style="left:60px;top:735px" width="18" height="18" viewBox="0 0 18 18"><polygon points="1,4 4,1 13,1 10,4" fill="#8ccbf7"/><polygon points="1,4 10,4 10,14 1,14" fill="#5aa7e2"/><polygon points="10,4 13,1 13,11 10,14" fill="#3d88c4"/><polygon points="1,14 10,14 13,11 13,12.500 10,16 1,16" fill="#bbb"/><path d="M15.500 13V3" stroke="#222" stroke-width="1"/><path d="M14 4.500L15.500 1.500L17 4.500z" fill="#222"/></svg>
<div class="t" style="left:90px;top:738px;font-size:11px;color:#222"><span class="sx" style="transform:scaleX(0.905)">押し出し1879</span></div>
<div class="abs" style="left:58px;top:758px;width:105px;height:20px;background:#f0f0f0"></div>
<svg class="abs" style="left:60px;top:759px" width="18" height="18" viewBox="0 0 18 18"><polygon points="1,4 4,1 13,1 10,4" fill="#8ccbf7"/><polygon points="1,4 10,4 10,14 1,14" fill="#5aa7e2"/><polygon points="10,4 13,1 13,11 10,14" fill="#3d88c4"/><polygon points="1,14 10,14 13,11 13,12.500 10,16 1,16" fill="#bbb"/><path d="M15.500 13V3" stroke="#222" stroke-width="1"/><path d="M14 4.500L15.500 1.500L17 4.500z" fill="#222"/></svg>
<div class="t" style="left:90px;top:762px;font-size:11px;color:#222"><span class="sx" style="transform:scaleX(0.905)">押し出し1739</span></div>
<div class="abs" style="left:58px;top:782px;width:89px;height:20px;background:#f0f0f0"></div>
<svg class="abs" style="left:60px;top:783px" width="18" height="18" viewBox="0 0 18 18"><path d="M1.500 15V7L7 1.500H12L15.500 8L12 15z" fill="#e2e2e2" stroke="#666" stroke-width=".9"/><polygon points="7,3 11,1.500 14.500,9 10,12" fill="#3d88c4"/><path d="M12 1L15 6.500" stroke="#333" stroke-width="1"/></svg>
<div class="t" style="left:90px;top:786px;font-size:11px;color:#222"><span class="sx" style="transform:scaleX(0.990)">勾配1741</span></div>
<div class="abs" style="left:58px;top:806px;width:89px;height:20px;background:#f0f0f0"></div>
<svg class="abs" style="left:60px;top:807px" width="18" height="18" viewBox="0 0 18 18"><path d="M1.500 15V7L7 1.500H12L15.500 8L12 15z" fill="#e2e2e2" stroke="#666" stroke-width=".9"/><polygon points="7,3 11,1.500 14.500,9 10,12" fill="#3d88c4"/><path d="M12 1L15 6.500" stroke="#333" stroke-width="1"/></svg>
<div class="t" style="left:90px;top:810px;font-size:11px;color:#222"><span class="sx" style="transform:scaleX(0.990)">勾配1839</span></div>
<div class="abs" style="left:58px;top:830px;width:105px;height:20px;background:#f0f0f0"></div>
<svg class="abs" style="left:60px;top:831px" width="18" height="18" viewBox="0 0 18 18"><polygon points="1,4 4,1 13,1 10,4" fill="#8ccbf7"/><polygon points="1,4 10,4 10,14 1,14" fill="#5aa7e2"/><polygon points="10,4 13,1 13,11 10,14" fill="#3d88c4"/><polygon points="1,14 10,14 13,11 13,12.500 10,16 1,16" fill="#bbb"/><path d="M15.500 13V3" stroke="#222" stroke-width="1"/><path d="M14 4.500L15.500 1.500L17 4.500z" fill="#222"/></svg>
<div class="t" style="left:90px;top:834px;font-size:11px;color:#222"><span class="sx" style="transform:scaleX(0.905)">押し出し1994</span></div>
<div class="abs" style="left:58px;top:854px;width:89px;height:20px;background:#f0f0f0"></div>
<svg class="abs" style="left:60px;top:855px" width="18" height="18" viewBox="0 0 18 18"><path d="M1.500 15V7L7 1.500H12L15.500 8L12 15z" fill="#e2e2e2" stroke="#666" stroke-width=".9"/><polygon points="7,3 11,1.500 14.500,9 10,12" fill="#3d88c4"/><path d="M12 1L15 6.500" stroke="#333" stroke-width="1"/></svg>
<div class="t" style="left:90px;top:858px;font-size:11px;color:#222"><span class="sx" style="transform:scaleX(0.990)">勾配1995</span></div>
<div class="abs" style="left:58px;top:878px;width:89px;height:20px;background:#f0f0f0"></div>
<svg class="abs" style="left:60px;top:879px" width="18" height="18" viewBox="0 0 18 18"><path d="M1.500 15V7L7 1.500H12L15.500 8L12 15z" fill="#e2e2e2" stroke="#666" stroke-width=".9"/><polygon points="7,3 11,1.500 14.500,9 10,12" fill="#3d88c4"/><path d="M12 1L15 6.500" stroke="#333" stroke-width="1"/></svg>
<div class="t" style="left:90px;top:882px;font-size:11px;color:#222"><span class="sx" style="transform:scaleX(0.990)">勾配1996</span></div>
<div class="abs" style="left:58px;top:902px;width:105px;height:20px;background:#f0f0f0"></div>
<svg class="abs" style="left:60px;top:903px" width="18" height="18" viewBox="0 0 18 18"><polygon points="1,4 4,1 13,1 10,4" fill="#8ccbf7"/><polygon points="1,4 10,4 10,14 1,14" fill="#5aa7e2"/><polygon points="10,4 13,1 13,11 10,14" fill="#3d88c4"/><polygon points="1,14 10,14 13,11 13,12.500 10,16 1,16" fill="#bbb"/><path d="M15.500 13V3" stroke="#222" stroke-width="1"/><path d="M14 4.500L15.500 1.500L17 4.500z" fill="#222"/></svg>
<div class="t" style="left:90px;top:906px;font-size:11px;color:#222"><span class="sx" style="transform:scaleX(0.905)">押し出し2004</span></div>
<div class="abs" style="left:58px;top:926px;width:102px;height:20px;background:#f0f0f0"></div>
<svg class="abs" style="left:60px;top:927px" width="18" height="18" viewBox="0 0 18 18"><path d="M1.500 15.500V7Q1.500 2 8 2Q15.500 4 15.500 11L12.500 15.500z" fill="#dcdcdc" stroke="#666" stroke-width=".9"/><path d="M8 2Q15.500 3 15.500 11L12.500 12Q12 6 8 2z" fill="#4a94cf"/></svg>
<div class="t" style="left:90px;top:930px;font-size:11px;color:#222"><span class="sx" style="transform:scaleX(0.744)">フィレット2030</span></div>
<div class="abs" style="left:58px;top:950px;width:102px;height:20px;background:#f0f0f0"></div>
<svg class="abs" style="left:60px;top:951px" width="18" height="18" viewBox="0 0 18 18"><path d="M1.500 15.500V7Q1.500 2 8 2Q15.500 4 15.500 11L12.500 15.500z" fill="#dcdcdc" stroke="#666" stroke-width=".9"/><path d="M8 2Q15.500 3 15.500 11L12.500 12Q12 6 8 2z" fill="#4a94cf"/></svg>
<div class="t" style="left:90px;top:954px;font-size:11px;color:#222"><span class="sx" style="transform:scaleX(0.744)">フィレット2031</span></div>
<div class="abs" style="left:58px;top:974px;width:105px;height:20px;background:#f0f0f0"></div>
<svg class="abs" style="left:60px;top:975px" width="18" height="18" viewBox="0 0 18 18"><polygon points="1,4 4,1 13,1 10,4" fill="#8ccbf7"/><polygon points="1,4 10,4 10,14 1,14" fill="#5aa7e2"/><polygon points="10,4 13,1 13,11 10,14" fill="#3d88c4"/><polygon points="1,14 10,14 13,11 13,12.500 10,16 1,16" fill="#bbb"/><path d="M15.500 13V3" stroke="#222" stroke-width="1"/><path d="M14 4.500L15.500 1.500L17 4.500z" fill="#222"/></svg>
<div class="t" style="left:90px;top:978px;font-size:11px;color:#222"><span class="sx" style="transform:scaleX(0.905)">押し出し2100</span></div>
</body></html>
